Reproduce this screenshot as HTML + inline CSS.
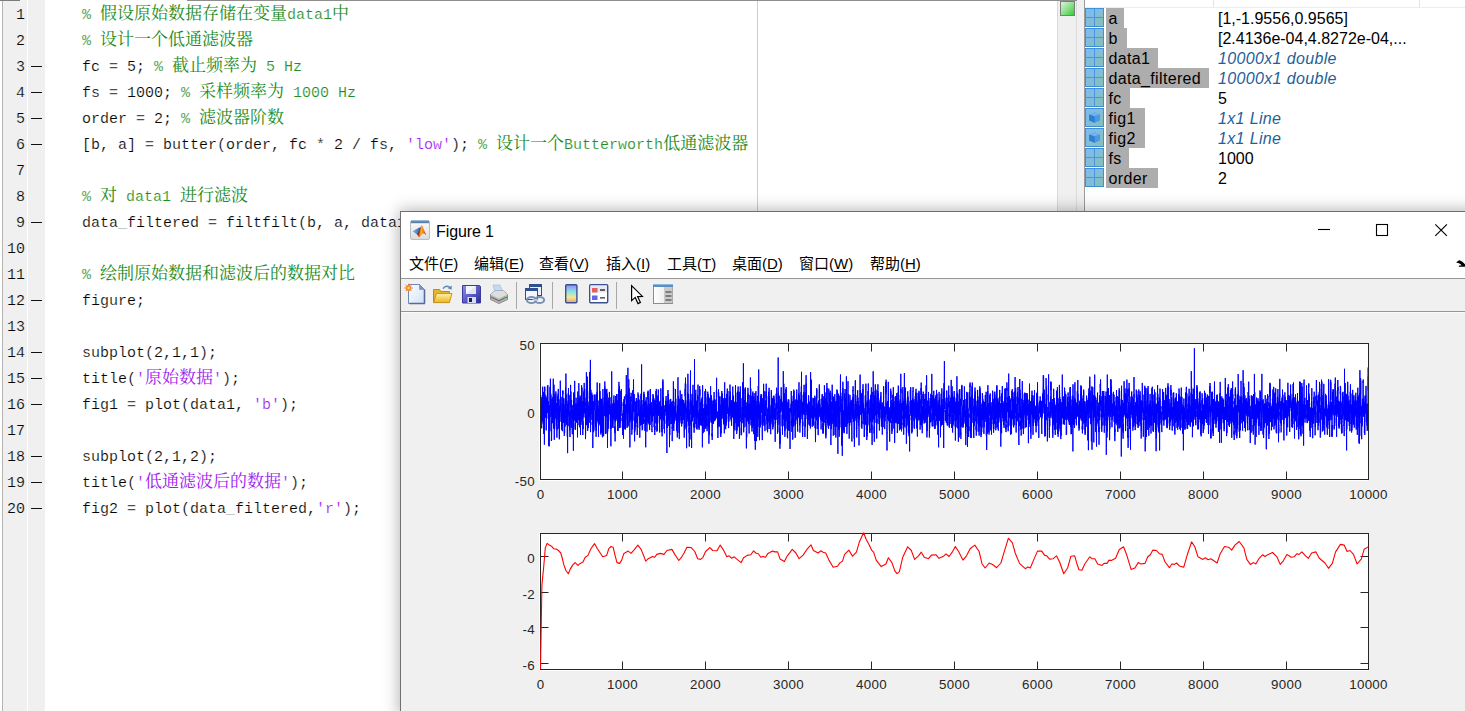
<!DOCTYPE html>
<html lang="zh-CN"><head><meta charset="utf-8"><title>MATLAB</title>
<style>
*{box-sizing:border-box;margin:0;padding:0}
html,body{width:1465px;height:711px;overflow:hidden;background:#fff}
body{position:relative;font-family:"Liberation Sans","Noto Sans CJK SC",sans-serif;color:#000}
/* editor */
#ed{position:absolute;left:0;top:0;width:1085px;height:711px;background:#fff}
#ed .edge{position:absolute;left:2px;top:0;width:1px;height:711px;background:#b4b4b4}
#ed .g1{position:absolute;left:3px;top:0;width:24px;height:711px;background:#f0f0f0}
#ed .g2{position:absolute;left:28px;top:0;width:17px;height:711px;background:#f0f0f0}
#ed .topl{position:absolute;left:187px;top:0;width:890px;height:1px;background:#8e8e8e}
#ed .tab{position:absolute;left:0;top:0;width:20px;height:1px;background:#7c7c7c}
#ed .margin{position:absolute;left:757px;top:1px;width:1px;height:711px;background:#cfcfcf}
#ed .sb{position:absolute;left:1057px;top:1px;width:20px;height:711px;background:#f0f0f0;border-left:1px solid #dadada;border-right:1px solid #dcdcdc}
#ed .sp{position:absolute;left:1077px;top:0;width:8px;height:711px;background:#f0f0f0;border-right:1px solid #9c9c9c}
#ed .ok{position:absolute;left:1060px;top:1px;width:15px;height:15px;border:1px solid #7d7d7d;background:linear-gradient(135deg,#d9f5d9 0%,#8fe08f 50%,#2fcf2f 100%)}
.ln{position:absolute;left:0;height:26px;width:1057px;line-height:26px;white-space:pre;font-family:"Liberation Mono","Noto Serif CJK SC",monospace;font-size:15px;color:#000}
.ln .no{position:absolute;left:0;width:25px;text-align:right;top:0;-webkit-text-stroke:.2px #f0f0f0}
.ln .dash{position:absolute;left:31px;top:11px;width:11px;height:1px;background:#111}
.ln .code{position:absolute;left:82px;top:0;-webkit-text-stroke:.2px #fff}
.ln .z{-webkit-text-stroke:0;font-size:17px;font-family:"Noto Serif CJK SC",serif;line-height:0;position:relative;top:0}
.c{color:#228b22}.s{color:#a020f0}
/* workspace */
#ws{position:absolute;left:1085px;top:0;width:380px;height:711px;background:#fff}
#ws .hl{position:absolute;left:0;top:7px;width:380px;height:1px;background:#ececec}
#ws .hv{position:absolute;left:128px;top:0;width:1px;height:7px;background:#e4e4e4}
#ws .hv2{position:absolute;left:334px;top:0;width:1px;height:7px;background:#e4e4e4}
.wr{position:absolute;left:0;width:380px;height:20px;font-size:16px;line-height:21px;white-space:nowrap}
.wr .ic{position:absolute;left:0;top:0;width:19px;height:18.5px;display:block}
.ic.g{border:1px solid #3f8fd8;background:
 linear-gradient(#4796dc,#4796dc) 8px 0/1.4px 100% no-repeat,
 linear-gradient(#4796dc,#4796dc) 0 7.6px/100% 1.4px no-repeat,
 linear-gradient(135deg,#7bbcf2 0%,#82bddc 45%,#86bfb0 100%)}
.ic.o{border:1px solid #3f8fd8;background:linear-gradient(135deg,#7bbcf2 0%,#82bddc 45%,#86bfb0 100%)}
.ic.o svg{position:absolute;left:-1px;top:-1px}
.wr .nm{position:absolute;left:21px;top:0;height:20px;background:#adadad;display:block}
.wr .nm b{font-weight:normal;position:absolute;left:2.5px;top:0;letter-spacing:.35px}
.wr .vl{position:absolute;left:133px;top:0}
.wr .it{font-style:italic;color:#1f5f9a;letter-spacing:.35px}
/* figure */
#fig{position:absolute;left:400px;top:211px;width:1120px;height:505px;background:#f0f0f0;border:1px solid #6f6f6f;box-shadow:0 0 15px 1px rgba(0,0,0,.30)}
#fig .tb{position:absolute;left:0;top:0;width:100%;height:66px;background:#fff}
#fig .ttl{position:absolute;left:35px;top:9.5px;font-size:16px;letter-spacing:-.1px;line-height:20px;white-space:nowrap}
#fig .mi{position:absolute;top:41.5px;font-size:15px;line-height:20px;white-space:nowrap;font-family:"Liberation Sans","Noto Sans CJK SC",sans-serif}
#fig .mi u{text-decoration:underline;text-underline-offset:2px}
#fig .l1{position:absolute;left:0;top:66px;width:100%;height:1px;background:#969696}
#fig .tool{position:absolute;left:0;top:67px;width:100%;height:32px;background:#f0f0f0}
#fig .l2{position:absolute;left:0;top:99px;width:100%;height:1px;background:#969696}
#fig .l3{position:absolute;left:0;top:100px;width:100%;height:1px;background:#fbfbfb}
#fig .sep{position:absolute;top:3px;width:1px;height:27px;background:#a8a8a8}
#fig svg.ti{position:absolute}
#plots{position:absolute;left:-1px;top:-1px;font-family:"Liberation Sans",sans-serif;font-size:13.33px;fill:#262626;letter-spacing:.3px}
#chrome{position:absolute;left:-1px;top:-1px}
</style></head>
<body>
<div id="ed">
<div class="g1"></div><div class="g2"></div><div class="edge"></div>
<div class="margin"></div><div class="sb"></div><div class="sp"></div><div class="topl"></div><div class="tab"></div><div class="ok"></div>
<div class="ln" style="top:3px"><span class="no">1</span><span class="code"><span class="c">% <span class="z">假设原始数据存储在变量</span>data1<span class="z">中</span></span></span></div>
<div class="ln" style="top:29px"><span class="no">2</span><span class="code"><span class="c">% <span class="z">设计一个低通滤波器</span></span></span></div>
<div class="ln" style="top:55px"><span class="no">3</span><i class="dash"></i><span class="code">fc = 5; <span class="c">% <span class="z">截止频率为</span> 5 Hz</span></span></div>
<div class="ln" style="top:81px"><span class="no">4</span><i class="dash"></i><span class="code">fs = 1000; <span class="c">% <span class="z">采样频率为</span> 1000 Hz</span></span></div>
<div class="ln" style="top:107px"><span class="no">5</span><i class="dash"></i><span class="code">order = 2; <span class="c">% <span class="z">滤波器阶数</span></span></span></div>
<div class="ln" style="top:133px"><span class="no">6</span><i class="dash"></i><span class="code">[b, a] = butter(order, fc * 2 / fs, <span class="s">'low'</span>); <span class="c">% <span class="z">设计一个</span>Butterworth<span class="z">低通滤波器</span></span></span></div>
<div class="ln" style="top:159px"><span class="no">7</span><span class="code"></span></div>
<div class="ln" style="top:185px"><span class="no">8</span><span class="code"><span class="c">% <span class="z">对</span> data1 <span class="z">进行滤波</span></span></span></div>
<div class="ln" style="top:211px"><span class="no">9</span><i class="dash"></i><span class="code">data_filtered = filtfilt(b, a, data1);</span></div>
<div class="ln" style="top:237px"><span class="no">10</span><span class="code"></span></div>
<div class="ln" style="top:263px"><span class="no">11</span><span class="code"><span class="c">% <span class="z">绘制原始数据和滤波后的数据对比</span></span></span></div>
<div class="ln" style="top:289px"><span class="no">12</span><i class="dash"></i><span class="code">figure;</span></div>
<div class="ln" style="top:315px"><span class="no">13</span><span class="code"></span></div>
<div class="ln" style="top:341px"><span class="no">14</span><i class="dash"></i><span class="code">subplot(2,1,1);</span></div>
<div class="ln" style="top:367px"><span class="no">15</span><i class="dash"></i><span class="code">title(<span class="s">'<span class="z">原始数据</span>'</span>);</span></div>
<div class="ln" style="top:393px"><span class="no">16</span><i class="dash"></i><span class="code">fig1 = plot(data1, <span class="s">'b'</span>);</span></div>
<div class="ln" style="top:419px"><span class="no">17</span><span class="code"></span></div>
<div class="ln" style="top:445px"><span class="no">18</span><i class="dash"></i><span class="code">subplot(2,1,2);</span></div>
<div class="ln" style="top:471px"><span class="no">19</span><i class="dash"></i><span class="code">title(<span class="s">'<span class="z">低通滤波后的数据</span>'</span>);</span></div>
<div class="ln" style="top:497px"><span class="no">20</span><i class="dash"></i><span class="code">fig2 = plot(data_filtered,<span class="s">'r'</span>);</span></div>

</div>
<div id="ws"><div class="hl"></div><div class="hv"></div><div class="hv2"></div>
<div class="wr" style="top:8px"><i class="ic g"></i><span class="nm" style="width:18px"><b>a</b></span><span class="vl">[1,-1.9556,0.9565]</span></div>
<div class="wr" style="top:28px"><i class="ic g"></i><span class="nm" style="width:21px"><b>b</b></span><span class="vl">[2.4136e-04,4.8272e-04,...</span></div>
<div class="wr" style="top:48px"><i class="ic g"></i><span class="nm" style="width:52px"><b>data1</b></span><span class="vl it">10000x1 double</span></div>
<div class="wr" style="top:68px"><i class="ic g"></i><span class="nm" style="width:103px"><b>data_filtered</b></span><span class="vl it">10000x1 double</span></div>
<div class="wr" style="top:88px"><i class="ic g"></i><span class="nm" style="width:24px"><b>fc</b></span><span class="vl">5</span></div>
<div class="wr" style="top:108px"><i class="ic o"><svg width="19" height="19" viewBox="0 0 19 19"><path d="M4.2 6.6 L9.8 4.6 L15 6.4 L15 12.2 L9.6 14.8 L4.2 12.4Z" fill="#3f8fe0"/><path d="M4.2 6.6 L9.6 8.6 L15 6.4 L9.8 4.6Z" fill="#6db3f2"/><path d="M9.6 8.6 L15 6.4 L15 12.2 L9.6 14.8Z" fill="#4a9ae8"/><path d="M4.2 6.6 L9.6 8.6 L9.6 14.8 L4.2 12.4Z" fill="#2f7fd0"/></svg></i><span class="nm" style="width:39px"><b>fig1</b></span><span class="vl it">1x1 Line</span></div>
<div class="wr" style="top:128px"><i class="ic o"><svg width="19" height="19" viewBox="0 0 19 19"><path d="M4.2 6.6 L9.8 4.6 L15 6.4 L15 12.2 L9.6 14.8 L4.2 12.4Z" fill="#3f8fe0"/><path d="M4.2 6.6 L9.6 8.6 L15 6.4 L9.8 4.6Z" fill="#6db3f2"/><path d="M9.6 8.6 L15 6.4 L15 12.2 L9.6 14.8Z" fill="#4a9ae8"/><path d="M4.2 6.6 L9.6 8.6 L9.6 14.8 L4.2 12.4Z" fill="#2f7fd0"/></svg></i><span class="nm" style="width:39px"><b>fig2</b></span><span class="vl it">1x1 Line</span></div>
<div class="wr" style="top:148px"><i class="ic g"></i><span class="nm" style="width:23px"><b>fs</b></span><span class="vl">1000</span></div>
<div class="wr" style="top:168px"><i class="ic g"></i><span class="nm" style="width:52px"><b>order</b></span><span class="vl">2</span></div>

</div>
<div id="fig">
<svg id="plots" width="1065" height="500" viewBox="400 211 1065 500"><rect x="539.0" y="343.5" width="829.5" height="137.5" fill="#fff"/><rect x="539.0" y="533.5" width="829.5" height="137.5" fill="#fff"/><path d="M622.5 479.5v-8M622.5 343.5v8M705.5 479.5v-8M705.5 343.5v8M788.5 479.5v-8M788.5 343.5v8M871.5 479.5v-8M871.5 343.5v8M954.5 479.5v-8M954.5 343.5v8M1037.5 479.5v-8M1037.5 343.5v8M1120.5 479.5v-8M1120.5 343.5v8M1203.5 479.5v-8M1203.5 343.5v8M1286.5 479.5v-8M1286.5 343.5v8M540.5 411.5h8M1368.5 411.5h-8" stroke="#262626" stroke-width="1" fill="none"/><path d="M622.5 669.5v-8M622.5 533.5v8M705.5 669.5v-8M705.5 533.5v8M788.5 669.5v-8M788.5 533.5v8M871.5 669.5v-8M871.5 533.5v8M954.5 669.5v-8M954.5 533.5v8M1037.5 669.5v-8M1037.5 533.5v8M1120.5 669.5v-8M1120.5 533.5v8M1203.5 669.5v-8M1203.5 533.5v8M1286.5 669.5v-8M1286.5 533.5v8M540.5 556.5h8M1368.5 556.5h-8M540.5 592.5h8M1368.5 592.5h-8M540.5 627.5h8M1368.5 627.5h-8M540.5 663.5h8M1368.5 663.5h-8" stroke="#262626" stroke-width="1" fill="none"/><rect x="540.5" y="343.5" width="828.0" height="136.0" fill="none" stroke="#262626" stroke-width="1"/><rect x="540.5" y="533.5" width="828.0" height="136.0" fill="none" stroke="#262626" stroke-width="1"/><clipPath id="c1"><rect x="541.0" y="343.5" width="827.0" height="136.0"/></clipPath><polyline clip-path="url(#c1)" points="540.5,410.5 540.6,398.6 540.7,395.1 540.7,409.9 540.8,418.7 540.9,409.7 541.0,406.9 541.1,401.6 541.2,421.4 541.2,422.1 541.3,405.0 541.4,411.1 541.5,406.1 541.6,414.9 541.7,428.3 541.7,425.7 541.8,397.2 541.9,417.6 542.0,417.7 542.1,420.8 542.2,410.2 542.2,409.8 542.3,411.0 542.4,405.6 542.5,399.7 542.6,393.1 542.7,386.7 542.7,397.3 542.8,417.4 542.9,399.0 543.0,420.2 543.1,412.5 543.1,423.6 543.2,413.3 543.3,422.2 543.4,416.0 543.5,391.9 543.6,422.8 543.6,417.5 543.7,433.8 543.8,422.6 543.9,412.2 544.0,416.4 544.1,410.1 544.1,410.1 544.2,419.6 544.3,406.2 544.4,444.6 544.5,386.9 544.6,403.3 544.6,389.0 544.7,390.9 544.8,386.7 544.9,404.1 545.0,394.4 545.1,408.0 545.1,400.2 545.2,405.7 545.3,409.8 545.4,417.7 545.5,404.4 545.6,407.0 545.6,396.9 545.7,414.2 545.8,406.2 545.9,406.6 546.0,412.1 546.0,416.3 546.1,420.0 546.2,430.3 546.3,430.3 546.4,421.5 546.5,409.5 546.5,398.1 546.6,402.6 546.7,402.0 546.8,404.3 546.9,405.0 547.0,409.4 547.0,404.4 547.1,395.8 547.2,411.2 547.3,411.8 547.4,386.4 547.5,398.5 547.5,389.7 547.6,393.2 547.7,413.0 547.8,385.0 547.9,393.2 548.0,409.5 548.0,404.6 548.1,409.9 548.2,418.6 548.3,412.0 548.4,407.8 548.4,401.4 548.5,404.9 548.6,413.4 548.7,405.1 548.8,445.6 548.9,415.7 548.9,415.8 549.0,430.7 549.1,446.4 549.2,435.9 549.3,423.3 549.4,417.9 549.4,406.3 549.5,425.3 549.6,413.8 549.7,405.4 549.8,412.4 549.9,431.3 549.9,401.9 550.0,386.8 550.1,395.8 550.2,410.1 550.3,403.6 550.4,395.9 550.4,378.7 550.5,396.9 550.6,403.4 550.7,393.3 550.8,409.5 550.9,395.1 550.9,416.9 551.0,415.1 551.1,404.8 551.2,398.8 551.3,410.2 551.3,418.0 551.4,441.0 551.5,436.3 551.6,440.2 551.7,434.7 551.8,420.3 551.8,423.5 551.9,409.0 552.0,410.3 552.1,413.9 552.2,410.0 552.3,407.3 552.3,403.6 552.4,415.1 552.5,413.0 552.6,422.7 552.7,397.3 552.8,398.6 552.8,409.1 552.9,408.3 553.0,411.4 553.1,395.9 553.2,392.2 553.3,378.7 553.3,398.7 553.4,410.9 553.5,428.5 553.6,398.9 553.7,409.4 553.7,424.8 553.8,409.5 553.9,424.8 554.0,384.7 554.1,408.4 554.2,416.6 554.2,426.4 554.3,439.8 554.4,419.1 554.5,427.8 554.6,405.9 554.7,429.3 554.7,418.8 554.8,400.6 554.9,394.9 555.0,417.1 555.1,418.1 555.2,395.4 555.2,393.7 555.3,407.4 555.4,402.9 555.5,404.9 555.6,411.2 555.7,408.8 555.7,394.3 555.8,401.1 555.9,391.4 556.0,411.7 556.1,412.2 556.2,419.4 556.2,412.1 556.3,422.3 556.4,426.2 556.5,405.0 556.6,402.8 556.6,412.0 556.7,411.9 556.8,425.2 556.9,437.6 557.0,426.6 557.1,426.5 557.1,428.7 557.2,429.6 557.3,423.7 557.4,411.0 557.5,409.7 557.6,415.1 557.6,398.8 557.7,409.5 557.8,403.8 557.9,396.2 558.0,411.5 558.1,419.2 558.1,393.7 558.2,403.9 558.3,388.9 558.4,399.4 558.5,395.9 558.6,400.1 558.6,426.7 558.7,408.4 558.8,423.8 558.9,428.0 559.0,428.8 559.0,422.0 559.1,424.5 559.2,419.9 559.3,439.3 559.4,426.6 559.5,438.4 559.5,415.4 559.6,405.9 559.7,417.5 559.8,408.9 559.9,409.0 560.0,399.3 560.0,411.9 560.1,408.9 560.2,405.3 560.3,380.7 560.4,389.4 560.5,402.9 560.5,402.9 560.6,407.0 560.7,409.3 560.8,412.8 560.9,413.9 561.0,421.8 561.0,416.5 561.1,396.9 561.2,406.4 561.3,410.4 561.4,412.8 561.5,414.8 561.5,416.7 561.6,429.6 561.7,426.8 561.8,422.0 561.9,426.1 561.9,422.1 562.0,419.6 562.1,420.1 562.2,403.4 562.3,431.2 562.4,413.3 562.4,416.2 562.5,416.3 562.6,404.8 562.7,390.6 562.8,394.2 562.9,390.7 562.9,400.1 563.0,401.4 563.1,397.8 563.2,414.4 563.3,420.8 563.4,421.8 563.4,420.5 563.5,422.9 563.6,401.6 563.7,408.0 563.8,413.0 563.9,398.5 563.9,416.6 564.0,404.5 564.1,408.0 564.2,431.9 564.3,435.8 564.3,434.2 564.4,422.3 564.5,415.2 564.6,433.0 564.7,409.7 564.8,418.1 564.8,414.4 564.9,415.7 565.0,413.8 565.1,426.6 565.2,419.6 565.3,421.6 565.3,406.8 565.4,393.1 565.5,387.6 565.6,409.8 565.7,417.6 565.8,402.2 565.8,402.7 565.9,373.6 566.0,389.8 566.1,405.0 566.2,394.8 566.3,402.3 566.3,424.9 566.4,415.6 566.5,413.1 566.6,410.8 566.7,409.9 566.8,413.9 566.8,409.4 566.9,418.0 567.0,422.7 567.1,404.0 567.2,415.9 567.2,417.2 567.3,436.6 567.4,422.4 567.5,411.9 567.6,453.1 567.7,405.6 567.7,416.3 567.8,407.5 567.9,412.1 568.0,409.1 568.1,400.7 568.2,414.5 568.2,393.4 568.3,409.2 568.4,406.3 568.5,388.0 568.6,407.4 568.7,405.7 568.7,399.0 568.8,400.6 568.9,426.2 569.0,406.7 569.1,394.9 569.2,400.8 569.2,413.1 569.3,416.1 569.4,413.5 569.5,425.4 569.6,422.3 569.6,426.1 569.7,430.3 569.8,423.4 569.9,431.0 570.0,437.0 570.1,411.0 570.1,424.7 570.2,414.8 570.3,412.1 570.4,413.9 570.5,417.1 570.6,408.2 570.6,384.9 570.7,406.4 570.8,399.9 570.9,391.6 571.0,397.3 571.1,399.6 571.1,401.2 571.2,427.9 571.3,418.4 571.4,409.9 571.5,406.7 571.6,399.9 571.6,407.0 571.7,413.0 571.8,410.7 571.9,412.8 572.0,412.1 572.0,411.6 572.1,423.5 572.2,430.7 572.3,434.2 572.4,420.7 572.5,415.9 572.5,415.2 572.6,413.2 572.7,410.2 572.8,414.2 572.9,405.3 573.0,420.0 573.0,412.7 573.1,417.3 573.2,404.8 573.3,416.0 573.4,450.7 573.5,403.7 573.5,393.6 573.6,410.0 573.7,409.4 573.8,392.4 573.9,406.9 574.0,395.5 574.0,406.2 574.1,404.2 574.2,420.8 574.3,401.0 574.4,413.3 574.5,418.7 574.5,393.2 574.6,404.9 574.7,380.9 574.8,407.5 574.9,414.0 574.9,415.6 575.0,408.3 575.1,427.8 575.2,429.3 575.3,423.2 575.4,429.9 575.4,415.4 575.5,415.3 575.6,421.7 575.7,403.5 575.8,405.3 575.9,408.1 575.9,414.2 576.0,421.3 576.1,397.7 576.2,400.4 576.3,416.3 576.4,404.7 576.4,419.5 576.5,408.9 576.6,409.8 576.7,408.0 576.8,409.1 576.9,409.5 576.9,423.0 577.0,418.7 577.1,422.0 577.2,421.8 577.3,419.7 577.3,414.5 577.4,403.6 577.5,437.4 577.6,409.8 577.7,412.7 577.8,391.5 577.8,403.0 577.9,425.2 578.0,407.6 578.1,415.5 578.2,402.5 578.3,420.0 578.3,409.1 578.4,406.6 578.5,403.6 578.6,405.0 578.7,413.0 578.8,390.6 578.8,383.2 578.9,395.1 579.0,406.0 579.1,398.3 579.2,397.9 579.3,407.0 579.3,408.4 579.4,398.9 579.5,420.6 579.6,415.8 579.7,427.3 579.8,417.0 579.8,417.3 579.9,419.2 580.0,416.9 580.1,395.6 580.2,415.7 580.2,418.0 580.3,401.3 580.4,423.6 580.5,435.0 580.6,413.6 580.7,422.1 580.7,397.0 580.8,421.7 580.9,416.0 581.0,424.8 581.1,410.2 581.2,416.7 581.2,405.6 581.3,405.3 581.4,404.4 581.5,388.1 581.6,385.2 581.7,395.7 581.7,406.9 581.8,411.3 581.9,402.8 582.0,387.6 582.1,414.9 582.2,417.7 582.2,417.0 582.3,420.4 582.4,419.3 582.5,412.8 582.6,401.3 582.6,416.1 582.7,423.0 582.8,435.0 582.9,421.9 583.0,421.4 583.1,429.1 583.1,425.4 583.2,413.9 583.3,402.3 583.4,405.6 583.5,409.2 583.6,413.8 583.6,408.3 583.7,411.1 583.8,392.4 583.9,417.5 584.0,407.8 584.1,390.6 584.1,400.5 584.2,382.9 584.3,392.3 584.4,393.8 584.5,401.4 584.6,413.3 584.6,412.9 584.7,388.8 584.8,405.5 584.9,405.8 585.0,402.8 585.1,406.1 585.1,402.2 585.2,413.3 585.3,412.9 585.4,408.1 585.5,425.2 585.5,439.1 585.6,435.2 585.7,432.4 585.8,416.9 585.9,422.7 586.0,420.1 586.0,413.8 586.1,397.7 586.2,411.4 586.3,409.6 586.4,372.2 586.5,408.5 586.5,403.0 586.6,399.0 586.7,425.1 586.8,399.3 586.9,407.5 587.0,406.6 587.0,379.8 587.1,398.2 587.2,376.6 587.3,388.5 587.4,409.2 587.5,399.7 587.5,401.1 587.6,412.1 587.7,430.9 587.8,413.9 587.9,414.7 587.9,424.6 588.0,401.5 588.1,421.2 588.2,424.6 588.3,425.8 588.4,427.9 588.4,425.8 588.5,416.3 588.6,412.4 588.7,417.4 588.8,411.8 588.9,422.9 588.9,406.5 589.0,417.4 589.1,404.7 589.2,409.8 589.3,402.0 589.4,391.3 589.4,399.0 589.5,371.9 589.6,397.9 589.7,402.7 589.8,412.8 589.9,397.3 589.9,399.1 590.0,408.4 590.1,422.7 590.2,415.3 590.3,408.5 590.4,420.9 590.4,359.9 590.5,432.1 590.6,431.3 590.7,421.8 590.8,424.8 590.8,416.3 590.9,389.8 591.0,395.8 591.1,419.9 591.2,408.1 591.3,410.3 591.3,412.2 591.4,402.1 591.5,413.8 591.6,412.0 591.7,410.6 591.8,406.4 591.8,392.7 591.9,395.2 592.0,411.6 592.1,402.0 592.2,406.9 592.3,394.9 592.3,401.8 592.4,397.9 592.5,407.9 592.6,425.5 592.7,407.1 592.8,409.1 592.8,448.0 592.9,422.2 593.0,414.5 593.1,425.2 593.2,429.4 593.2,424.7 593.3,420.5 593.4,427.0 593.5,429.8 593.6,432.2 593.7,415.9 593.7,401.4 593.8,411.5 593.9,430.3 594.0,418.4 594.1,407.4 594.2,394.6 594.2,396.9 594.3,401.7 594.4,401.0 594.5,409.7 594.6,402.5 594.7,399.4 594.7,405.2 594.8,400.1 594.9,406.1 595.0,401.9 595.1,394.6 595.2,402.6 595.2,407.4 595.3,413.1 595.4,424.0 595.5,414.5 595.6,411.4 595.7,427.2 595.7,410.3 595.8,426.5 595.9,422.9 596.0,431.5 596.1,436.9 596.1,405.9 596.2,431.0 596.3,410.7 596.4,420.8 596.5,411.1 596.6,417.9 596.6,414.6 596.7,403.1 596.8,394.3 596.9,418.3 597.0,405.3 597.1,391.7 597.1,399.6 597.2,382.5 597.3,400.9 597.4,394.6 597.5,401.7 597.6,400.6 597.6,407.9 597.7,421.2 597.8,405.3 597.9,420.4 598.0,404.6 598.1,400.6 598.1,411.0 598.2,423.3 598.3,410.9 598.4,422.2 598.5,436.9 598.5,426.7 598.6,409.0 598.7,421.2 598.8,415.0 598.9,416.5 599.0,425.4 599.0,415.4 599.1,407.9 599.2,409.2 599.3,409.7 599.4,423.7 599.5,392.2 599.5,393.7 599.6,388.4 599.7,383.2 599.8,400.9 599.9,405.1 600.0,400.0 600.0,391.1 600.1,422.7 600.2,413.0 600.3,417.1 600.4,406.2 600.5,398.5 600.5,413.5 600.6,421.6 600.7,414.0 600.8,420.3 600.9,434.6 601.0,417.2 601.0,432.7 601.1,419.0 601.2,432.6 601.3,408.5 601.4,426.8 601.4,402.0 601.5,426.5 601.6,399.2 601.7,414.2 601.8,421.2 601.9,406.8 601.9,398.8 602.0,407.1 602.1,406.0 602.2,402.5 602.3,409.4 602.4,437.3 602.4,414.7 602.5,407.3 602.6,408.5 602.7,402.4 602.8,416.9 602.9,389.1 602.9,407.1 603.0,414.3 603.1,410.7 603.2,414.8 603.3,425.1 603.4,434.3 603.4,417.2 603.5,419.4 603.6,436.2 603.7,426.5 603.8,410.0 603.8,410.1 603.9,408.6 604.0,405.5 604.1,409.8 604.2,397.4 604.3,416.1 604.3,414.4 604.4,408.2 604.5,400.7 604.6,396.5 604.7,386.6 604.8,399.5 604.8,381.5 604.9,391.4 605.0,408.3 605.1,404.4 605.2,389.2 605.3,404.3 605.3,415.0 605.4,434.0 605.5,422.2 605.6,424.3 605.7,420.1 605.8,403.4 605.8,419.2 605.9,425.3 606.0,433.6 606.1,433.3 606.2,422.5 606.2,422.3 606.3,390.1 606.4,416.9 606.5,416.3 606.6,401.3 606.7,406.7 606.7,414.2 606.8,388.9 606.9,398.9 607.0,404.0 607.1,393.5 607.2,395.8 607.2,406.5 607.3,401.3 607.4,404.0 607.5,448.0 607.6,428.6 607.7,431.5 607.7,412.1 607.8,405.0 607.9,411.5 608.0,412.8 608.1,413.3 608.2,424.6 608.2,411.1 608.3,428.7 608.4,405.1 608.5,407.6 608.6,411.8 608.7,414.8 608.7,420.6 608.8,409.8 608.9,397.8 609.0,409.6 609.1,399.7 609.1,407.6 609.2,397.5 609.3,406.0 609.4,391.9 609.5,399.3 609.6,397.0 609.6,407.1 609.7,414.3 609.8,409.3 609.9,399.9 610.0,397.5 610.1,413.8 610.1,404.2 610.2,404.5 610.3,409.9 610.4,428.8 610.5,415.0 610.6,428.4 610.6,412.2 610.7,417.8 610.8,421.6 610.9,446.3 611.0,417.0 611.1,414.1 611.1,428.7 611.2,407.2 611.3,412.6 611.4,412.6 611.5,413.8 611.5,413.1 611.6,404.9 611.7,371.4 611.8,399.4 611.9,402.6 612.0,413.3 612.0,416.3 612.1,415.7 612.2,418.6 612.3,403.5 612.4,413.3 612.5,406.7 612.5,427.1 612.6,412.4 612.7,423.7 612.8,420.9 612.9,424.4 613.0,428.0 613.0,406.9 613.1,417.8 613.2,412.3 613.3,418.6 613.4,409.2 613.5,414.3 613.5,404.7 613.6,400.3 613.7,405.3 613.8,407.6 613.9,395.7 614.0,395.4 614.0,401.2 614.1,420.8 614.2,405.8 614.3,407.7 614.4,408.6 614.4,407.3 614.5,413.8 614.6,409.2 614.7,403.1 614.8,420.2 614.9,433.1 614.9,426.5 615.0,428.8 615.1,441.4 615.2,426.5 615.3,410.8 615.4,412.3 615.4,410.2 615.5,421.8 615.6,403.2 615.7,396.0 615.8,412.7 615.9,417.3 615.9,420.9 616.0,403.4 616.1,410.1 616.2,417.8 616.3,400.6 616.4,402.1 616.4,401.2 616.5,419.2 616.6,402.7 616.7,394.1 616.8,412.3 616.8,396.1 616.9,394.1 617.0,399.8 617.1,417.2 617.2,417.1 617.3,402.9 617.3,402.5 617.4,400.5 617.5,400.7 617.6,411.9 617.7,414.5 617.8,430.9 617.8,412.2 617.9,403.4 618.0,430.9 618.1,427.0 618.2,413.4 618.3,411.8 618.3,422.7 618.4,417.1 618.5,418.3 618.6,389.4 618.7,410.7 618.8,395.1 618.8,383.8 618.9,381.9 619.0,383.7 619.1,384.1 619.2,410.8 619.3,405.4 619.3,410.8 619.4,409.2 619.5,386.4 619.6,427.4 619.7,410.3 619.7,427.8 619.8,407.8 619.9,410.2 620.0,427.8 620.1,407.7 620.2,422.7 620.2,410.1 620.3,416.6 620.4,422.0 620.5,418.4 620.6,414.1 620.7,405.7 620.7,409.9 620.8,390.8 620.9,412.7 621.0,411.5 621.1,410.1 621.2,407.0 621.2,409.2 621.3,401.7 621.4,389.1 621.5,399.9 621.6,405.4 621.7,404.5 621.7,401.9 621.8,405.7 621.9,404.4 622.0,415.8 622.1,413.2 622.1,420.8 622.2,418.0 622.3,427.3 622.4,426.6 622.5,428.0 622.6,431.5 622.6,435.0 622.7,433.8 622.8,415.3 622.9,426.3 623.0,429.0 623.1,415.5 623.1,423.4 623.2,420.2 623.3,410.3 623.4,425.3 623.5,438.6 623.6,408.5 623.6,402.1 623.7,423.0 623.8,414.1 623.9,399.1 624.0,418.8 624.1,407.0 624.1,407.5 624.2,401.2 624.3,418.7 624.4,396.4 624.5,407.6 624.6,406.1 624.6,413.8 624.7,429.2 624.8,414.3 624.9,426.4 625.0,416.9 625.0,426.2 625.1,423.6 625.2,424.7 625.3,418.2 625.4,416.3 625.5,429.5 625.5,419.1 625.6,404.4 625.7,410.7 625.8,419.2 625.9,409.2 626.0,408.3 626.0,394.5 626.1,399.4 626.2,393.7 626.3,375.1 626.4,403.0 626.5,402.7 626.5,411.7 626.6,413.3 626.7,395.2 626.8,402.8 626.9,394.2 627.0,427.9 627.0,418.5 627.1,398.6 627.2,402.2 627.3,406.2 627.4,409.2 627.4,419.2 627.5,422.4 627.6,424.8 627.7,420.7 627.8,426.5 627.9,419.5 627.9,367.8 628.0,426.3 628.1,420.2 628.2,406.2 628.3,413.3 628.4,412.3 628.4,391.0 628.5,403.4 628.6,408.5 628.7,393.6 628.8,379.4 628.9,408.4 628.9,406.7 629.0,402.0 629.1,410.4 629.2,388.4 629.3,404.5 629.4,414.4 629.4,406.8 629.5,421.2 629.6,423.0 629.7,420.4 629.8,404.3 629.9,447.4 629.9,428.0 630.0,416.6 630.1,418.4 630.2,404.8 630.3,414.0 630.3,413.2 630.4,412.1 630.5,418.3 630.6,397.0 630.7,421.1 630.8,404.9 630.8,401.2 630.9,396.3 631.0,401.4 631.1,392.8 631.2,395.5 631.3,402.6 631.3,403.8 631.4,412.4 631.5,418.6 631.6,412.6 631.7,411.7 631.8,427.3 631.8,434.7 631.9,432.6 632.0,416.9 632.1,415.2 632.2,429.3 632.3,418.6 632.3,410.2 632.4,403.9 632.5,418.8 632.6,413.1 632.7,398.9 632.7,390.3 632.8,397.9 632.9,420.8 633.0,407.2 633.1,410.9 633.2,406.1 633.2,408.6 633.3,404.3 633.4,397.6 633.5,379.4 633.6,391.5 633.7,396.6 633.7,402.7 633.8,412.0 633.9,410.3 634.0,400.4 634.1,403.9 634.2,394.2 634.2,408.8 634.3,415.1 634.4,432.7 634.5,419.3 634.6,441.3 634.7,417.4 634.7,432.0 634.8,422.7 634.9,430.4 635.0,419.1 635.1,419.0 635.1,401.3 635.2,408.9 635.3,421.1 635.4,427.5 635.5,411.6 635.6,415.2 635.6,420.5 635.7,405.9 635.8,410.1 635.9,405.0 636.0,408.5 636.1,405.8 636.1,402.4 636.2,414.7 636.3,398.1 636.4,402.5 636.5,423.2 636.6,410.1 636.6,401.1 636.7,409.0 636.8,399.9 636.9,413.3 637.0,413.1 637.1,426.3 637.1,425.0 637.2,435.0 637.3,429.1 637.4,421.4 637.5,421.2 637.6,413.5 637.6,420.3 637.7,427.8 637.8,413.6 637.9,416.4 638.0,397.8 638.0,392.5 638.1,399.4 638.2,415.7 638.3,408.8 638.4,401.0 638.5,407.1 638.5,394.8 638.6,395.1 638.7,395.5 638.8,402.4 638.9,413.6 639.0,414.9 639.0,410.4 639.1,399.6 639.2,399.8 639.3,407.1 639.4,414.7 639.5,414.2 639.5,415.2 639.6,413.5 639.7,419.5 639.8,437.7 639.9,414.1 640.0,416.7 640.0,421.7 640.1,411.0 640.2,410.8 640.3,411.5 640.4,425.5 640.4,410.0 640.5,406.2 640.6,411.4 640.7,421.9 640.8,401.6 640.9,396.6 640.9,398.4 641.0,393.6 641.1,403.0 641.2,408.4 641.3,401.0 641.4,411.3 641.4,409.4 641.5,383.1 641.6,364.4 641.7,409.8 641.8,424.9 641.9,410.2 641.9,404.5 642.0,417.0 642.1,413.0 642.2,430.3 642.3,409.7 642.4,422.9 642.4,415.4 642.5,413.0 642.6,429.4 642.7,416.2 642.8,419.1 642.9,419.6 642.9,416.8 643.0,418.3 643.1,400.0 643.2,403.5 643.3,419.6 643.3,403.8 643.4,417.3 643.5,423.9 643.6,398.4 643.7,417.4 643.8,394.0 643.8,400.1 643.9,391.8 644.0,397.5 644.1,394.2 644.2,403.4 644.3,403.8 644.3,408.9 644.4,401.6 644.5,416.9 644.6,407.4 644.7,405.8 644.8,421.8 644.8,420.1 644.9,430.8 645.0,426.3 645.1,419.1 645.2,421.6 645.3,423.7 645.3,413.8 645.4,409.4 645.5,406.1 645.6,400.7 645.7,419.8 645.7,447.3 645.8,401.8 645.9,404.9 646.0,403.5 646.1,398.7 646.2,397.2 646.2,409.9 646.3,407.5 646.4,424.7 646.5,409.5 646.6,412.0 646.7,417.5 646.7,409.0 646.8,404.0 646.9,413.3 647.0,431.6 647.1,409.0 647.2,422.2 647.2,416.9 647.3,418.8 647.4,407.1 647.5,406.3 647.6,409.8 647.7,412.8 647.7,412.2 647.8,409.0 647.9,391.9 648.0,399.3 648.1,390.7 648.2,396.6 648.2,406.6 648.3,407.6 648.4,423.5 648.5,407.5 648.6,406.4 648.6,413.6 648.7,397.7 648.8,418.0 648.9,408.7 649.0,411.8 649.1,422.9 649.1,422.8 649.2,415.6 649.3,425.1 649.4,420.8 649.5,408.8 649.6,416.5 649.6,430.1 649.7,419.7 649.8,403.9 649.9,412.1 650.0,420.2 650.1,424.9 650.1,402.4 650.2,389.4 650.3,409.9 650.4,414.8 650.5,389.1 650.6,400.9 650.6,401.8 650.7,404.9 650.8,412.8 650.9,404.3 651.0,403.2 651.0,407.9 651.1,415.7 651.2,402.1 651.3,411.9 651.4,406.1 651.5,422.2 651.5,411.9 651.6,414.4 651.7,413.0 651.8,426.9 651.9,426.6 652.0,432.1 652.0,416.4 652.1,414.1 652.2,408.3 652.3,417.5 652.4,421.4 652.5,411.6 652.5,412.8 652.6,417.3 652.7,404.0 652.8,399.2 652.9,402.0 653.0,394.0 653.0,398.2 653.1,408.0 653.2,402.8 653.3,402.7 653.4,395.7 653.5,395.6 653.5,404.2 653.6,398.6 653.7,416.1 653.8,412.0 653.9,398.3 653.9,407.2 654.0,402.1 654.1,427.0 654.2,425.1 654.3,418.3 654.4,402.5 654.4,400.5 654.5,422.8 654.6,429.2 654.7,432.7 654.8,435.0 654.9,426.0 654.9,430.1 655.0,408.2 655.1,414.7 655.2,423.3 655.3,412.3 655.4,412.3 655.4,404.3 655.5,403.3 655.6,413.9 655.7,400.6 655.8,400.5 655.9,403.2 655.9,397.5 656.0,391.1 656.1,396.7 656.2,402.5 656.3,388.9 656.3,402.4 656.4,410.3 656.5,404.3 656.6,423.4 656.7,410.5 656.8,424.4 656.8,418.4 656.9,431.7 657.0,424.7 657.1,413.0 657.2,424.0 657.3,430.8 657.3,404.0 657.4,422.0 657.5,402.3 657.6,417.3 657.7,423.3 657.8,395.4 657.8,414.6 657.9,404.6 658.0,397.7 658.1,415.5 658.2,400.6 658.3,402.7 658.3,389.5 658.4,398.0 658.5,411.8 658.6,403.9 658.7,401.3 658.8,413.4 658.8,406.2 658.9,415.4 659.0,411.4 659.1,411.0 659.2,415.6 659.2,409.1 659.3,414.8 659.4,418.6 659.5,422.6 659.6,424.4 659.7,432.5 659.7,410.9 659.8,402.2 659.9,412.0 660.0,413.1 660.1,411.2 660.2,400.8 660.2,408.5 660.3,419.2 660.4,412.4 660.5,415.4 660.6,408.6 660.7,412.4 660.7,410.2 660.8,388.4 660.9,390.0 661.0,414.3 661.1,411.1 661.2,408.6 661.2,410.2 661.3,420.5 661.4,406.1 661.5,429.6 661.6,412.9 661.6,415.4 661.7,426.9 661.8,431.9 661.9,423.3 662.0,420.0 662.1,436.3 662.1,426.6 662.2,409.1 662.3,411.8 662.4,414.4 662.5,419.3 662.6,416.8 662.6,417.3 662.7,381.3 662.8,409.0 662.9,379.4 663.0,382.0 663.1,390.5 663.1,396.8 663.2,407.9 663.3,397.5 663.4,406.7 663.5,411.2 663.6,412.0 663.6,409.3 663.7,420.5 663.8,413.6 663.9,416.2 664.0,405.7 664.0,405.9 664.1,429.0 664.2,417.8 664.3,410.1 664.4,431.7 664.5,433.3 664.5,412.5 664.6,419.5 664.7,419.7 664.8,423.6 664.9,409.5 665.0,415.6 665.0,409.2 665.1,407.4 665.2,405.0 665.3,411.9 665.4,411.9 665.5,405.5 665.5,404.9 665.6,400.9 665.7,405.1 665.8,400.9 665.9,405.6 666.0,407.3 666.0,402.8 666.1,396.1 666.2,412.0 666.3,404.3 666.4,408.0 666.5,414.1 666.5,413.5 666.6,427.9 666.7,422.7 666.8,429.0 666.9,453.0 666.9,428.5 667.0,422.4 667.1,406.9 667.2,428.0 667.3,414.2 667.4,408.0 667.4,419.1 667.5,400.9 667.6,407.2 667.7,417.6 667.8,421.0 667.9,414.4 667.9,391.0 668.0,390.0 668.1,426.0 668.2,417.6 668.3,393.9 668.4,403.3 668.4,410.6 668.5,403.0 668.6,410.1 668.7,408.5 668.8,408.7 668.9,420.1 668.9,399.9 669.0,414.8 669.1,404.9 669.2,412.1 669.3,421.0 669.3,423.6 669.4,428.6 669.5,447.2 669.6,431.0 669.7,421.2 669.8,434.9 669.8,430.4 669.9,405.3 670.0,404.1 670.1,423.9 670.2,407.1 670.3,411.3 670.3,399.2 670.4,406.6 670.5,402.2 670.6,403.2 670.7,398.9 670.8,405.0 670.8,412.9 670.9,413.9 671.0,417.3 671.1,405.7 671.2,419.6 671.3,424.0 671.3,419.1 671.4,401.8 671.5,415.2 671.6,405.5 671.7,404.8 671.8,415.2 671.8,404.6 671.9,410.5 672.0,419.0 672.1,428.5 672.2,426.9 672.2,441.1 672.3,428.7 672.4,427.4 672.5,415.0 672.6,411.9 672.7,416.4 672.7,403.7 672.8,400.9 672.9,410.4 673.0,417.2 673.1,406.7 673.2,428.4 673.2,409.5 673.3,396.5 673.4,381.3 673.5,407.6 673.6,391.7 673.7,388.1 673.7,395.0 673.8,430.9 673.9,401.7 674.0,411.2 674.1,406.0 674.2,417.9 674.2,423.4 674.3,422.0 674.4,409.2 674.5,413.0 674.6,420.7 674.6,413.2 674.7,407.3 674.8,408.0 674.9,411.3 675.0,416.5 675.1,417.3 675.1,409.8 675.2,406.0 675.3,409.9 675.4,403.7 675.5,389.1 675.6,410.8 675.6,417.3 675.7,411.3 675.8,398.7 675.9,400.3 676.0,414.5 676.1,419.8 676.1,415.5 676.2,421.0 676.3,420.2 676.4,413.7 676.5,429.1 676.6,429.0 676.6,426.9 676.7,427.2 676.8,431.2 676.9,429.1 677.0,429.7 677.1,424.2 677.1,411.1 677.2,415.3 677.3,437.4 677.4,405.7 677.5,411.6 677.5,418.4 677.6,408.0 677.7,426.4 677.8,409.5 677.9,380.3 678.0,377.3 678.0,382.0 678.1,412.1 678.2,410.6 678.3,404.3 678.4,421.5 678.5,396.1 678.5,417.1 678.6,408.0 678.7,420.8 678.8,407.9 678.9,411.1 679.0,407.7 679.0,432.8 679.1,429.0 679.2,419.4 679.3,439.1 679.4,419.9 679.5,413.2 679.5,415.2 679.6,413.3 679.7,398.9 679.8,401.2 679.9,406.1 679.9,408.7 680.0,420.7 680.1,407.6 680.2,390.5 680.3,394.3 680.4,412.4 680.4,415.9 680.5,406.4 680.6,401.9 680.7,410.6 680.8,411.1 680.9,408.1 680.9,403.3 681.0,409.2 681.1,400.3 681.2,423.2 681.3,407.0 681.4,407.4 681.4,423.7 681.5,400.3 681.6,424.7 681.7,426.4 681.8,394.0 681.9,408.8 681.9,419.6 682.0,408.3 682.1,407.1 682.2,423.6 682.3,406.8 682.4,399.0 682.4,412.4 682.5,410.4 682.6,415.0 682.7,401.8 682.8,409.9 682.8,407.2 682.9,409.8 683.0,410.1 683.1,403.2 683.2,404.0 683.3,414.3 683.3,420.0 683.4,408.1 683.5,407.9 683.6,400.0 683.7,415.3 683.8,414.5 683.8,406.6 683.9,402.5 684.0,420.7 684.1,425.6 684.2,437.6 684.3,437.5 684.3,421.4 684.4,417.6 684.5,410.7 684.6,429.8 684.7,403.8 684.8,419.0 684.8,405.9 684.9,428.7 685.0,406.4 685.1,410.4 685.2,389.1 685.2,396.3 685.3,383.4 685.4,395.7 685.5,377.7 685.6,401.2 685.7,383.7 685.7,407.0 685.8,414.0 685.9,400.5 686.0,414.4 686.1,414.0 686.2,427.6 686.2,421.4 686.3,419.9 686.4,429.5 686.5,422.5 686.6,448.2 686.7,418.2 686.7,426.9 686.8,408.2 686.9,421.5 687.0,421.6 687.1,417.4 687.2,408.6 687.2,405.8 687.3,415.0 687.4,417.9 687.5,401.7 687.6,392.7 687.7,409.3 687.7,397.7 687.8,388.9 687.9,373.8 688.0,383.6 688.1,392.9 688.1,401.1 688.2,420.7 688.3,401.3 688.4,414.8 688.5,417.9 688.6,394.2 688.6,423.5 688.7,399.0 688.8,412.9 688.9,426.2 689.0,420.3 689.1,432.8 689.1,427.4 689.2,438.3 689.3,446.6 689.4,409.6 689.5,433.4 689.6,416.9 689.6,422.3 689.7,412.3 689.8,425.5 689.9,420.0 690.0,439.4 690.1,402.3 690.1,401.4 690.2,409.7 690.3,386.5 690.4,382.9 690.5,370.5 690.5,397.4 690.6,397.3 690.7,405.7 690.8,404.3 690.9,411.2 691.0,414.6 691.0,404.8 691.1,400.3 691.2,421.1 691.3,425.3 691.4,420.2 691.5,408.7 691.5,430.6 691.6,448.0 691.7,421.8 691.8,417.8 691.9,403.0 692.0,413.8 692.0,393.9 692.1,417.2 692.2,403.1 692.3,409.8 692.4,421.3 692.5,413.4 692.5,399.4 692.6,397.6 692.7,406.9 692.8,390.3 692.9,388.4 693.0,384.8 693.0,393.8 693.1,397.3 693.2,410.8 693.3,407.9 693.4,409.9 693.4,417.4 693.5,413.5 693.6,409.5 693.7,409.1 693.8,405.5 693.9,427.3 693.9,425.5 694.0,423.4 694.1,432.7 694.2,422.9 694.3,426.1 694.4,408.1 694.4,416.6 694.5,359.2 694.6,404.5 694.7,396.5 694.8,427.7 694.9,412.1 694.9,410.3 695.0,399.8 695.1,393.6 695.2,405.8 695.3,415.7 695.4,394.2 695.4,393.5 695.5,400.4 695.6,405.9 695.7,415.8 695.8,389.8 695.8,421.3 695.9,424.0 696.0,402.5 696.1,408.5 696.2,405.1 696.3,411.0 696.3,402.6 696.4,407.9 696.5,428.2 696.6,411.6 696.7,427.4 696.8,428.8 696.8,400.5 696.9,414.7 697.0,429.5 697.1,411.1 697.2,416.7 697.3,406.6 697.3,411.4 697.4,417.6 697.5,413.5 697.6,397.0 697.7,408.1 697.8,395.3 697.8,401.3 697.9,392.5 698.0,384.6 698.1,398.7 698.2,397.6 698.2,407.0 698.3,419.3 698.4,415.4 698.5,413.9 698.6,412.6 698.7,423.4 698.7,414.7 698.8,428.0 698.9,423.0 699.0,421.9 699.1,429.9 699.2,409.5 699.2,415.9 699.3,413.6 699.4,413.0 699.5,425.1 699.6,415.0 699.7,406.5 699.7,386.1 699.8,395.7 699.9,389.5 700.0,407.7 700.1,410.1 700.2,410.9 700.2,401.8 700.3,425.3 700.4,412.5 700.5,407.4 700.6,409.8 700.7,411.1 700.7,404.2 700.8,408.4 700.9,421.2 701.0,408.6 701.1,422.5 701.1,420.2 701.2,406.3 701.3,399.3 701.4,409.5 701.5,416.8 701.6,425.6 701.6,423.9 701.7,401.3 701.8,411.2 701.9,424.5 702.0,397.4 702.1,405.9 702.1,399.5 702.2,407.4 702.3,427.0 702.4,447.3 702.5,404.5 702.6,402.2 702.6,385.2 702.7,406.6 702.8,404.2 702.9,406.3 703.0,409.2 703.1,419.9 703.1,421.5 703.2,433.2 703.3,408.1 703.4,412.7 703.5,409.2 703.5,420.1 703.6,410.9 703.7,419.3 703.8,419.7 703.9,411.5 704.0,412.4 704.0,416.4 704.1,425.3 704.2,431.8 704.3,412.9 704.4,410.7 704.5,423.4 704.5,423.8 704.6,407.7 704.7,408.2 704.8,418.8 704.9,391.2 705.0,429.0 705.0,418.2 705.1,408.9 705.2,402.4 705.3,427.0 705.4,414.7 705.5,393.6 705.5,388.9 705.6,398.2 705.7,390.8 705.8,403.7 705.9,397.6 706.0,415.0 706.0,428.5 706.1,424.1 706.2,410.5 706.3,422.3 706.4,404.3 706.4,405.6 706.5,411.0 706.6,416.8 706.7,415.6 706.8,426.0 706.9,423.6 706.9,424.2 707.0,418.6 707.1,431.2 707.2,425.3 707.3,425.3 707.4,406.7 707.4,406.6 707.5,414.8 707.6,413.6 707.7,407.2 707.8,391.7 707.9,397.3 707.9,401.3 708.0,408.1 708.1,406.1 708.2,394.2 708.3,416.9 708.4,414.0 708.4,396.3 708.5,404.7 708.6,420.8 708.7,404.3 708.8,427.3 708.8,414.3 708.9,443.7 709.0,433.2 709.1,419.4 709.2,435.2 709.3,433.6 709.3,424.1 709.4,421.9 709.5,423.2 709.6,422.2 709.7,398.2 709.8,398.1 709.8,408.1 709.9,420.9 710.0,415.5 710.1,413.4 710.2,406.7 710.3,397.1 710.3,409.6 710.4,397.9 710.5,397.1 710.6,386.3 710.7,399.3 710.8,395.9 710.8,395.1 710.9,414.4 711.0,413.8 711.1,409.9 711.2,422.3 711.3,395.3 711.3,422.5 711.4,414.0 711.5,418.6 711.6,398.0 711.7,418.9 711.7,422.8 711.8,405.9 711.9,427.0 712.0,436.4 712.1,433.5 712.2,435.5 712.2,439.9 712.3,431.3 712.4,427.8 712.5,416.0 712.6,411.8 712.7,407.5 712.7,412.0 712.8,404.1 712.9,412.8 713.0,400.9 713.1,407.4 713.2,414.6 713.2,400.3 713.3,424.0 713.4,416.5 713.5,412.3 713.6,403.8 713.7,410.5 713.7,413.1 713.8,421.7 713.9,407.2 714.0,417.6 714.1,392.0 714.1,404.3 714.2,420.8 714.3,399.5 714.4,410.0 714.5,401.6 714.6,420.5 714.6,400.9 714.7,401.5 714.8,414.5 714.9,420.6 715.0,418.9 715.1,415.8 715.1,399.6 715.2,407.2 715.3,407.5 715.4,419.9 715.5,418.5 715.6,410.1 715.6,413.3 715.7,415.0 715.8,412.7 715.9,403.6 716.0,411.5 716.1,408.9 716.1,413.2 716.2,412.6 716.3,408.7 716.4,389.9 716.5,393.8 716.6,377.8 716.6,397.2 716.7,391.7 716.8,417.8 716.9,414.4 717.0,411.5 717.0,416.4 717.1,411.9 717.2,418.9 717.3,412.3 717.4,416.7 717.5,413.6 717.5,418.9 717.6,427.6 717.7,425.2 717.8,424.1 717.9,438.0 718.0,428.9 718.0,416.3 718.1,426.3 718.2,416.9 718.3,413.6 718.4,423.2 718.5,402.2 718.5,389.3 718.6,419.8 718.7,392.4 718.8,417.0 718.9,398.4 719.0,426.5 719.0,401.1 719.1,409.7 719.2,419.8 719.3,413.6 719.4,413.3 719.4,409.9 719.5,396.6 719.6,403.7 719.7,425.9 719.8,409.2 719.9,404.7 719.9,410.2 720.0,396.4 720.1,426.8 720.2,408.8 720.3,414.1 720.4,411.6 720.4,432.8 720.5,436.0 720.6,429.7 720.7,424.1 720.8,436.9 720.9,414.7 720.9,414.4 721.0,404.6 721.1,433.4 721.2,406.6 721.3,418.6 721.4,415.0 721.4,404.2 721.5,396.4 721.6,409.6 721.7,407.5 721.8,391.0 721.9,405.7 721.9,394.9 722.0,402.3 722.1,410.7 722.2,404.9 722.3,393.4 722.3,408.8 722.4,406.6 722.5,411.2 722.6,401.2 722.7,409.4 722.8,418.5 722.8,410.1 722.9,398.5 723.0,411.7 723.1,400.6 723.2,415.2 723.3,400.7 723.3,419.4 723.4,419.8 723.5,424.3 723.6,411.0 723.7,416.5 723.8,423.7 723.8,408.3 723.9,421.3 724.0,398.2 724.1,404.1 724.2,410.8 724.3,405.0 724.3,433.3 724.4,397.7 724.5,414.3 724.6,400.8 724.7,382.3 724.7,416.1 724.8,403.6 724.9,399.3 725.0,400.8 725.1,421.1 725.2,416.8 725.2,398.1 725.3,416.1 725.4,406.2 725.5,422.7 725.6,418.8 725.7,429.2 725.7,413.6 725.8,408.5 725.9,420.2 726.0,425.8 726.1,423.9 726.2,419.4 726.2,423.5 726.3,413.7 726.4,399.1 726.5,394.3 726.6,415.9 726.7,421.8 726.7,394.4 726.8,402.5 726.9,398.4 727.0,401.7 727.1,406.8 727.1,394.4 727.2,391.2 727.3,388.6 727.4,410.2 727.5,394.0 727.6,407.9 727.6,410.0 727.7,405.9 727.8,413.9 727.9,391.0 728.0,406.1 728.1,408.6 728.1,412.6 728.2,412.0 728.3,419.3 728.4,415.4 728.5,416.2 728.6,413.2 728.6,428.1 728.7,417.0 728.8,410.2 728.9,421.4 729.0,407.7 729.1,412.2 729.1,410.4 729.2,407.6 729.3,416.3 729.4,397.5 729.5,402.0 729.6,415.7 729.6,402.8 729.7,396.4 729.8,405.3 729.9,397.7 730.0,384.6 730.0,408.8 730.1,402.0 730.2,391.8 730.3,393.4 730.4,410.8 730.5,399.5 730.5,391.8 730.6,409.1 730.7,411.3 730.8,410.3 730.9,419.6 731.0,408.4 731.0,413.8 731.1,411.1 731.2,407.5 731.3,421.7 731.4,418.2 731.5,414.7 731.5,400.4 731.6,425.7 731.7,410.9 731.8,416.3 731.9,409.8 732.0,403.7 732.0,410.3 732.1,404.6 732.2,409.3 732.3,417.0 732.4,413.9 732.4,417.5 732.5,401.0 732.6,403.6 732.7,390.3 732.8,386.6 732.9,405.2 732.9,409.6 733.0,397.7 733.1,413.1 733.2,406.4 733.3,405.6 733.4,414.2 733.4,395.6 733.5,417.6 733.6,407.2 733.7,416.0 733.8,438.9 733.9,417.1 733.9,418.6 734.0,413.8 734.1,421.5 734.2,428.3 734.3,424.8 734.4,421.4 734.4,410.7 734.5,418.0 734.6,403.5 734.7,405.1 734.8,417.3 734.9,402.0 734.9,430.4 735.0,410.7 735.1,419.3 735.2,411.7 735.3,401.0 735.3,406.0 735.4,402.5 735.5,385.1 735.6,397.7 735.7,403.2 735.8,392.6 735.8,400.7 735.9,423.2 736.0,409.6 736.1,404.2 736.2,412.3 736.3,414.4 736.3,409.7 736.4,409.1 736.5,420.1 736.6,410.0 736.7,433.9 736.8,424.1 736.8,402.0 736.9,426.3 737.0,414.4 737.1,430.5 737.2,418.0 737.3,420.8 737.3,410.4 737.4,415.1 737.5,392.3 737.6,413.3 737.7,402.8 737.7,397.9 737.8,391.4 737.9,392.1 738.0,416.0 738.1,386.5 738.2,410.8 738.2,417.1 738.3,425.1 738.4,414.7 738.5,426.2 738.6,409.3 738.7,416.1 738.7,408.1 738.8,417.7 738.9,410.3 739.0,391.8 739.1,403.5 739.2,414.8 739.2,427.3 739.3,408.9 739.4,438.7 739.5,433.6 739.6,407.7 739.7,421.3 739.7,402.0 739.8,406.0 739.9,392.2 740.0,395.6 740.1,402.8 740.2,410.1 740.2,396.5 740.3,386.4 740.4,394.2 740.5,417.1 740.6,398.6 740.6,401.6 740.7,402.1 740.8,407.7 740.9,398.0 741.0,421.8 741.1,407.2 741.1,430.8 741.2,435.3 741.3,428.1 741.4,428.7 741.5,432.8 741.6,433.9 741.6,419.8 741.7,417.3 741.8,418.7 741.9,414.9 742.0,419.7 742.1,419.4 742.1,423.2 742.2,414.5 742.3,417.2 742.4,406.8 742.5,394.4 742.6,392.4 742.6,382.3 742.7,405.1 742.8,419.5 742.9,413.6 743.0,390.4 743.0,405.0 743.1,414.7 743.2,399.6 743.3,414.5 743.4,363.3 743.5,419.0 743.5,421.4 743.6,414.2 743.7,432.3 743.8,426.2 743.9,405.8 744.0,416.4 744.0,427.4 744.1,417.7 744.2,413.5 744.3,417.5 744.4,407.5 744.5,400.3 744.5,410.6 744.6,403.4 744.7,408.5 744.8,407.1 744.9,412.0 745.0,394.6 745.0,388.6 745.1,401.3 745.2,402.3 745.3,387.6 745.4,393.9 745.5,387.8 745.5,396.0 745.6,404.0 745.7,417.5 745.8,403.0 745.9,410.1 745.9,421.9 746.0,423.8 746.1,426.7 746.2,405.7 746.3,419.2 746.4,448.4 746.4,431.9 746.5,434.2 746.6,434.1 746.7,437.3 746.8,436.1 746.9,422.4 746.9,415.5 747.0,421.8 747.1,401.9 747.2,412.1 747.3,418.4 747.4,409.7 747.4,420.5 747.5,407.9 747.6,411.6 747.7,403.4 747.8,395.1 747.9,415.0 747.9,387.8 748.0,391.7 748.1,398.7 748.2,393.5 748.3,399.6 748.3,408.5 748.4,416.8 748.5,404.7 748.6,404.5 748.7,423.7 748.8,417.3 748.8,424.1 748.9,409.8 749.0,424.8 749.1,433.5 749.2,412.7 749.3,418.8 749.3,417.8 749.4,414.8 749.5,415.5 749.6,410.7 749.7,403.3 749.8,407.2 749.8,415.0 749.9,410.2 750.0,395.0 750.1,415.8 750.2,419.6 750.3,404.6 750.3,412.6 750.4,377.5 750.5,392.0 750.6,395.1 750.7,399.7 750.8,388.6 750.8,417.1 750.9,411.5 751.0,425.4 751.1,400.4 751.2,411.7 751.2,395.8 751.3,413.4 751.4,420.0 751.5,417.1 751.6,404.1 751.7,418.1 751.7,412.7 751.8,425.1 751.9,428.9 752.0,431.5 752.1,408.8 752.2,428.1 752.2,412.2 752.3,404.1 752.4,417.5 752.5,424.0 752.6,398.1 752.7,393.1 752.7,407.2 752.8,412.3 752.9,391.5 753.0,396.3 753.1,406.1 753.2,405.3 753.2,425.6 753.3,415.1 753.4,421.6 753.5,422.5 753.6,406.1 753.6,408.8 753.7,396.5 753.8,434.2 753.9,416.8 754.0,421.0 754.1,404.9 754.1,410.1 754.2,420.6 754.3,423.5 754.4,433.4 754.5,428.7 754.6,425.5 754.6,440.8 754.7,400.0 754.8,407.4 754.9,393.1 755.0,400.5 755.1,406.8 755.1,402.3 755.2,422.5 755.3,449.7 755.4,397.4 755.5,406.5 755.6,415.5 755.6,400.1 755.7,412.7 755.8,403.2 755.9,391.2 756.0,416.2 756.0,411.9 756.1,404.8 756.2,411.4 756.3,409.5 756.4,421.6 756.5,420.3 756.5,441.1 756.6,425.1 756.7,415.6 756.8,433.3 756.9,422.1 757.0,411.2 757.0,403.7 757.1,401.1 757.2,418.8 757.3,414.8 757.4,395.9 757.5,415.2 757.5,408.7 757.6,418.5 757.7,416.9 757.8,436.9 757.9,415.9 758.0,426.9 758.0,413.3 758.1,409.7 758.2,386.1 758.3,387.8 758.4,394.3 758.5,405.6 758.5,416.6 758.6,403.7 758.7,369.5 758.8,412.2 758.9,403.0 758.9,412.8 759.0,411.4 759.1,419.8 759.2,405.1 759.3,412.5 759.4,414.0 759.4,409.0 759.5,440.2 759.6,428.8 759.7,420.5 759.8,420.2 759.9,417.5 759.9,413.1 760.0,427.5 760.1,411.9 760.2,401.1 760.3,411.7 760.4,412.9 760.4,403.9 760.5,426.4 760.6,407.8 760.7,395.8 760.8,409.0 760.9,411.7 760.9,397.7 761.0,404.0 761.1,404.9 761.2,394.2 761.3,412.3 761.3,394.2 761.4,412.7 761.5,409.3 761.6,400.5 761.7,409.3 761.8,409.0 761.8,399.3 761.9,400.9 762.0,398.9 762.1,424.7 762.2,414.9 762.3,440.1 762.3,415.9 762.4,408.6 762.5,423.3 762.6,410.1 762.7,403.9 762.8,412.6 762.8,416.8 762.9,398.1 763.0,422.7 763.1,409.8 763.2,402.9 763.3,409.2 763.3,397.5 763.4,394.3 763.5,399.1 763.6,383.8 763.7,388.7 763.8,409.9 763.8,406.0 763.9,404.9 764.0,409.5 764.1,425.9 764.2,391.2 764.2,424.8 764.3,423.9 764.4,413.1 764.5,418.1 764.6,409.4 764.7,423.7 764.7,425.2 764.8,419.3 764.9,429.1 765.0,431.1 765.1,421.0 765.2,405.2 765.2,413.7 765.3,400.3 765.4,416.0 765.5,404.6 765.6,410.9 765.7,403.9 765.7,411.1 765.8,409.5 765.9,410.9 766.0,391.6 766.1,398.4 766.2,389.4 766.2,383.7 766.3,401.5 766.4,405.3 766.5,402.8 766.6,395.7 766.6,420.3 766.7,420.0 766.8,419.8 766.9,416.5 767.0,424.2 767.1,423.9 767.1,414.1 767.2,430.0 767.3,422.5 767.4,430.8 767.5,420.4 767.6,412.3 767.6,432.3 767.7,412.6 767.8,409.2 767.9,411.7 768.0,408.9 768.1,407.6 768.1,422.4 768.2,412.2 768.3,405.6 768.4,396.0 768.5,415.1 768.6,404.6 768.6,407.4 768.7,391.8 768.8,404.8 768.9,407.9 769.0,396.6 769.1,387.8 769.1,429.0 769.2,396.9 769.3,419.1 769.4,405.2 769.5,408.1 769.5,400.4 769.6,412.9 769.7,418.3 769.8,413.9 769.9,408.8 770.0,425.6 770.0,416.6 770.1,422.4 770.2,423.0 770.3,426.7 770.4,419.4 770.5,415.4 770.5,422.6 770.6,420.9 770.7,434.2 770.8,421.0 770.9,424.3 771.0,405.3 771.0,417.4 771.1,411.0 771.2,397.3 771.3,390.1 771.4,391.3 771.5,412.3 771.5,406.0 771.6,401.9 771.7,418.5 771.8,413.1 771.9,421.7 771.9,416.7 772.0,405.0 772.1,410.3 772.2,414.3 772.3,416.0 772.4,398.0 772.4,408.0 772.5,428.6 772.6,402.5 772.7,428.2 772.8,429.3 772.9,428.9 772.9,426.2 773.0,412.4 773.1,427.0 773.2,410.8 773.3,413.9 773.4,396.0 773.4,407.7 773.5,404.4 773.6,400.6 773.7,397.1 773.8,398.2 773.9,417.5 773.9,395.6 774.0,405.0 774.1,399.1 774.2,405.5 774.3,415.8 774.4,418.8 774.4,419.9 774.5,408.6 774.6,412.0 774.7,418.8 774.8,414.3 774.8,408.1 774.9,416.8 775.0,415.0 775.1,421.9 775.2,441.8 775.3,421.4 775.3,424.4 775.4,415.1 775.5,408.1 775.6,422.9 775.7,408.7 775.8,408.8 775.8,410.4 775.9,403.9 776.0,403.5 776.1,419.7 776.2,393.7 776.3,405.6 776.3,407.5 776.4,405.4 776.5,399.1 776.6,404.5 776.7,387.7 776.8,395.8 776.8,409.6 776.9,397.0 777.0,404.4 777.1,408.1 777.2,402.8 777.2,411.9 777.3,415.6 777.4,411.2 777.5,433.6 777.6,430.4 777.7,417.9 777.7,410.8 777.8,432.3 777.9,415.4 778.0,419.0 778.1,413.5 778.2,357.5 778.2,398.2 778.3,392.8 778.4,396.7 778.5,396.3 778.6,397.5 778.7,411.7 778.7,395.3 778.8,412.1 778.9,414.5 779.0,407.0 779.1,424.7 779.2,395.8 779.2,405.9 779.3,407.9 779.4,406.9 779.5,412.9 779.6,418.4 779.7,416.8 779.7,432.6 779.8,428.4 779.9,448.7 780.0,431.9 780.1,444.1 780.1,428.6 780.2,427.9 780.3,417.4 780.4,414.3 780.5,413.4 780.6,407.1 780.6,407.3 780.7,399.3 780.8,406.0 780.9,401.6 781.0,411.7 781.1,403.0 781.1,392.2 781.2,387.3 781.3,402.3 781.4,396.7 781.5,401.1 781.6,400.8 781.6,407.8 781.7,409.8 781.8,409.1 781.9,410.0 782.0,402.3 782.1,421.8 782.1,426.2 782.2,414.5 782.3,420.4 782.4,429.7 782.5,434.6 782.5,412.2 782.6,427.1 782.7,404.7 782.8,408.9 782.9,412.3 783.0,412.5 783.0,401.8 783.1,406.5 783.2,419.3 783.3,371.2 783.4,418.3 783.5,394.1 783.5,387.4 783.6,388.7 783.7,411.4 783.8,383.8 783.9,388.7 784.0,407.5 784.0,425.9 784.1,418.6 784.2,402.1 784.3,393.3 784.4,415.7 784.5,426.9 784.5,419.4 784.6,394.6 784.7,413.7 784.8,428.3 784.9,436.8 785.0,415.9 785.0,417.0 785.1,430.6 785.2,425.6 785.3,420.7 785.4,421.7 785.4,420.9 785.5,418.6 785.6,416.2 785.7,400.5 785.8,407.6 785.9,399.1 785.9,389.0 786.0,421.2 786.1,399.0 786.2,387.1 786.3,400.3 786.4,406.7 786.4,401.4 786.5,412.5 786.6,418.3 786.7,413.7 786.8,410.6 786.9,414.4 786.9,410.2 787.0,421.1 787.1,428.8 787.2,402.0 787.3,433.5 787.4,437.3 787.4,432.8 787.5,434.1 787.6,438.3 787.7,419.6 787.8,405.4 787.8,430.1 787.9,417.6 788.0,405.1 788.1,412.2 788.2,399.4 788.3,402.0 788.3,408.7 788.4,403.4 788.5,408.4 788.6,401.7 788.7,430.5 788.8,407.5 788.8,399.6 788.9,409.8 789.0,409.0 789.1,415.7 789.2,408.2 789.3,412.4 789.3,422.1 789.4,421.3 789.5,431.0 789.6,414.0 789.7,422.8 789.8,421.5 789.8,435.3 789.9,438.1 790.0,449.0 790.1,446.9 790.2,429.2 790.2,420.5 790.3,408.0 790.4,412.2 790.5,412.5 790.6,410.7 790.7,408.9 790.7,409.4 790.8,408.4 790.9,411.3 791.0,403.7 791.1,411.4 791.2,404.3 791.2,393.0 791.3,391.0 791.4,405.3 791.5,415.0 791.6,398.8 791.7,418.3 791.7,425.9 791.8,419.4 791.9,421.3 792.0,431.9 792.1,414.4 792.2,401.2 792.2,426.6 792.3,431.8 792.4,419.5 792.5,433.1 792.6,439.3 792.7,422.2 792.7,439.5 792.8,425.3 792.9,415.9 793.0,413.9 793.1,421.2 793.1,419.1 793.2,395.8 793.3,411.9 793.4,413.4 793.5,401.8 793.6,426.5 793.6,411.6 793.7,421.4 793.8,389.6 793.9,405.3 794.0,391.1 794.1,404.7 794.1,400.5 794.2,403.6 794.3,411.0 794.4,413.8 794.5,408.9 794.6,413.1 794.6,415.4 794.7,405.7 794.8,403.8 794.9,422.7 795.0,423.4 795.1,425.1 795.1,419.6 795.2,437.8 795.3,416.1 795.4,425.4 795.5,420.7 795.5,410.9 795.6,421.1 795.7,407.9 795.8,407.6 795.9,400.0 796.0,420.1 796.0,399.2 796.1,405.9 796.2,408.9 796.3,401.9 796.4,410.7 796.5,407.8 796.5,396.6 796.6,404.3 796.7,389.6 796.8,389.5 796.9,401.8 797.0,404.6 797.0,414.1 797.1,418.9 797.2,400.8 797.3,424.0 797.4,416.5 797.5,416.8 797.5,429.1 797.6,429.3 797.7,431.6 797.8,405.3 797.9,418.2 798.0,407.4 798.0,399.8 798.1,406.5 798.2,401.8 798.3,414.8 798.4,416.9 798.4,398.6 798.5,396.0 798.6,414.7 798.7,393.7 798.8,398.5 798.9,391.7 798.9,387.8 799.0,382.3 799.1,406.4 799.2,403.5 799.3,395.2 799.4,410.7 799.4,406.3 799.5,411.6 799.6,425.5 799.7,415.6 799.8,406.2 799.9,421.3 799.9,432.6 800.0,426.6 800.1,424.3 800.2,418.2 800.3,416.6 800.4,412.1 800.4,422.8 800.5,416.0 800.6,417.4 800.7,414.6 800.8,407.1 800.8,399.5 800.9,412.9 801.0,397.2 801.1,392.1 801.2,406.8 801.3,399.4 801.3,386.5 801.4,395.0 801.5,371.8 801.6,408.4 801.7,407.5 801.8,394.9 801.8,412.6 801.9,404.7 802.0,419.2 802.1,401.8 802.2,415.8 802.3,404.6 802.3,402.2 802.4,427.4 802.5,425.9 802.6,437.0 802.7,435.2 802.8,421.6 802.8,426.0 802.9,414.8 803.0,406.1 803.1,405.7 803.2,404.6 803.3,414.5 803.3,414.1 803.4,408.0 803.5,403.3 803.6,401.5 803.7,408.2 803.7,413.3 803.8,409.2 803.9,392.1 804.0,401.7 804.1,384.8 804.2,405.8 804.2,394.4 804.3,402.2 804.4,399.8 804.5,414.9 804.6,407.8 804.7,411.3 804.7,417.8 804.8,430.4 804.9,437.0 805.0,432.4 805.1,429.6 805.2,427.3 805.2,422.8 805.3,417.4 805.4,427.0 805.5,401.6 805.6,407.6 805.7,412.1 805.7,407.8 805.8,392.2 805.9,396.5 806.0,409.8 806.1,375.2 806.1,408.3 806.2,383.5 806.3,393.4 806.4,411.7 806.5,395.0 806.6,397.4 806.6,401.8 806.7,405.1 806.8,407.9 806.9,408.8 807.0,415.2 807.1,408.3 807.1,403.5 807.2,419.1 807.3,405.2 807.4,439.0 807.5,421.7 807.6,430.9 807.6,429.4 807.7,408.5 807.8,413.4 807.9,415.4 808.0,419.7 808.1,412.7 808.1,424.5 808.2,412.3 808.3,412.8 808.4,416.6 808.5,400.1 808.6,417.2 808.6,395.3 808.7,399.0 808.8,399.1 808.9,404.8 809.0,401.5 809.0,412.9 809.1,419.9 809.2,407.4 809.3,417.4 809.4,413.7 809.5,409.6 809.5,418.6 809.6,402.3 809.7,425.8 809.8,404.3 809.9,417.1 810.0,404.4 810.0,411.4 810.1,417.2 810.2,418.4 810.3,417.8 810.4,428.5 810.5,419.5 810.5,420.7 810.6,372.2 810.7,411.7 810.8,417.4 810.9,406.4 811.0,406.8 811.0,405.5 811.1,395.2 811.2,391.5 811.3,410.0 811.4,404.2 811.4,379.7 811.5,407.5 811.6,406.7 811.7,418.2 811.8,402.3 811.9,397.5 811.9,405.7 812.0,411.8 812.1,410.4 812.2,426.8 812.3,405.6 812.4,415.9 812.4,412.5 812.5,415.3 812.6,419.3 812.7,405.8 812.8,413.3 812.9,424.1 812.9,410.7 813.0,407.9 813.1,410.3 813.2,398.6 813.3,413.8 813.4,425.6 813.4,419.7 813.5,407.4 813.6,419.1 813.7,409.3 813.8,418.8 813.9,398.0 813.9,398.8 814.0,399.6 814.1,401.3 814.2,403.6 814.3,398.2 814.3,408.6 814.4,412.4 814.5,409.3 814.6,403.1 814.7,406.7 814.8,395.7 814.8,416.8 814.9,407.6 815.0,417.6 815.1,428.0 815.2,421.5 815.3,423.5 815.3,426.2 815.4,434.5 815.5,442.1 815.6,429.1 815.7,423.3 815.8,408.4 815.8,417.6 815.9,413.3 816.0,397.4 816.1,410.1 816.2,414.5 816.3,408.2 816.3,404.1 816.4,409.3 816.5,420.3 816.6,404.8 816.7,388.2 816.7,398.4 816.8,389.4 816.9,399.9 817.0,412.8 817.1,403.9 817.2,428.9 817.2,428.5 817.3,423.8 817.4,406.1 817.5,413.0 817.6,407.5 817.7,415.7 817.7,416.1 817.8,423.9 817.9,425.0 818.0,415.4 818.1,419.4 818.2,435.1 818.2,416.7 818.3,402.2 818.4,410.8 818.5,423.0 818.6,406.5 818.7,408.8 818.7,413.4 818.8,402.4 818.9,400.2 819.0,415.1 819.1,406.4 819.1,407.6 819.2,401.0 819.3,384.4 819.4,398.4 819.5,386.7 819.6,392.5 819.6,397.2 819.7,410.6 819.8,399.0 819.9,416.8 820.0,404.5 820.1,411.4 820.1,409.5 820.2,414.5 820.3,417.9 820.4,419.3 820.5,410.6 820.6,411.3 820.6,408.2 820.7,413.1 820.8,408.3 820.9,417.8 821.0,422.1 821.1,429.4 821.1,423.3 821.2,413.5 821.3,420.8 821.4,420.8 821.5,407.4 821.6,407.1 821.6,410.4 821.7,408.6 821.8,418.6 821.9,412.7 822.0,401.4 822.0,398.6 822.1,405.7 822.2,394.4 822.3,417.5 822.4,394.0 822.5,416.4 822.5,415.4 822.6,419.5 822.7,422.0 822.8,416.8 822.9,433.6 823.0,423.9 823.0,423.1 823.1,430.5 823.2,424.7 823.3,433.3 823.4,433.2 823.5,425.3 823.5,401.7 823.6,408.0 823.7,425.8 823.8,396.3 823.9,405.4 824.0,401.5 824.0,402.2 824.1,399.7 824.2,422.7 824.3,405.5 824.4,410.4 824.4,385.3 824.5,393.6 824.6,397.2 824.7,397.0 824.8,414.9 824.9,398.5 824.9,408.7 825.0,392.4 825.1,399.9 825.2,409.1 825.3,414.0 825.4,401.4 825.4,415.2 825.5,408.5 825.6,423.0 825.7,434.2 825.8,435.7 825.9,417.1 825.9,438.3 826.0,411.4 826.1,404.5 826.2,412.9 826.3,398.3 826.4,405.0 826.4,406.1 826.5,419.2 826.6,403.4 826.7,416.8 826.8,399.2 826.9,383.0 826.9,406.3 827.0,388.0 827.1,412.7 827.2,405.3 827.3,402.2 827.3,422.9 827.4,407.9 827.5,417.2 827.6,415.9 827.7,403.6 827.8,415.8 827.8,416.2 827.9,423.8 828.0,425.2 828.1,419.7 828.2,427.4 828.3,426.4 828.3,419.3 828.4,409.1 828.5,406.8 828.6,428.8 828.7,411.3 828.8,407.0 828.8,388.6 828.9,415.7 829.0,413.0 829.1,420.5 829.2,411.3 829.3,425.6 829.3,414.3 829.4,404.4 829.5,412.9 829.6,398.9 829.7,405.9 829.7,393.0 829.8,393.7 829.9,392.8 830.0,409.5 830.1,405.0 830.2,390.7 830.2,416.2 830.3,396.3 830.4,418.4 830.5,401.8 830.6,423.9 830.7,418.5 830.7,421.3 830.8,426.2 830.9,445.0 831.0,423.0 831.1,422.1 831.2,402.6 831.2,405.8 831.3,429.1 831.4,409.6 831.5,401.7 831.6,411.5 831.7,416.7 831.7,422.3 831.8,413.8 831.9,414.9 832.0,405.5 832.1,402.1 832.2,384.7 832.2,400.1 832.3,392.7 832.4,408.7 832.5,400.8 832.6,398.2 832.6,415.6 832.7,420.8 832.8,413.1 832.9,415.9 833.0,424.1 833.1,417.8 833.1,423.4 833.2,421.0 833.3,435.7 833.4,415.0 833.5,408.0 833.6,423.0 833.6,396.6 833.7,408.8 833.8,421.8 833.9,419.8 834.0,417.1 834.1,416.2 834.1,412.8 834.2,408.2 834.3,412.5 834.4,408.9 834.5,409.9 834.6,414.6 834.6,398.7 834.7,407.6 834.8,394.2 834.9,426.8 835.0,401.0 835.0,435.0 835.1,412.4 835.2,410.6 835.3,420.2 835.4,419.0 835.5,403.3 835.5,423.1 835.6,417.9 835.7,420.0 835.8,418.0 835.9,437.5 836.0,412.4 836.0,421.7 836.1,408.5 836.2,426.0 836.3,401.5 836.4,411.5 836.5,404.1 836.5,416.2 836.6,403.4 836.7,410.5 836.8,426.9 836.9,389.5 837.0,416.4 837.0,404.7 837.1,408.3 837.2,408.5 837.3,405.7 837.4,392.7 837.5,390.5 837.5,392.6 837.6,416.5 837.7,397.7 837.8,419.5 837.9,453.8 837.9,407.5 838.0,401.1 838.1,410.8 838.2,409.6 838.3,416.8 838.4,393.7 838.4,413.6 838.5,403.9 838.6,422.6 838.7,419.4 838.8,423.9 838.9,423.9 838.9,429.8 839.0,422.5 839.1,419.8 839.2,436.7 839.3,424.3 839.4,429.3 839.4,406.5 839.5,423.9 839.6,406.7 839.7,409.5 839.8,411.2 839.9,427.4 839.9,396.2 840.0,412.0 840.1,401.7 840.2,395.2 840.3,409.5 840.3,406.1 840.4,379.7 840.5,374.5 840.6,401.4 840.7,398.4 840.8,392.8 840.8,405.5 840.9,396.2 841.0,405.6 841.1,411.4 841.2,405.0 841.3,414.8 841.3,403.9 841.4,424.4 841.5,411.5 841.6,405.3 841.7,445.7 841.8,412.2 841.8,435.4 841.9,419.3 842.0,399.0 842.1,401.4 842.2,405.0 842.3,407.5 842.3,455.8 842.4,406.8 842.5,412.4 842.6,410.6 842.7,416.2 842.8,388.2 842.8,400.7 842.9,381.7 843.0,394.2 843.1,399.2 843.2,415.0 843.2,410.4 843.3,410.3 843.4,411.7 843.5,413.3 843.6,430.3 843.7,414.2 843.7,412.9 843.8,414.8 843.9,418.0 844.0,433.2 844.1,431.7 844.2,416.3 844.2,432.5 844.3,424.3 844.4,422.4 844.5,412.1 844.6,415.2 844.7,393.5 844.7,419.6 844.8,399.1 844.9,414.7 845.0,406.9 845.1,389.0 845.2,408.0 845.2,405.2 845.3,426.9 845.4,402.4 845.5,398.6 845.6,398.4 845.6,400.3 845.7,414.5 845.8,415.9 845.9,404.1 846.0,413.0 846.1,410.4 846.1,405.0 846.2,409.8 846.3,409.4 846.4,376.3 846.5,410.6 846.6,425.2 846.6,400.2 846.7,426.8 846.8,410.5 846.9,433.9 847.0,426.0 847.1,408.9 847.1,413.6 847.2,409.1 847.3,413.0 847.4,412.8 847.5,417.0 847.6,417.2 847.6,423.8 847.7,407.6 847.8,410.8 847.9,389.9 848.0,381.5 848.0,381.2 848.1,410.0 848.2,405.0 848.3,405.2 848.4,419.4 848.5,395.0 848.5,404.5 848.6,408.1 848.7,394.0 848.8,406.4 848.9,413.2 849.0,412.4 849.0,423.0 849.1,419.1 849.2,438.7 849.3,418.8 849.4,421.5 849.5,418.4 849.5,413.8 849.6,411.6 849.7,425.5 849.8,405.4 849.9,412.2 850.0,395.1 850.0,410.7 850.1,402.4 850.2,408.6 850.3,407.3 850.4,414.4 850.5,405.7 850.5,404.5 850.6,422.5 850.7,406.5 850.8,412.3 850.9,405.7 850.9,401.7 851.0,413.1 851.1,400.3 851.2,399.9 851.3,404.0 851.4,415.0 851.4,412.9 851.5,401.3 851.6,403.8 851.7,408.9 851.8,435.2 851.9,441.5 851.9,405.0 852.0,412.5 852.1,405.5 852.2,410.4 852.3,416.4 852.4,408.2 852.4,410.9 852.5,397.6 852.6,403.3 852.7,418.7 852.8,412.8 852.9,393.2 852.9,390.1 853.0,390.9 853.1,386.2 853.2,404.1 853.3,405.0 853.3,397.4 853.4,422.0 853.5,406.3 853.6,405.5 853.7,404.8 853.8,403.2 853.8,394.0 853.9,407.9 854.0,417.5 854.1,429.6 854.2,438.7 854.3,422.9 854.3,420.5 854.4,446.9 854.5,426.6 854.6,429.9 854.7,421.5 854.8,413.0 854.8,410.1 854.9,420.7 855.0,403.9 855.1,407.5 855.2,418.5 855.3,391.6 855.3,380.6 855.4,393.5 855.5,380.4 855.6,411.9 855.7,404.5 855.8,395.2 855.8,399.1 855.9,406.0 856.0,401.3 856.1,414.0 856.2,404.2 856.2,406.7 856.3,411.3 856.4,420.7 856.5,421.3 856.6,429.3 856.7,423.3 856.7,437.4 856.8,414.3 856.9,423.1 857.0,413.7 857.1,410.0 857.2,405.7 857.2,416.6 857.3,407.2 857.4,397.9 857.5,401.0 857.6,394.6 857.7,390.2 857.7,393.0 857.8,402.1 857.9,398.5 858.0,397.7 858.1,416.2 858.2,401.1 858.2,419.1 858.3,407.3 858.4,405.2 858.5,404.9 858.6,420.6 858.6,418.4 858.7,425.5 858.8,415.2 858.9,423.8 859.0,445.4 859.1,418.7 859.1,410.0 859.2,419.8 859.3,411.2 859.4,408.4 859.5,419.2 859.6,414.2 859.6,405.7 859.7,413.5 859.8,410.6 859.9,409.5 860.0,393.7 860.1,374.6 860.1,401.7 860.2,406.8 860.3,390.1 860.4,398.2 860.5,401.0 860.6,391.4 860.6,393.1 860.7,414.6 860.8,411.2 860.9,399.5 861.0,414.6 861.1,397.0 861.1,411.9 861.2,393.7 861.3,418.9 861.4,427.3 861.5,423.0 861.5,393.5 861.6,416.7 861.7,418.2 861.8,423.3 861.9,428.7 862.0,424.9 862.0,421.2 862.1,423.8 862.2,419.0 862.3,399.0 862.4,402.3 862.5,402.0 862.5,399.8 862.6,412.2 862.7,399.3 862.8,389.0 862.9,406.6 863.0,384.2 863.0,413.4 863.1,412.3 863.2,412.2 863.3,411.8 863.4,415.2 863.5,414.7 863.5,403.5 863.6,416.8 863.7,413.7 863.8,421.7 863.9,424.3 863.9,412.1 864.0,419.7 864.1,408.3 864.2,417.6 864.3,436.9 864.4,417.8 864.4,437.0 864.5,427.5 864.6,430.3 864.7,425.8 864.8,421.2 864.9,423.5 864.9,416.9 865.0,413.0 865.1,404.4 865.2,404.5 865.3,395.3 865.4,424.6 865.4,414.0 865.5,397.5 865.6,414.9 865.7,403.9 865.8,393.4 865.9,383.7 865.9,394.7 866.0,399.6 866.1,406.5 866.2,402.6 866.3,409.8 866.4,410.9 866.4,422.5 866.5,421.2 866.6,430.9 866.7,435.8 866.8,436.9 866.8,440.0 866.9,435.4 867.0,431.4 867.1,436.4 867.2,417.5 867.3,414.3 867.3,400.6 867.4,431.0 867.5,422.9 867.6,419.1 867.7,415.6 867.8,404.9 867.8,410.1 867.9,406.7 868.0,391.2 868.1,396.4 868.2,411.3 868.3,392.0 868.3,383.5 868.4,395.7 868.5,409.5 868.6,399.1 868.7,411.3 868.8,413.7 868.8,408.6 868.9,399.6 869.0,409.8 869.1,413.3 869.2,424.5 869.2,413.0 869.3,425.8 869.4,419.3 869.5,432.3 869.6,429.8 869.7,432.6 869.7,428.0 869.8,430.2 869.9,407.9 870.0,409.9 870.1,417.5 870.2,421.6 870.2,401.4 870.3,412.8 870.4,403.5 870.5,397.5 870.6,407.3 870.7,397.7 870.7,395.3 870.8,400.5 870.9,400.6 871.0,406.8 871.1,432.9 871.2,409.5 871.2,394.3 871.3,402.0 871.4,387.4 871.5,410.1 871.6,403.2 871.7,416.1 871.7,423.1 871.8,430.1 871.9,424.6 872.0,427.8 872.1,444.9 872.1,416.6 872.2,408.9 872.3,404.0 872.4,421.7 872.5,409.1 872.6,408.0 872.6,422.2 872.7,420.5 872.8,391.9 872.9,416.5 873.0,408.0 873.1,413.5 873.1,395.2 873.2,371.3 873.3,386.5 873.4,404.1 873.5,403.5 873.6,407.6 873.6,405.8 873.7,419.3 873.8,407.6 873.9,420.5 874.0,423.0 874.1,430.0 874.1,433.6 874.2,426.5 874.3,441.8 874.4,421.1 874.5,395.5 874.5,422.4 874.6,413.2 874.7,411.4 874.8,397.5 874.9,423.0 875.0,406.0 875.0,411.6 875.1,390.9 875.2,406.3 875.3,384.4 875.4,406.5 875.5,392.1 875.5,407.7 875.6,406.5 875.7,415.2 875.8,411.1 875.9,397.6 876.0,415.4 876.0,389.7 876.1,397.0 876.2,408.2 876.3,410.7 876.4,410.3 876.5,421.6 876.5,412.4 876.6,418.8 876.7,438.5 876.8,423.7 876.9,421.3 877.0,423.5 877.0,419.2 877.1,419.6 877.2,421.6 877.3,406.3 877.4,401.1 877.4,413.4 877.5,400.9 877.6,413.9 877.7,391.0 877.8,405.6 877.9,395.1 877.9,384.3 878.0,399.8 878.1,398.2 878.2,393.0 878.3,409.4 878.4,404.9 878.4,401.5 878.5,408.7 878.6,417.4 878.7,414.2 878.8,413.0 878.9,410.7 878.9,405.5 879.0,424.1 879.1,411.4 879.2,411.6 879.3,402.9 879.4,430.5 879.4,428.0 879.5,415.4 879.6,420.9 879.7,408.8 879.8,416.0 879.8,418.8 879.9,411.3 880.0,400.4 880.1,404.7 880.2,409.2 880.3,407.9 880.3,398.3 880.4,400.4 880.5,401.8 880.6,396.0 880.7,399.6 880.8,408.1 880.8,392.8 880.9,392.0 881.0,392.1 881.1,406.2 881.2,417.5 881.3,405.7 881.3,415.8 881.4,426.6 881.5,409.6 881.6,417.3 881.7,410.2 881.8,414.9 881.8,403.9 881.9,406.0 882.0,411.2 882.1,407.9 882.2,424.6 882.2,402.5 882.3,434.6 882.4,411.5 882.5,406.8 882.6,416.5 882.7,409.8 882.7,420.9 882.8,414.6 882.9,408.4 883.0,421.5 883.1,427.2 883.2,411.3 883.2,412.7 883.3,411.2 883.4,401.9 883.5,409.5 883.6,386.2 883.7,388.3 883.7,400.2 883.8,408.1 883.9,406.2 884.0,409.1 884.1,417.5 884.2,416.3 884.2,407.3 884.3,418.4 884.4,416.2 884.5,414.6 884.6,421.8 884.7,413.8 884.7,429.1 884.8,413.2 884.9,417.5 885.0,421.2 885.1,411.3 885.1,406.7 885.2,416.7 885.3,411.3 885.4,416.0 885.5,414.0 885.6,414.1 885.6,406.7 885.7,399.7 885.8,382.1 885.9,394.2 886.0,385.6 886.1,392.0 886.1,379.7 886.2,396.0 886.3,401.9 886.4,406.3 886.5,407.2 886.6,414.2 886.6,409.4 886.7,403.1 886.8,424.2 886.9,438.0 887.0,450.5 887.1,432.6 887.1,433.2 887.2,424.3 887.3,409.7 887.4,408.0 887.5,407.0 887.5,401.3 887.6,418.8 887.7,416.4 887.8,418.2 887.9,419.3 888.0,416.4 888.0,418.0 888.1,401.6 888.2,412.6 888.3,381.9 888.4,413.7 888.5,393.3 888.5,416.8 888.6,411.4 888.7,421.1 888.8,410.9 888.9,407.0 889.0,414.4 889.0,416.5 889.1,422.7 889.2,424.9 889.3,428.4 889.4,430.4 889.5,427.7 889.5,424.4 889.6,434.0 889.7,441.6 889.8,424.4 889.9,411.1 890.0,423.0 890.0,408.1 890.1,420.7 890.2,421.6 890.3,409.3 890.4,422.6 890.4,406.8 890.5,422.0 890.6,404.4 890.7,388.7 890.8,392.2 890.9,397.8 890.9,391.3 891.0,407.2 891.1,413.0 891.2,410.8 891.3,411.8 891.4,410.1 891.4,412.7 891.5,403.4 891.6,410.4 891.7,418.2 891.8,399.9 891.9,433.9 891.9,420.9 892.0,431.3 892.1,405.1 892.2,418.6 892.3,412.2 892.4,413.8 892.4,403.0 892.5,417.7 892.6,403.7 892.7,423.2 892.8,402.0 892.8,395.0 892.9,394.9 893.0,394.9 893.1,413.0 893.2,394.5 893.3,400.3 893.3,387.2 893.4,397.7 893.5,399.0 893.6,395.9 893.7,404.6 893.8,422.6 893.8,418.0 893.9,428.6 894.0,401.3 894.1,412.9 894.2,421.9 894.3,407.2 894.3,418.5 894.4,421.1 894.5,411.4 894.6,442.9 894.7,441.6 894.8,426.7 894.8,424.3 894.9,409.2 895.0,417.9 895.1,407.0 895.2,397.0 895.3,422.7 895.3,423.1 895.4,417.2 895.5,413.1 895.6,420.4 895.7,407.3 895.7,413.9 895.8,396.2 895.9,399.4 896.0,396.1 896.1,397.9 896.2,400.0 896.2,417.1 896.3,407.4 896.4,422.3 896.5,398.5 896.6,420.8 896.7,418.9 896.7,415.1 896.8,393.1 896.9,423.4 897.0,403.1 897.1,418.7 897.2,401.2 897.2,427.3 897.3,432.8 897.4,431.3 897.5,432.9 897.6,431.4 897.7,416.8 897.7,423.6 897.8,409.6 897.9,409.2 898.0,400.7 898.1,392.4 898.1,393.7 898.2,407.5 898.3,385.6 898.4,414.3 898.5,386.2 898.6,389.5 898.6,411.4 898.7,394.9 898.8,424.0 898.9,403.0 899.0,414.7 899.1,413.7 899.1,416.5 899.2,423.4 899.3,416.4 899.4,426.6 899.5,430.3 899.6,425.7 899.6,425.5 899.7,427.1 899.8,410.1 899.9,404.4 900.0,421.2 900.1,403.4 900.1,400.8 900.2,409.9 900.3,399.2 900.4,429.3 900.5,399.9 900.6,413.2 900.6,400.3 900.7,406.0 900.8,373.8 900.9,393.2 901.0,388.6 901.0,410.5 901.1,405.2 901.2,403.4 901.3,412.3 901.4,420.0 901.5,403.7 901.5,431.3 901.6,420.2 901.7,424.7 901.8,428.8 901.9,422.7 902.0,423.7 902.0,424.8 902.1,415.5 902.2,419.2 902.3,411.7 902.4,403.1 902.5,409.3 902.5,410.8 902.6,411.1 902.7,389.6 902.8,388.4 902.9,387.1 903.0,393.9 903.0,408.3 903.1,405.6 903.2,408.8 903.3,420.9 903.4,419.2 903.4,415.1 903.5,401.1 903.6,416.8 903.7,434.7 903.8,415.0 903.9,420.9 903.9,419.6 904.0,427.2 904.1,420.8 904.2,398.8 904.3,404.8 904.4,373.1 904.4,426.4 904.5,424.4 904.6,414.8 904.7,418.8 904.8,416.8 904.9,403.4 904.9,396.6 905.0,417.8 905.1,399.4 905.2,395.2 905.3,398.5 905.4,387.6 905.4,390.9 905.5,409.1 905.6,403.0 905.7,403.6 905.8,417.6 905.9,415.6 905.9,411.2 906.0,420.6 906.1,427.8 906.2,410.8 906.3,431.3 906.3,432.8 906.4,443.7 906.5,422.1 906.6,431.7 906.7,425.3 906.8,423.1 906.8,426.1 906.9,406.4 907.0,421.5 907.1,404.3 907.2,417.9 907.3,400.6 907.3,408.4 907.4,398.0 907.5,413.6 907.6,396.2 907.7,391.4 907.8,391.8 907.8,391.7 907.9,399.0 908.0,424.7 908.1,396.7 908.2,415.0 908.3,416.5 908.3,408.1 908.4,433.3 908.5,417.5 908.6,405.4 908.7,410.9 908.7,412.9 908.8,421.7 908.9,417.8 909.0,436.2 909.1,432.0 909.2,416.6 909.2,426.9 909.3,416.3 909.4,414.2 909.5,421.6 909.6,451.4 909.7,418.4 909.7,417.6 909.8,419.8 909.9,410.0 910.0,405.4 910.1,401.1 910.2,401.8 910.2,413.0 910.3,390.0 910.4,397.1 910.5,395.4 910.6,413.9 910.7,395.7 910.7,387.1 910.8,403.6 910.9,400.1 911.0,416.0 911.1,409.7 911.1,411.6 911.2,405.5 911.3,409.8 911.4,408.8 911.5,418.7 911.6,424.6 911.6,418.2 911.7,400.5 911.8,433.4 911.9,424.2 912.0,413.9 912.1,427.0 912.1,431.9 912.2,411.5 912.3,411.4 912.4,418.3 912.5,398.4 912.6,403.0 912.6,407.0 912.7,416.4 912.8,392.3 912.9,391.2 913.0,391.7 913.1,387.1 913.1,411.6 913.2,413.3 913.3,399.6 913.4,405.2 913.5,411.4 913.6,415.1 913.6,402.4 913.7,408.9 913.8,403.7 913.9,420.7 914.0,410.6 914.0,407.5 914.1,402.4 914.2,428.4 914.3,419.3 914.4,426.4 914.5,424.1 914.5,428.6 914.6,420.6 914.7,414.2 914.8,415.3 914.9,414.9 915.0,403.6 915.0,399.2 915.1,410.5 915.2,417.7 915.3,396.1 915.4,403.3 915.5,392.6 915.5,414.5 915.6,411.3 915.7,406.4 915.8,402.7 915.9,411.3 916.0,388.8 916.0,405.5 916.1,419.4 916.2,399.3 916.3,411.0 916.4,402.8 916.4,417.8 916.5,422.5 916.6,428.4 916.7,421.7 916.8,413.5 916.9,392.9 916.9,405.3 917.0,416.5 917.1,402.1 917.2,414.0 917.3,434.4 917.4,436.0 917.4,436.5 917.5,426.0 917.6,418.3 917.7,421.3 917.8,418.1 917.9,419.0 917.9,409.6 918.0,404.3 918.1,420.1 918.2,400.4 918.3,418.1 918.4,413.4 918.4,396.8 918.5,405.9 918.6,405.2 918.7,416.5 918.8,394.1 918.9,392.4 918.9,396.6 919.0,390.8 919.1,410.2 919.2,395.7 919.3,410.6 919.3,409.6 919.4,413.6 919.5,410.2 919.6,399.5 919.7,408.9 919.8,419.5 919.8,420.4 919.9,406.8 920.0,414.9 920.1,429.7 920.2,426.4 920.3,421.7 920.3,414.7 920.4,424.9 920.5,413.0 920.6,422.0 920.7,417.6 920.8,412.9 920.8,399.4 920.9,407.4 921.0,388.2 921.1,394.7 921.2,382.6 921.3,399.3 921.3,417.6 921.4,425.2 921.5,414.6 921.6,395.9 921.7,412.3 921.7,415.3 921.8,410.1 921.9,422.8 922.0,427.2 922.1,426.6 922.2,429.2 922.2,433.2 922.3,430.8 922.4,406.0 922.5,422.7 922.6,418.7 922.7,412.5 922.7,412.2 922.8,406.6 922.9,394.0 923.0,394.3 923.1,404.0 923.2,400.7 923.2,391.6 923.3,399.2 923.4,398.5 923.5,411.1 923.6,400.2 923.7,406.2 923.7,419.5 923.8,407.1 923.9,394.0 924.0,411.9 924.1,423.5 924.2,407.6 924.2,417.4 924.3,420.7 924.4,407.6 924.5,410.8 924.6,398.9 924.6,421.6 924.7,416.6 924.8,411.7 924.9,409.3 925.0,421.0 925.1,408.5 925.1,422.9 925.2,415.8 925.3,413.1 925.4,408.8 925.5,408.2 925.6,414.0 925.6,401.2 925.7,398.2 925.8,398.1 925.9,393.7 926.0,401.7 926.1,385.3 926.1,392.5 926.2,405.4 926.3,399.7 926.4,418.4 926.5,415.4 926.6,416.5 926.6,375.3 926.7,421.9 926.8,429.7 926.9,437.4 927.0,436.7 927.0,416.6 927.1,417.8 927.2,431.1 927.3,400.6 927.4,417.8 927.5,414.9 927.5,412.4 927.6,410.6 927.7,414.2 927.8,411.3 927.9,404.4 928.0,403.2 928.0,416.8 928.1,408.9 928.2,410.5 928.3,404.3 928.4,398.0 928.5,396.4 928.5,392.1 928.6,408.5 928.7,400.8 928.8,401.3 928.9,413.7 929.0,413.8 929.0,405.8 929.1,414.2 929.2,413.8 929.3,412.0 929.4,437.5 929.5,413.3 929.5,419.9 929.6,414.3 929.7,428.2 929.8,417.3 929.9,407.2 929.9,406.3 930.0,416.0 930.1,414.9 930.2,398.0 930.3,408.7 930.4,400.5 930.4,422.4 930.5,407.4 930.6,415.7 930.7,412.1 930.8,393.8 930.9,410.4 930.9,406.2 931.0,407.3 931.1,406.7 931.2,407.6 931.3,407.4 931.4,400.4 931.4,407.0 931.5,396.0 931.6,402.0 931.7,406.3 931.8,373.9 931.9,404.6 931.9,421.5 932.0,413.2 932.1,424.0 932.2,426.4 932.3,413.3 932.3,410.5 932.4,411.0 932.5,401.7 932.6,410.0 932.7,417.2 932.8,410.3 932.8,395.1 932.9,419.2 933.0,426.4 933.1,411.0 933.2,419.7 933.3,397.1 933.3,404.7 933.4,411.5 933.5,401.6 933.6,406.6 933.7,392.1 933.8,390.8 933.8,390.8 933.9,394.7 934.0,406.2 934.1,398.5 934.2,406.8 934.3,421.8 934.3,399.4 934.4,418.5 934.5,416.0 934.6,424.2 934.7,418.0 934.8,428.9 934.8,421.4 934.9,422.0 935.0,428.9 935.1,426.0 935.2,419.9 935.2,425.3 935.3,415.1 935.4,405.5 935.5,416.1 935.6,398.4 935.7,411.4 935.7,411.4 935.8,408.0 935.9,396.7 936.0,415.7 936.1,394.8 936.2,403.9 936.2,396.2 936.3,402.8 936.4,418.5 936.5,389.9 936.6,396.1 936.7,414.3 936.7,415.9 936.8,421.2 936.9,411.3 937.0,393.7 937.1,412.2 937.2,425.4 937.2,404.7 937.3,418.7 937.4,424.5 937.5,410.7 937.6,417.1 937.6,418.7 937.7,417.1 937.8,412.0 937.9,434.8 938.0,412.6 938.1,401.2 938.1,400.5 938.2,419.8 938.3,426.5 938.4,420.4 938.5,407.7 938.6,447.3 938.6,404.1 938.7,409.2 938.8,415.2 938.9,410.6 939.0,399.9 939.1,394.1 939.1,391.9 939.2,416.2 939.3,407.2 939.4,411.6 939.5,420.9 939.6,421.0 939.6,397.7 939.7,414.7 939.8,411.7 939.9,407.1 940.0,407.9 940.0,405.1 940.1,417.8 940.2,416.6 940.3,413.6 940.4,415.2 940.5,426.7 940.5,437.3 940.6,413.1 940.7,410.9 940.8,407.7 940.9,414.4 941.0,426.3 941.0,414.4 941.1,393.8 941.2,408.4 941.3,408.9 941.4,424.8 941.5,416.5 941.5,399.7 941.6,402.2 941.7,403.1 941.8,388.4 941.9,390.0 942.0,394.4 942.0,403.4 942.1,401.4 942.2,399.2 942.3,408.3 942.4,421.7 942.5,412.5 942.5,413.4 942.6,407.4 942.7,403.6 942.8,418.5 942.9,425.0 942.9,418.5 943.0,417.3 943.1,424.5 943.2,410.5 943.3,409.4 943.4,408.1 943.4,424.0 943.5,425.6 943.6,419.4 943.7,448.0 943.8,394.0 943.9,391.6 943.9,408.8 944.0,383.2 944.1,407.5 944.2,406.9 944.3,383.9 944.4,361.0 944.4,400.6 944.5,401.8 944.6,401.6 944.7,405.4 944.8,408.9 944.9,397.9 944.9,411.7 945.0,410.2 945.1,410.4 945.2,419.4 945.3,420.5 945.3,411.7 945.4,411.0 945.5,416.9 945.6,420.2 945.7,420.7 945.8,417.0 945.8,414.1 945.9,414.7 946.0,411.7 946.1,412.9 946.2,401.8 946.3,423.0 946.3,414.4 946.4,400.1 946.5,406.5 946.6,402.6 946.7,390.5 946.8,391.9 946.8,403.4 946.9,397.8 947.0,397.7 947.1,421.4 947.2,403.2 947.3,425.5 947.3,405.0 947.4,424.8 947.5,414.4 947.6,419.4 947.7,413.0 947.8,425.0 947.8,425.3 947.9,425.3 948.0,414.5 948.1,415.7 948.2,403.5 948.2,407.4 948.3,397.3 948.4,398.7 948.5,400.1 948.6,399.0 948.7,390.1 948.7,385.7 948.8,406.7 948.9,395.1 949.0,404.6 949.1,401.9 949.2,401.0 949.2,427.2 949.3,411.9 949.4,402.4 949.5,427.5 949.6,412.8 949.7,416.5 949.7,423.3 949.8,412.7 949.9,414.4 950.0,423.9 950.1,410.3 950.2,407.9 950.2,416.7 950.3,409.4 950.4,407.2 950.5,398.1 950.6,404.0 950.6,405.0 950.7,409.8 950.8,404.7 950.9,397.4 951.0,409.2 951.1,407.1 951.1,412.2 951.2,379.9 951.3,402.7 951.4,405.9 951.5,408.8 951.6,396.2 951.6,405.5 951.7,428.0 951.8,409.5 951.9,395.2 952.0,411.2 952.1,409.8 952.1,386.3 952.2,412.8 952.3,412.6 952.4,405.3 952.5,392.8 952.6,412.3 952.6,432.5 952.7,422.6 952.8,425.9 952.9,415.0 953.0,421.8 953.1,414.9 953.1,424.2 953.2,421.4 953.3,410.2 953.4,396.8 953.5,419.0 953.5,424.2 953.6,398.4 953.7,402.9 953.8,397.2 953.9,403.2 954.0,397.5 954.0,402.5 954.1,404.0 954.2,391.0 954.3,411.9 954.4,414.0 954.5,410.6 954.5,412.2 954.6,396.3 954.7,412.0 954.8,407.3 954.9,421.1 955.0,406.0 955.0,405.2 955.1,405.1 955.2,426.8 955.3,420.9 955.4,440.5 955.5,406.4 955.5,423.9 955.6,406.7 955.7,401.7 955.8,406.9 955.9,418.6 955.9,412.5 956.0,404.0 956.1,427.3 956.2,398.9 956.3,398.1 956.4,403.2 956.4,413.1 956.5,407.6 956.6,420.2 956.7,410.7 956.8,402.4 956.9,400.9 956.9,376.3 957.0,390.7 957.1,419.1 957.2,392.8 957.3,402.3 957.4,412.7 957.4,416.8 957.5,393.0 957.6,408.6 957.7,410.4 957.8,428.4 957.9,421.7 957.9,411.2 958.0,419.8 958.1,426.8 958.2,427.6 958.3,436.5 958.4,441.8 958.4,414.3 958.5,429.2 958.6,428.2 958.7,410.0 958.8,402.8 958.8,413.6 958.9,401.3 959.0,410.3 959.1,437.4 959.2,394.4 959.3,415.0 959.3,389.9 959.4,403.3 959.5,399.0 959.6,400.0 959.7,407.0 959.8,395.7 959.8,389.1 959.9,394.8 960.0,413.0 960.1,406.4 960.2,401.7 960.3,405.8 960.3,421.8 960.4,398.9 960.5,428.5 960.6,434.9 960.7,432.4 960.8,437.3 960.8,438.3 960.9,439.0 961.0,432.6 961.1,416.4 961.2,426.8 961.2,398.6 961.3,400.3 961.4,401.6 961.5,399.2 961.6,406.0 961.7,400.9 961.7,386.0 961.8,400.5 961.9,384.9 962.0,392.3 962.1,397.5 962.2,407.9 962.2,416.2 962.3,412.0 962.4,419.0 962.5,413.9 962.6,413.8 962.7,418.2 962.7,406.3 962.8,426.2 962.9,427.7 963.0,413.8 963.1,424.4 963.2,419.7 963.2,426.7 963.3,415.8 963.4,404.8 963.5,413.2 963.6,407.0 963.7,400.3 963.7,405.6 963.8,400.1 963.9,420.9 964.0,423.5 964.1,415.9 964.1,400.4 964.2,407.6 964.3,416.8 964.4,386.4 964.5,392.8 964.6,410.9 964.6,414.1 964.7,416.7 964.8,404.6 964.9,406.9 965.0,409.5 965.1,399.0 965.1,417.8 965.2,421.0 965.3,410.7 965.4,411.2 965.5,409.9 965.6,412.0 965.6,433.5 965.7,411.5 965.8,445.1 965.9,431.7 966.0,426.8 966.1,418.0 966.1,418.4 966.2,422.6 966.3,412.4 966.4,422.5 966.5,412.2 966.5,412.7 966.6,426.8 966.7,391.9 966.8,415.9 966.9,406.1 967.0,399.6 967.0,411.0 967.1,411.6 967.2,414.9 967.3,409.0 967.4,406.2 967.5,398.6 967.5,447.0 967.6,401.0 967.7,392.5 967.8,404.7 967.9,408.8 968.0,436.9 968.0,412.1 968.1,408.5 968.2,427.2 968.3,418.6 968.4,427.8 968.5,427.3 968.5,429.4 968.6,435.1 968.7,436.9 968.8,429.7 968.9,426.4 969.0,431.1 969.0,414.0 969.1,417.6 969.2,411.3 969.3,395.9 969.4,396.5 969.4,392.1 969.5,408.1 969.6,397.8 969.7,392.5 969.8,391.0 969.9,388.4 969.9,384.7 970.0,386.8 970.1,382.5 970.2,410.6 970.3,406.8 970.4,417.2 970.4,413.1 970.5,433.4 970.6,397.3 970.7,431.4 970.8,419.2 970.9,437.7 970.9,427.7 971.0,431.3 971.1,438.1 971.2,426.8 971.3,417.4 971.4,414.2 971.4,427.4 971.5,405.4 971.6,413.5 971.7,420.5 971.8,395.0 971.8,411.1 971.9,400.3 972.0,386.4 972.1,396.0 972.2,394.6 972.3,382.6 972.3,397.4 972.4,395.9 972.5,400.7 972.6,405.5 972.7,398.7 972.8,405.6 972.8,398.7 972.9,407.5 973.0,422.9 973.1,407.4 973.2,413.3 973.3,413.0 973.3,405.8 973.4,413.9 973.5,434.4 973.6,406.8 973.7,428.5 973.8,438.0 973.8,423.5 973.9,413.3 974.0,423.7 974.1,418.2 974.2,426.2 974.2,408.5 974.3,415.4 974.4,397.8 974.5,408.5 974.6,408.8 974.7,412.2 974.7,394.8 974.8,411.1 974.9,393.1 975.0,387.5 975.1,402.2 975.2,409.5 975.2,393.3 975.3,391.4 975.4,407.5 975.5,395.2 975.6,406.9 975.7,412.5 975.7,414.3 975.8,421.3 975.9,407.6 976.0,424.9 976.1,430.1 976.2,426.1 976.2,429.7 976.3,435.6 976.4,422.9 976.5,421.4 976.6,414.3 976.7,412.1 976.7,414.5 976.8,431.7 976.9,416.0 977.0,400.7 977.1,413.7 977.1,409.4 977.2,405.7 977.3,416.3 977.4,403.9 977.5,403.7 977.6,395.1 977.6,389.9 977.7,397.6 977.8,403.2 977.9,396.4 978.0,406.7 978.1,423.6 978.1,400.2 978.2,407.0 978.3,415.9 978.4,411.4 978.5,419.0 978.6,409.7 978.6,426.6 978.7,408.4 978.8,416.1 978.9,431.7 979.0,422.0 979.1,435.6 979.1,424.7 979.2,425.6 979.3,408.1 979.4,405.0 979.5,422.4 979.5,409.4 979.6,406.6 979.7,411.9 979.8,386.3 979.9,418.6 980.0,391.8 980.0,388.4 980.1,402.4 980.2,411.0 980.3,392.9 980.4,426.4 980.5,407.4 980.5,421.3 980.6,411.1 980.7,415.8 980.8,425.7 980.9,413.4 981.0,411.8 981.0,437.1 981.1,423.4 981.2,431.8 981.3,434.8 981.4,430.0 981.5,417.0 981.5,408.6 981.6,417.0 981.7,432.1 981.8,404.1 981.9,407.6 982.0,427.6 982.0,415.5 982.1,411.1 982.2,410.4 982.3,402.2 982.4,409.3 982.4,393.1 982.5,419.0 982.6,395.6 982.7,406.8 982.8,405.9 982.9,402.3 982.9,399.3 983.0,419.8 983.1,411.9 983.2,419.8 983.3,410.6 983.4,416.0 983.4,421.3 983.5,401.4 983.6,408.0 983.7,413.9 983.8,405.5 983.9,433.9 983.9,419.3 984.0,411.8 984.1,425.8 984.2,427.3 984.3,423.7 984.4,403.4 984.4,401.9 984.5,408.3 984.6,403.1 984.7,416.8 984.8,414.4 984.8,404.0 984.9,419.2 985.0,409.2 985.1,406.5 985.2,408.9 985.3,395.0 985.3,403.0 985.4,402.3 985.5,418.6 985.6,417.2 985.7,418.7 985.8,408.0 985.8,411.0 985.9,421.9 986.0,413.3 986.1,391.8 986.2,410.5 986.3,407.7 986.3,435.5 986.4,427.9 986.5,420.0 986.6,448.3 986.7,449.9 986.8,442.4 986.8,430.9 986.9,418.4 987.0,432.4 987.1,405.3 987.2,433.8 987.3,419.1 987.3,407.7 987.4,421.2 987.5,418.5 987.6,412.8 987.7,391.4 987.7,410.8 987.8,390.8 987.9,385.2 988.0,408.5 988.1,415.2 988.2,411.3 988.2,420.0 988.3,414.5 988.4,420.5 988.5,424.1 988.6,425.1 988.7,403.4 988.7,422.6 988.8,432.1 988.9,418.3 989.0,434.5 989.1,430.5 989.2,428.7 989.2,416.8 989.3,414.1 989.4,415.2 989.5,412.9 989.6,404.8 989.7,413.1 989.7,396.2 989.8,395.1 989.9,408.4 990.0,403.9 990.1,402.7 990.1,402.2 990.2,393.4 990.3,406.5 990.4,411.8 990.5,410.6 990.6,430.3 990.6,408.7 990.7,413.1 990.8,405.7 990.9,414.1 991.0,402.9 991.1,402.3 991.1,414.1 991.2,410.0 991.3,426.1 991.4,427.9 991.5,434.6 991.6,423.6 991.6,428.9 991.7,424.3 991.8,413.4 991.9,424.2 992.0,406.5 992.1,419.5 992.1,413.7 992.2,414.2 992.3,402.8 992.4,406.4 992.5,409.1 992.6,407.7 992.6,390.7 992.7,394.8 992.8,407.1 992.9,401.5 993.0,401.6 993.0,411.9 993.1,411.1 993.2,398.9 993.3,416.1 993.4,405.0 993.5,401.8 993.5,404.4 993.6,432.7 993.7,421.9 993.8,429.0 993.9,405.8 994.0,411.7 994.0,410.3 994.1,405.1 994.2,406.8 994.3,420.6 994.4,392.3 994.5,423.9 994.5,400.4 994.6,398.1 994.7,400.9 994.8,391.6 994.9,402.7 995.0,397.8 995.0,404.9 995.1,415.6 995.2,403.0 995.3,416.4 995.4,406.1 995.4,422.4 995.5,413.2 995.6,412.4 995.7,409.1 995.8,430.3 995.9,427.5 995.9,421.0 996.0,427.9 996.1,411.9 996.2,394.8 996.3,407.5 996.4,406.1 996.4,418.7 996.5,406.6 996.6,403.0 996.7,386.7 996.8,402.8 996.9,385.2 996.9,402.8 997.0,406.1 997.1,411.3 997.2,409.1 997.3,424.4 997.4,414.6 997.4,398.6 997.5,427.1 997.6,403.8 997.7,404.8 997.8,415.2 997.9,422.9 997.9,411.0 998.0,428.6 998.1,427.7 998.2,427.5 998.3,430.6 998.3,407.2 998.4,405.8 998.5,419.5 998.6,401.9 998.7,422.2 998.8,422.5 998.8,404.0 998.9,415.2 999.0,411.4 999.1,397.7 999.2,417.7 999.3,400.1 999.3,405.9 999.4,398.6 999.5,398.3 999.6,400.2 999.7,389.9 999.8,401.4 999.8,396.2 999.9,407.7 1000.0,404.8 1000.1,404.3 1000.2,420.5 1000.3,412.0 1000.3,405.4 1000.4,410.4 1000.5,403.4 1000.6,422.9 1000.7,412.1 1000.7,417.3 1000.8,446.6 1000.9,425.8 1001.0,421.0 1001.1,432.0 1001.2,428.2 1001.2,426.8 1001.3,424.2 1001.4,429.0 1001.5,423.0 1001.6,433.3 1001.7,393.4 1001.7,411.6 1001.8,409.5 1001.9,403.3 1002.0,401.6 1002.1,404.0 1002.2,414.2 1002.2,408.2 1002.3,386.1 1002.4,399.7 1002.5,400.3 1002.6,417.8 1002.7,415.6 1002.7,409.1 1002.8,418.1 1002.9,401.1 1003.0,418.0 1003.1,415.2 1003.1,421.4 1003.2,408.4 1003.3,402.9 1003.4,414.9 1003.5,419.5 1003.6,425.2 1003.6,417.9 1003.7,422.1 1003.8,404.3 1003.9,419.1 1004.0,417.4 1004.1,416.0 1004.1,427.9 1004.2,407.0 1004.3,405.3 1004.4,417.7 1004.5,411.5 1004.6,408.1 1004.6,399.1 1004.7,402.7 1004.8,389.8 1004.9,388.6 1005.0,407.0 1005.1,403.7 1005.1,415.6 1005.2,397.6 1005.3,420.8 1005.4,418.3 1005.5,411.4 1005.6,418.4 1005.6,388.4 1005.7,416.2 1005.8,419.7 1005.9,429.2 1006.0,424.5 1006.0,432.1 1006.1,427.4 1006.2,412.1 1006.3,422.7 1006.4,410.9 1006.5,416.9 1006.5,402.8 1006.6,418.0 1006.7,413.7 1006.8,401.3 1006.9,382.4 1007.0,390.5 1007.0,388.4 1007.1,388.3 1007.2,399.2 1007.3,397.0 1007.4,411.2 1007.5,408.7 1007.5,403.8 1007.6,407.2 1007.7,398.5 1007.8,412.2 1007.9,402.3 1008.0,410.6 1008.0,427.2 1008.1,421.5 1008.2,431.2 1008.3,423.2 1008.4,418.9 1008.4,421.5 1008.5,408.8 1008.6,412.2 1008.7,373.6 1008.8,404.8 1008.9,413.5 1008.9,417.2 1009.0,412.3 1009.1,409.9 1009.2,406.7 1009.3,396.4 1009.4,404.3 1009.4,399.1 1009.5,396.0 1009.6,409.0 1009.7,417.3 1009.8,415.7 1009.9,404.1 1009.9,418.0 1010.0,398.2 1010.1,425.7 1010.2,418.3 1010.3,406.2 1010.4,399.9 1010.4,417.1 1010.5,433.3 1010.6,425.5 1010.7,434.7 1010.8,428.9 1010.9,422.4 1010.9,420.5 1011.0,411.8 1011.1,410.2 1011.2,413.9 1011.3,426.7 1011.3,413.0 1011.4,433.8 1011.5,410.9 1011.6,415.1 1011.7,419.4 1011.8,390.8 1011.8,391.7 1011.9,391.7 1012.0,398.5 1012.1,401.7 1012.2,396.4 1012.3,389.2 1012.3,406.6 1012.4,410.0 1012.5,416.4 1012.6,412.0 1012.7,404.3 1012.8,419.2 1012.8,402.4 1012.9,410.3 1013.0,392.4 1013.1,409.8 1013.2,403.4 1013.3,425.4 1013.3,399.1 1013.4,421.7 1013.5,425.9 1013.6,409.6 1013.7,418.3 1013.7,427.4 1013.8,409.0 1013.9,406.7 1014.0,411.5 1014.1,415.4 1014.2,425.2 1014.2,397.1 1014.3,415.1 1014.4,408.3 1014.5,415.7 1014.6,417.4 1014.7,405.0 1014.7,410.9 1014.8,391.3 1014.9,409.0 1015.0,386.1 1015.1,377.1 1015.2,395.0 1015.2,393.4 1015.3,392.2 1015.4,407.0 1015.5,409.3 1015.6,413.0 1015.7,388.1 1015.7,418.3 1015.8,415.9 1015.9,421.4 1016.0,425.4 1016.1,431.7 1016.2,432.5 1016.2,422.5 1016.3,410.8 1016.4,403.7 1016.5,425.4 1016.6,419.6 1016.6,411.6 1016.7,419.7 1016.8,415.4 1016.9,408.1 1017.0,408.4 1017.1,408.3 1017.1,396.7 1017.2,402.6 1017.3,395.7 1017.4,393.2 1017.5,392.4 1017.6,399.3 1017.6,394.4 1017.7,404.9 1017.8,421.3 1017.9,398.8 1018.0,387.0 1018.1,404.4 1018.1,397.7 1018.2,401.9 1018.3,418.7 1018.4,413.2 1018.5,428.0 1018.6,430.6 1018.6,424.5 1018.7,432.2 1018.8,442.1 1018.9,445.0 1019.0,422.5 1019.0,425.7 1019.1,420.9 1019.2,426.0 1019.3,418.1 1019.4,404.8 1019.5,416.8 1019.5,387.2 1019.6,393.9 1019.7,381.4 1019.8,379.0 1019.9,395.5 1020.0,389.7 1020.0,407.0 1020.1,408.7 1020.2,393.0 1020.3,412.4 1020.4,417.9 1020.5,407.2 1020.5,413.0 1020.6,406.8 1020.7,427.8 1020.8,421.0 1020.9,429.9 1021.0,422.4 1021.0,426.9 1021.1,430.7 1021.2,435.6 1021.3,430.4 1021.4,409.0 1021.5,418.2 1021.5,422.4 1021.6,409.8 1021.7,420.8 1021.8,400.9 1021.9,398.7 1021.9,403.2 1022.0,405.9 1022.1,414.0 1022.2,391.8 1022.3,381.2 1022.4,399.3 1022.4,408.1 1022.5,399.3 1022.6,412.0 1022.7,421.6 1022.8,412.2 1022.9,406.2 1022.9,428.6 1023.0,406.0 1023.1,402.8 1023.2,418.6 1023.3,424.3 1023.4,434.1 1023.4,419.2 1023.5,424.4 1023.6,409.8 1023.7,405.1 1023.8,406.0 1023.9,413.3 1023.9,428.5 1024.0,400.0 1024.1,415.3 1024.2,411.1 1024.3,393.6 1024.3,394.4 1024.4,403.1 1024.5,392.8 1024.6,396.6 1024.7,399.7 1024.8,412.7 1024.8,394.3 1024.9,412.3 1025.0,405.6 1025.1,402.2 1025.2,392.8 1025.3,405.1 1025.3,417.4 1025.4,414.9 1025.5,403.8 1025.6,399.1 1025.7,427.6 1025.8,400.9 1025.8,424.0 1025.9,422.8 1026.0,426.8 1026.1,420.1 1026.2,424.8 1026.3,421.5 1026.3,427.0 1026.4,404.8 1026.5,412.1 1026.6,413.5 1026.7,393.1 1026.8,403.9 1026.8,396.1 1026.9,408.4 1027.0,403.2 1027.1,404.0 1027.2,393.6 1027.2,396.8 1027.3,415.4 1027.4,397.8 1027.5,406.2 1027.6,403.9 1027.7,399.6 1027.7,411.8 1027.8,405.7 1027.9,411.0 1028.0,411.9 1028.1,415.5 1028.2,415.2 1028.2,420.0 1028.3,413.8 1028.4,443.2 1028.5,415.7 1028.6,418.1 1028.7,423.2 1028.7,404.5 1028.8,411.4 1028.9,406.4 1029.0,399.7 1029.1,409.3 1029.2,422.8 1029.2,421.0 1029.3,406.0 1029.4,413.9 1029.5,383.6 1029.6,400.8 1029.6,413.4 1029.7,418.4 1029.8,406.5 1029.9,424.2 1030.0,401.4 1030.1,427.0 1030.1,401.8 1030.2,415.3 1030.3,401.6 1030.4,421.1 1030.5,415.0 1030.6,405.6 1030.6,432.5 1030.7,417.0 1030.8,414.2 1030.9,438.8 1031.0,427.8 1031.1,408.5 1031.1,406.2 1031.2,401.1 1031.3,412.0 1031.4,414.2 1031.5,412.5 1031.6,414.3 1031.6,401.4 1031.7,398.4 1031.8,398.5 1031.9,405.9 1032.0,390.7 1032.0,395.9 1032.1,400.9 1032.2,395.1 1032.3,411.5 1032.4,410.0 1032.5,401.7 1032.5,417.4 1032.6,403.5 1032.7,409.5 1032.8,407.8 1032.9,414.2 1033.0,434.8 1033.0,409.9 1033.1,424.4 1033.2,425.9 1033.3,413.4 1033.4,414.0 1033.5,418.6 1033.5,402.7 1033.6,406.7 1033.7,405.8 1033.8,422.7 1033.9,395.5 1034.0,407.0 1034.0,401.1 1034.1,408.0 1034.2,407.8 1034.3,401.5 1034.4,403.6 1034.5,390.2 1034.5,403.3 1034.6,419.2 1034.7,408.0 1034.8,408.1 1034.9,407.5 1034.9,410.1 1035.0,407.3 1035.1,407.2 1035.2,412.4 1035.3,406.3 1035.4,406.2 1035.4,417.5 1035.5,425.9 1035.6,409.1 1035.7,406.7 1035.8,407.3 1035.9,412.4 1035.9,424.9 1036.0,423.0 1036.1,432.3 1036.2,425.9 1036.3,405.0 1036.4,421.1 1036.4,411.1 1036.5,419.8 1036.6,421.2 1036.7,392.8 1036.8,425.9 1036.9,395.8 1036.9,414.8 1037.0,415.2 1037.1,420.8 1037.2,402.8 1037.3,397.3 1037.3,395.5 1037.4,406.1 1037.5,382.3 1037.6,396.6 1037.7,396.0 1037.8,397.5 1037.8,399.8 1037.9,409.5 1038.0,405.8 1038.1,417.0 1038.2,408.7 1038.3,419.1 1038.3,423.0 1038.4,415.9 1038.5,412.2 1038.6,423.6 1038.7,427.1 1038.8,436.1 1038.8,437.9 1038.9,416.7 1039.0,419.6 1039.1,410.6 1039.2,402.5 1039.3,403.6 1039.3,407.3 1039.4,403.8 1039.5,401.8 1039.6,412.2 1039.7,413.2 1039.8,408.9 1039.8,407.2 1039.9,400.7 1040.0,406.3 1040.1,404.0 1040.2,396.5 1040.2,396.4 1040.3,403.5 1040.4,417.2 1040.5,408.8 1040.6,401.7 1040.7,412.8 1040.7,400.4 1040.8,415.1 1040.9,412.9 1041.0,404.1 1041.1,401.1 1041.2,413.4 1041.2,401.1 1041.3,414.4 1041.4,415.3 1041.5,406.1 1041.6,416.8 1041.7,428.2 1041.7,429.5 1041.8,434.0 1041.9,414.4 1042.0,418.2 1042.1,402.9 1042.2,405.7 1042.2,413.3 1042.3,415.9 1042.4,413.5 1042.5,400.3 1042.6,411.9 1042.6,401.2 1042.7,400.5 1042.8,394.3 1042.9,400.8 1043.0,392.9 1043.1,405.6 1043.1,388.0 1043.2,386.7 1043.3,375.2 1043.4,401.7 1043.5,393.5 1043.6,375.6 1043.6,397.5 1043.7,406.8 1043.8,406.0 1043.9,411.9 1044.0,413.6 1044.1,405.8 1044.1,408.5 1044.2,401.2 1044.3,389.7 1044.4,404.7 1044.5,407.8 1044.6,398.4 1044.6,427.8 1044.7,406.5 1044.8,436.6 1044.9,436.4 1045.0,426.6 1045.1,432.8 1045.1,421.5 1045.2,409.4 1045.3,407.3 1045.4,422.5 1045.5,435.9 1045.5,405.2 1045.6,424.7 1045.7,407.9 1045.8,406.8 1045.9,404.1 1046.0,413.3 1046.0,411.4 1046.1,378.1 1046.2,402.6 1046.3,408.1 1046.4,408.3 1046.5,401.7 1046.5,387.4 1046.6,398.2 1046.7,413.8 1046.8,420.2 1046.9,416.0 1047.0,413.9 1047.0,414.2 1047.1,415.5 1047.2,413.2 1047.3,436.7 1047.4,441.4 1047.5,432.1 1047.5,423.4 1047.6,430.1 1047.7,420.2 1047.8,420.3 1047.9,406.9 1047.9,415.5 1048.0,414.7 1048.1,406.5 1048.2,394.5 1048.3,400.4 1048.4,387.8 1048.4,385.1 1048.5,396.4 1048.6,374.4 1048.7,407.9 1048.8,413.6 1048.9,413.7 1048.9,417.8 1049.0,411.9 1049.1,415.4 1049.2,415.1 1049.3,426.8 1049.4,437.7 1049.4,430.7 1049.5,427.3 1049.6,418.9 1049.7,426.5 1049.8,424.3 1049.9,424.6 1049.9,402.0 1050.0,415.8 1050.1,415.2 1050.2,411.2 1050.3,412.8 1050.4,410.3 1050.4,407.3 1050.5,396.5 1050.6,406.6 1050.7,407.3 1050.8,417.9 1050.8,381.5 1050.9,390.4 1051.0,382.0 1051.1,386.8 1051.2,390.1 1051.3,398.0 1051.3,401.6 1051.4,408.9 1051.5,404.2 1051.6,401.8 1051.7,411.2 1051.8,413.3 1051.8,403.7 1051.9,412.6 1052.0,406.2 1052.1,416.3 1052.2,399.0 1052.3,418.8 1052.3,414.3 1052.4,408.8 1052.5,423.9 1052.6,433.7 1052.7,421.0 1052.8,410.3 1052.8,437.7 1052.9,418.2 1053.0,412.0 1053.1,403.5 1053.2,423.5 1053.2,404.0 1053.3,410.2 1053.4,406.0 1053.5,419.4 1053.6,400.0 1053.7,388.8 1053.7,407.4 1053.8,401.1 1053.9,412.6 1054.0,425.4 1054.1,399.8 1054.2,403.3 1054.2,398.1 1054.3,405.6 1054.4,419.7 1054.5,429.7 1054.6,401.5 1054.7,402.6 1054.7,412.0 1054.8,412.9 1054.9,404.9 1055.0,415.3 1055.1,425.8 1055.2,408.5 1055.2,434.9 1055.3,430.7 1055.4,420.4 1055.5,423.3 1055.6,413.9 1055.7,406.4 1055.7,413.2 1055.8,423.3 1055.9,425.4 1056.0,429.5 1056.1,404.5 1056.1,422.9 1056.2,411.9 1056.3,410.0 1056.4,407.9 1056.5,411.0 1056.6,396.2 1056.6,400.5 1056.7,390.6 1056.8,396.7 1056.9,392.1 1057.0,394.6 1057.1,395.6 1057.1,396.7 1057.2,411.2 1057.3,405.5 1057.4,387.2 1057.5,433.7 1057.6,405.4 1057.6,415.1 1057.7,419.3 1057.8,425.7 1057.9,434.0 1058.0,425.1 1058.1,436.8 1058.1,413.7 1058.2,421.3 1058.3,405.7 1058.4,416.4 1058.5,426.3 1058.5,407.1 1058.6,409.0 1058.7,403.5 1058.8,431.3 1058.9,410.2 1059.0,398.3 1059.0,410.1 1059.1,424.8 1059.2,400.2 1059.3,396.1 1059.4,384.9 1059.5,388.4 1059.5,405.3 1059.6,390.2 1059.7,397.8 1059.8,397.0 1059.9,412.3 1060.0,401.9 1060.0,428.7 1060.1,422.3 1060.2,405.6 1060.3,398.9 1060.4,409.6 1060.5,414.9 1060.5,419.6 1060.6,423.7 1060.7,412.4 1060.8,439.1 1060.9,419.6 1061.0,407.1 1061.0,432.4 1061.1,435.6 1061.2,422.9 1061.3,412.6 1061.4,406.1 1061.4,415.7 1061.5,404.0 1061.6,415.2 1061.7,424.6 1061.8,402.0 1061.9,410.8 1061.9,411.6 1062.0,415.2 1062.1,418.0 1062.2,400.5 1062.3,374.6 1062.4,408.9 1062.4,417.5 1062.5,417.5 1062.6,405.7 1062.7,405.7 1062.8,400.2 1062.9,418.3 1062.9,397.8 1063.0,397.1 1063.1,407.0 1063.2,401.8 1063.3,396.4 1063.4,410.5 1063.4,424.2 1063.5,415.2 1063.6,419.6 1063.7,419.8 1063.8,400.1 1063.8,419.4 1063.9,418.8 1064.0,403.1 1064.1,410.4 1064.2,421.4 1064.3,407.9 1064.3,402.1 1064.4,424.7 1064.5,392.8 1064.6,387.6 1064.7,410.6 1064.8,395.5 1064.8,391.1 1064.9,392.8 1065.0,398.5 1065.1,398.1 1065.2,414.1 1065.3,412.8 1065.3,411.5 1065.4,406.9 1065.5,393.9 1065.6,403.1 1065.7,419.7 1065.8,407.5 1065.8,394.3 1065.9,395.4 1066.0,400.9 1066.1,417.0 1066.2,413.9 1066.2,421.2 1066.3,434.9 1066.4,427.1 1066.5,428.6 1066.6,433.8 1066.7,421.6 1066.7,421.3 1066.8,417.7 1066.9,406.8 1067.0,419.9 1067.1,410.0 1067.2,407.5 1067.2,408.2 1067.3,408.3 1067.4,406.5 1067.5,417.5 1067.6,418.4 1067.7,402.1 1067.7,397.1 1067.8,405.1 1067.9,407.2 1068.0,407.4 1068.1,392.5 1068.2,411.6 1068.2,403.7 1068.3,404.9 1068.4,409.2 1068.5,402.3 1068.6,415.6 1068.7,412.3 1068.7,420.9 1068.8,411.8 1068.9,403.0 1069.0,421.7 1069.1,418.1 1069.1,422.9 1069.2,424.5 1069.3,424.2 1069.4,414.9 1069.5,424.8 1069.6,409.6 1069.6,396.3 1069.7,420.2 1069.8,401.8 1069.9,413.0 1070.0,409.9 1070.1,387.5 1070.1,395.4 1070.2,393.9 1070.3,387.0 1070.4,397.5 1070.5,405.9 1070.6,426.8 1070.6,402.7 1070.7,396.0 1070.8,414.5 1070.9,421.2 1071.0,425.5 1071.1,405.6 1071.1,434.2 1071.2,413.1 1071.3,412.2 1071.4,426.0 1071.5,433.9 1071.5,430.1 1071.6,411.4 1071.7,432.1 1071.8,426.1 1071.9,411.9 1072.0,419.0 1072.0,399.5 1072.1,417.1 1072.2,421.3 1072.3,423.7 1072.4,412.7 1072.5,401.2 1072.5,407.4 1072.6,409.4 1072.7,414.3 1072.8,395.7 1072.9,451.4 1073.0,384.3 1073.0,417.8 1073.1,422.5 1073.2,421.9 1073.3,409.2 1073.4,405.8 1073.5,408.9 1073.5,400.6 1073.6,404.8 1073.7,415.9 1073.8,399.9 1073.9,424.9 1074.0,420.0 1074.0,425.1 1074.1,411.9 1074.2,418.5 1074.3,411.6 1074.4,427.8 1074.4,411.5 1074.5,409.6 1074.6,397.7 1074.7,423.6 1074.8,417.0 1074.9,397.2 1074.9,382.3 1075.0,399.0 1075.1,416.5 1075.2,415.7 1075.3,405.6 1075.4,412.2 1075.4,402.4 1075.5,399.6 1075.6,404.0 1075.7,419.0 1075.8,416.9 1075.9,412.5 1075.9,407.2 1076.0,408.3 1076.1,419.0 1076.2,409.0 1076.3,414.2 1076.4,425.3 1076.4,418.6 1076.5,404.2 1076.6,410.0 1076.7,415.8 1076.8,413.7 1076.8,402.5 1076.9,407.5 1077.0,409.6 1077.1,417.1 1077.2,413.0 1077.3,407.2 1077.3,391.2 1077.4,415.4 1077.5,401.0 1077.6,407.9 1077.7,409.6 1077.8,380.0 1077.8,413.0 1077.9,393.7 1078.0,397.5 1078.1,404.5 1078.2,410.3 1078.3,411.2 1078.3,406.5 1078.4,407.4 1078.5,405.9 1078.6,405.2 1078.7,424.9 1078.8,421.8 1078.8,411.1 1078.9,415.2 1079.0,430.6 1079.1,414.8 1079.2,422.8 1079.3,428.5 1079.3,418.0 1079.4,417.6 1079.5,419.9 1079.6,420.0 1079.7,400.8 1079.7,415.0 1079.8,417.2 1079.9,418.9 1080.0,404.8 1080.1,408.5 1080.2,412.2 1080.2,402.6 1080.3,418.0 1080.4,401.4 1080.5,410.8 1080.6,405.4 1080.7,403.6 1080.7,397.7 1080.8,385.4 1080.9,404.8 1081.0,393.0 1081.1,393.4 1081.2,407.7 1081.2,414.1 1081.3,420.6 1081.4,411.4 1081.5,386.0 1081.6,412.4 1081.7,409.7 1081.7,418.9 1081.8,407.0 1081.9,408.5 1082.0,405.1 1082.1,398.4 1082.1,410.6 1082.2,429.4 1082.3,426.2 1082.4,433.4 1082.5,423.0 1082.6,428.7 1082.6,403.9 1082.7,429.6 1082.8,405.6 1082.9,409.6 1083.0,424.1 1083.1,404.0 1083.1,399.6 1083.2,395.4 1083.3,413.0 1083.4,402.0 1083.5,404.5 1083.6,391.4 1083.6,401.6 1083.7,389.6 1083.8,410.3 1083.9,409.6 1084.0,415.6 1084.1,410.0 1084.1,421.7 1084.2,409.5 1084.3,415.8 1084.4,422.9 1084.5,408.8 1084.6,401.0 1084.6,406.4 1084.7,407.8 1084.8,414.8 1084.9,416.2 1085.0,430.4 1085.0,401.5 1085.1,434.9 1085.2,430.1 1085.3,433.3 1085.4,431.7 1085.5,419.1 1085.5,424.9 1085.6,421.4 1085.7,411.6 1085.8,423.2 1085.9,420.5 1086.0,406.9 1086.0,415.1 1086.1,426.8 1086.2,403.5 1086.3,419.1 1086.4,404.6 1086.5,402.2 1086.5,397.7 1086.6,395.6 1086.7,399.4 1086.8,398.3 1086.9,414.5 1087.0,400.0 1087.0,420.8 1087.1,400.3 1087.2,415.1 1087.3,403.4 1087.4,411.4 1087.4,406.5 1087.5,414.9 1087.6,413.1 1087.7,406.7 1087.8,405.3 1087.9,414.3 1087.9,440.1 1088.0,420.8 1088.1,421.5 1088.2,422.2 1088.3,441.0 1088.4,424.0 1088.4,450.2 1088.5,425.6 1088.6,422.0 1088.7,393.0 1088.8,413.1 1088.9,388.5 1088.9,410.6 1089.0,414.7 1089.1,416.0 1089.2,418.2 1089.3,409.8 1089.4,404.7 1089.4,409.7 1089.5,380.8 1089.6,382.0 1089.7,388.9 1089.8,376.7 1089.9,387.7 1089.9,395.5 1090.0,403.5 1090.1,406.8 1090.2,390.6 1090.3,396.3 1090.3,412.0 1090.4,413.7 1090.5,401.0 1090.6,418.3 1090.7,404.5 1090.8,424.2 1090.8,407.4 1090.9,404.5 1091.0,406.2 1091.1,402.3 1091.2,408.1 1091.3,424.8 1091.3,435.5 1091.4,441.4 1091.5,427.8 1091.6,417.3 1091.7,418.4 1091.8,386.4 1091.8,407.0 1091.9,407.1 1092.0,449.7 1092.1,412.6 1092.2,407.6 1092.3,401.0 1092.3,410.3 1092.4,399.3 1092.5,391.8 1092.6,399.1 1092.7,391.5 1092.7,391.3 1092.8,387.2 1092.9,393.2 1093.0,402.2 1093.1,397.0 1093.2,400.2 1093.2,408.7 1093.3,421.3 1093.4,395.3 1093.5,412.8 1093.6,412.9 1093.7,421.9 1093.7,430.5 1093.8,442.4 1093.9,427.7 1094.0,425.3 1094.1,414.6 1094.2,417.4 1094.2,411.0 1094.3,404.0 1094.4,410.6 1094.5,415.8 1094.6,401.9 1094.7,374.6 1094.7,406.0 1094.8,401.8 1094.9,395.6 1095.0,397.7 1095.1,416.7 1095.1,414.2 1095.2,411.4 1095.3,414.2 1095.4,412.2 1095.5,405.7 1095.6,420.1 1095.6,397.3 1095.7,407.5 1095.8,431.8 1095.9,411.2 1096.0,419.4 1096.1,406.2 1096.1,400.0 1096.2,432.1 1096.3,423.5 1096.4,438.5 1096.5,446.6 1096.6,423.4 1096.6,417.1 1096.7,425.8 1096.8,418.8 1096.9,421.5 1097.0,416.6 1097.1,412.9 1097.1,409.1 1097.2,398.2 1097.3,399.5 1097.4,398.5 1097.5,394.0 1097.6,392.6 1097.6,396.3 1097.7,416.4 1097.8,409.3 1097.9,407.2 1098.0,417.6 1098.0,423.6 1098.1,419.5 1098.2,421.5 1098.3,412.7 1098.4,412.2 1098.5,406.1 1098.5,431.4 1098.6,414.3 1098.7,414.9 1098.8,402.6 1098.9,432.1 1099.0,426.7 1099.0,444.7 1099.1,416.3 1099.2,407.6 1099.3,415.9 1099.4,419.9 1099.5,397.6 1099.5,419.2 1099.6,395.2 1099.7,420.2 1099.8,406.6 1099.9,408.1 1100.0,409.2 1100.0,411.0 1100.1,409.9 1100.2,383.9 1100.3,387.1 1100.4,394.0 1100.4,392.7 1100.5,379.5 1100.6,379.3 1100.7,396.6 1100.8,404.8 1100.9,400.9 1100.9,406.5 1101.0,400.1 1101.1,412.1 1101.2,417.0 1101.3,414.3 1101.4,428.3 1101.4,428.9 1101.5,427.0 1101.6,426.5 1101.7,421.6 1101.8,431.8 1101.9,419.6 1101.9,396.3 1102.0,425.9 1102.1,414.0 1102.2,415.1 1102.3,405.4 1102.4,417.9 1102.4,391.0 1102.5,415.7 1102.6,408.6 1102.7,407.0 1102.8,393.7 1102.9,399.5 1102.9,412.8 1103.0,397.7 1103.1,406.1 1103.2,393.1 1103.3,401.1 1103.3,405.2 1103.4,411.6 1103.5,417.1 1103.6,401.6 1103.7,402.9 1103.8,391.0 1103.8,413.1 1103.9,403.5 1104.0,425.2 1104.1,413.5 1104.2,420.8 1104.3,432.7 1104.3,431.3 1104.4,422.4 1104.5,422.9 1104.6,420.9 1104.7,418.4 1104.8,413.4 1104.8,414.7 1104.9,425.7 1105.0,409.8 1105.1,395.8 1105.2,412.4 1105.3,409.6 1105.3,415.3 1105.4,412.3 1105.5,410.9 1105.6,411.4 1105.7,396.7 1105.7,407.8 1105.8,399.8 1105.9,404.4 1106.0,420.5 1106.1,391.6 1106.2,414.0 1106.2,409.7 1106.3,454.8 1106.4,421.0 1106.5,411.2 1106.6,406.3 1106.7,429.2 1106.7,410.6 1106.8,409.8 1106.9,399.7 1107.0,437.4 1107.1,431.1 1107.2,419.8 1107.2,431.3 1107.3,374.6 1107.4,424.2 1107.5,421.0 1107.6,404.4 1107.7,415.8 1107.7,420.4 1107.8,410.7 1107.9,400.7 1108.0,411.9 1108.1,388.6 1108.2,416.6 1108.2,388.3 1108.3,397.4 1108.4,389.6 1108.5,388.1 1108.6,399.7 1108.6,402.6 1108.7,414.4 1108.8,411.7 1108.9,414.4 1109.0,402.3 1109.1,414.9 1109.1,408.0 1109.2,414.0 1109.3,395.2 1109.4,424.9 1109.5,428.3 1109.6,417.0 1109.6,440.2 1109.7,422.2 1109.8,428.9 1109.9,425.3 1110.0,417.5 1110.1,395.4 1110.1,403.3 1110.2,403.8 1110.3,407.0 1110.4,406.6 1110.5,416.9 1110.6,403.4 1110.6,399.7 1110.7,387.2 1110.8,379.0 1110.9,390.5 1111.0,398.0 1111.0,380.1 1111.1,408.4 1111.2,394.4 1111.3,386.6 1111.4,401.8 1111.5,408.2 1111.5,412.1 1111.6,412.4 1111.7,409.0 1111.8,393.7 1111.9,415.0 1112.0,427.2 1112.0,408.7 1112.1,419.8 1112.2,405.5 1112.3,411.5 1112.4,409.1 1112.5,404.4 1112.5,412.2 1112.6,416.7 1112.7,411.6 1112.8,410.3 1112.9,414.2 1113.0,404.4 1113.0,405.4 1113.1,403.2 1113.2,406.1 1113.3,398.5 1113.4,391.8 1113.5,403.1 1113.5,405.2 1113.6,403.4 1113.7,406.3 1113.8,416.1 1113.9,403.7 1113.9,407.2 1114.0,394.7 1114.1,421.0 1114.2,422.0 1114.3,412.3 1114.4,401.8 1114.4,413.9 1114.5,425.6 1114.6,435.9 1114.7,430.5 1114.8,441.1 1114.9,440.2 1114.9,428.7 1115.0,431.7 1115.1,424.8 1115.2,424.7 1115.3,416.5 1115.4,406.8 1115.4,410.6 1115.5,408.8 1115.6,420.1 1115.7,423.5 1115.8,412.0 1115.9,411.2 1115.9,405.5 1116.0,419.9 1116.1,397.0 1116.2,402.8 1116.3,408.1 1116.3,400.7 1116.4,402.7 1116.5,390.1 1116.6,408.7 1116.7,405.2 1116.8,418.8 1116.8,422.9 1116.9,417.4 1117.0,425.2 1117.1,413.9 1117.2,413.1 1117.3,396.1 1117.3,418.5 1117.4,408.1 1117.5,415.3 1117.6,417.1 1117.7,425.6 1117.8,431.9 1117.8,423.2 1117.9,414.1 1118.0,427.9 1118.1,428.4 1118.2,419.5 1118.3,423.6 1118.3,415.0 1118.4,414.0 1118.5,417.7 1118.6,412.9 1118.7,400.8 1118.8,408.6 1118.8,397.5 1118.9,406.4 1119.0,402.1 1119.1,412.8 1119.2,388.3 1119.2,398.4 1119.3,390.4 1119.4,405.8 1119.5,412.4 1119.6,391.2 1119.7,420.7 1119.7,428.4 1119.8,404.4 1119.9,420.2 1120.0,421.3 1120.1,413.5 1120.2,427.3 1120.2,409.6 1120.3,411.5 1120.4,406.3 1120.5,425.1 1120.6,407.8 1120.7,416.7 1120.7,415.7 1120.8,413.2 1120.9,412.8 1121.0,408.2 1121.1,414.0 1121.2,399.2 1121.2,418.1 1121.3,456.5 1121.4,409.8 1121.5,386.6 1121.6,385.7 1121.6,387.8 1121.7,400.6 1121.8,409.6 1121.9,416.7 1122.0,414.5 1122.1,409.7 1122.1,417.6 1122.2,422.5 1122.3,400.0 1122.4,406.7 1122.5,410.8 1122.6,422.1 1122.6,416.3 1122.7,429.5 1122.8,425.9 1122.9,432.7 1123.0,436.6 1123.1,438.7 1123.1,423.6 1123.2,432.8 1123.3,408.4 1123.4,410.5 1123.5,416.8 1123.6,407.0 1123.6,403.7 1123.7,408.8 1123.8,416.8 1123.9,402.6 1124.0,406.1 1124.0,402.8 1124.1,381.2 1124.2,396.8 1124.3,411.3 1124.4,394.8 1124.5,394.0 1124.5,412.1 1124.6,407.4 1124.7,415.1 1124.8,408.6 1124.9,401.0 1125.0,388.3 1125.0,413.0 1125.1,409.6 1125.2,398.9 1125.3,413.0 1125.4,406.4 1125.5,423.0 1125.5,393.1 1125.6,431.1 1125.7,420.8 1125.8,416.2 1125.9,418.6 1126.0,410.1 1126.0,412.5 1126.1,417.1 1126.2,408.0 1126.3,403.3 1126.4,408.9 1126.5,403.2 1126.5,413.2 1126.6,418.0 1126.7,395.0 1126.8,401.8 1126.9,385.5 1126.9,379.6 1127.0,403.4 1127.1,389.1 1127.2,403.5 1127.3,407.3 1127.4,425.8 1127.4,414.6 1127.5,412.9 1127.6,416.0 1127.7,427.2 1127.8,437.8 1127.9,428.1 1127.9,432.1 1128.0,434.1 1128.1,447.8 1128.2,442.8 1128.3,405.4 1128.4,418.2 1128.4,411.7 1128.5,402.1 1128.6,417.4 1128.7,406.5 1128.8,394.8 1128.9,395.1 1128.9,388.5 1129.0,396.6 1129.1,382.9 1129.2,411.5 1129.3,421.1 1129.3,406.7 1129.4,406.8 1129.5,411.2 1129.6,428.9 1129.7,422.5 1129.8,414.0 1129.8,403.4 1129.9,400.8 1130.0,396.6 1130.1,425.3 1130.2,422.9 1130.3,437.2 1130.3,436.4 1130.4,440.4 1130.5,449.7 1130.6,429.5 1130.7,415.9 1130.8,402.6 1130.8,413.4 1130.9,414.7 1131.0,410.9 1131.1,410.1 1131.2,407.8 1131.3,409.1 1131.3,399.7 1131.4,402.9 1131.5,391.8 1131.6,396.7 1131.7,391.6 1131.8,398.5 1131.8,401.4 1131.9,409.2 1132.0,414.9 1132.1,406.0 1132.2,418.3 1132.2,407.5 1132.3,396.7 1132.4,416.9 1132.5,405.3 1132.6,405.6 1132.7,413.2 1132.7,406.3 1132.8,421.7 1132.9,430.6 1133.0,417.8 1133.1,420.5 1133.2,419.7 1133.2,412.3 1133.3,427.0 1133.4,422.7 1133.5,397.8 1133.6,413.4 1133.7,400.0 1133.7,403.3 1133.8,421.3 1133.9,407.6 1134.0,377.0 1134.1,397.2 1134.2,394.4 1134.2,413.9 1134.3,405.9 1134.4,416.3 1134.5,411.4 1134.6,409.8 1134.6,417.4 1134.7,422.8 1134.8,405.9 1134.9,405.9 1135.0,419.6 1135.1,425.9 1135.1,416.8 1135.2,430.1 1135.3,414.2 1135.4,414.1 1135.5,417.8 1135.6,402.2 1135.6,426.7 1135.7,419.0 1135.8,410.4 1135.9,403.0 1136.0,403.7 1136.1,406.3 1136.1,416.2 1136.2,407.9 1136.3,389.6 1136.4,397.9 1136.5,392.9 1136.6,399.3 1136.6,408.8 1136.7,403.5 1136.8,391.0 1136.9,410.5 1137.0,394.8 1137.1,403.1 1137.1,424.0 1137.2,410.3 1137.3,415.4 1137.4,412.6 1137.5,398.4 1137.5,422.9 1137.6,424.7 1137.7,413.8 1137.8,412.3 1137.9,413.4 1138.0,417.0 1138.0,428.0 1138.1,424.9 1138.2,407.3 1138.3,418.7 1138.4,413.4 1138.5,415.1 1138.5,413.8 1138.6,426.3 1138.7,406.7 1138.8,389.5 1138.9,426.1 1139.0,405.8 1139.0,421.9 1139.1,405.2 1139.2,408.1 1139.3,411.8 1139.4,421.4 1139.5,413.5 1139.5,395.1 1139.6,406.6 1139.7,402.3 1139.8,395.1 1139.9,406.9 1139.9,406.0 1140.0,419.3 1140.1,391.3 1140.2,408.6 1140.3,405.7 1140.4,415.9 1140.4,419.9 1140.5,404.6 1140.6,415.2 1140.7,410.5 1140.8,424.3 1140.9,400.8 1140.9,425.2 1141.0,426.1 1141.1,425.7 1141.2,438.5 1141.3,422.9 1141.4,431.0 1141.4,422.6 1141.5,403.7 1141.6,401.0 1141.7,407.1 1141.8,418.9 1141.9,411.8 1141.9,400.3 1142.0,406.0 1142.1,401.1 1142.2,392.4 1142.3,382.9 1142.4,399.5 1142.4,411.4 1142.5,407.2 1142.6,408.1 1142.7,412.8 1142.8,408.6 1142.8,401.5 1142.9,411.2 1143.0,407.6 1143.1,420.4 1143.2,419.7 1143.3,418.1 1143.3,436.7 1143.4,422.3 1143.5,433.9 1143.6,425.2 1143.7,414.2 1143.8,410.0 1143.8,410.3 1143.9,416.3 1144.0,394.7 1144.1,411.9 1144.2,410.7 1144.3,410.4 1144.3,409.9 1144.4,413.3 1144.5,415.9 1144.6,419.9 1144.7,417.0 1144.8,397.7 1144.8,385.8 1144.9,394.7 1145.0,391.3 1145.1,398.3 1145.2,451.4 1145.2,387.6 1145.3,405.7 1145.4,406.5 1145.5,402.2 1145.6,439.9 1145.7,414.3 1145.7,424.8 1145.8,428.0 1145.9,432.3 1146.0,432.1 1146.1,437.0 1146.2,423.8 1146.2,436.8 1146.3,425.2 1146.4,416.5 1146.5,424.7 1146.6,417.0 1146.7,405.8 1146.7,409.0 1146.8,411.7 1146.9,408.7 1147.0,388.2 1147.1,411.7 1147.2,414.0 1147.2,400.5 1147.3,414.4 1147.4,401.5 1147.5,415.4 1147.6,391.8 1147.7,398.4 1147.7,409.9 1147.8,429.9 1147.9,421.1 1148.0,419.9 1148.1,386.0 1148.1,423.8 1148.2,412.9 1148.3,407.6 1148.4,411.7 1148.5,421.7 1148.6,425.1 1148.6,413.7 1148.7,425.6 1148.8,435.8 1148.9,426.4 1149.0,423.6 1149.1,404.3 1149.1,416.3 1149.2,427.6 1149.3,414.2 1149.4,403.9 1149.5,419.1 1149.6,415.7 1149.6,421.9 1149.7,406.6 1149.8,405.7 1149.9,408.1 1150.0,399.8 1150.1,393.9 1150.1,406.6 1150.2,404.0 1150.3,400.6 1150.4,410.9 1150.5,424.9 1150.5,408.0 1150.6,415.2 1150.7,412.8 1150.8,416.4 1150.9,406.4 1151.0,433.5 1151.0,406.4 1151.1,417.3 1151.2,413.7 1151.3,425.7 1151.4,415.9 1151.5,415.6 1151.5,408.9 1151.6,425.2 1151.7,411.5 1151.8,425.5 1151.9,388.3 1152.0,409.9 1152.0,407.3 1152.1,404.0 1152.2,391.9 1152.3,386.7 1152.4,391.6 1152.5,414.3 1152.5,404.9 1152.6,402.1 1152.7,405.3 1152.8,401.9 1152.9,415.4 1153.0,413.8 1153.0,431.1 1153.1,417.5 1153.2,414.0 1153.3,420.6 1153.4,431.9 1153.4,427.8 1153.5,424.7 1153.6,430.0 1153.7,423.8 1153.8,415.1 1153.9,408.3 1153.9,394.6 1154.0,419.2 1154.1,413.8 1154.2,404.0 1154.3,415.2 1154.4,402.0 1154.4,422.6 1154.5,389.6 1154.6,393.8 1154.7,398.8 1154.8,408.6 1154.9,403.1 1154.9,408.7 1155.0,392.3 1155.1,410.8 1155.2,406.6 1155.3,406.1 1155.4,414.1 1155.4,416.6 1155.5,429.9 1155.6,407.3 1155.7,405.0 1155.8,419.5 1155.8,432.0 1155.9,423.5 1156.0,433.2 1156.1,451.2 1156.2,427.0 1156.3,438.2 1156.3,420.4 1156.4,424.4 1156.5,403.8 1156.6,424.4 1156.7,409.8 1156.8,412.3 1156.8,424.6 1156.9,407.9 1157.0,411.4 1157.1,411.5 1157.2,412.5 1157.3,397.4 1157.3,399.9 1157.4,393.2 1157.5,395.0 1157.6,385.1 1157.7,402.3 1157.8,402.5 1157.8,393.9 1157.9,412.5 1158.0,400.9 1158.1,407.1 1158.2,427.5 1158.2,401.8 1158.3,418.9 1158.4,430.8 1158.5,426.5 1158.6,426.0 1158.7,422.2 1158.7,403.0 1158.8,432.4 1158.9,411.6 1159.0,415.9 1159.1,415.0 1159.2,415.0 1159.2,417.7 1159.3,397.4 1159.4,407.0 1159.5,406.1 1159.6,450.4 1159.7,413.3 1159.7,398.8 1159.8,399.1 1159.9,405.7 1160.0,388.6 1160.1,401.3 1160.2,400.5 1160.2,413.4 1160.3,410.3 1160.4,411.4 1160.5,406.0 1160.6,410.1 1160.7,407.1 1160.7,419.5 1160.8,410.6 1160.9,413.1 1161.0,414.3 1161.1,422.9 1161.1,420.2 1161.2,424.7 1161.3,419.6 1161.4,420.5 1161.5,422.8 1161.6,421.1 1161.6,413.8 1161.7,422.3 1161.8,432.1 1161.9,412.0 1162.0,414.5 1162.1,409.3 1162.1,406.2 1162.2,408.3 1162.3,409.0 1162.4,401.2 1162.5,412.7 1162.6,389.2 1162.6,397.2 1162.7,400.7 1162.8,394.1 1162.9,408.0 1163.0,414.7 1163.1,413.5 1163.1,419.8 1163.2,404.6 1163.3,420.7 1163.4,412.1 1163.5,402.1 1163.5,408.9 1163.6,392.0 1163.7,402.7 1163.8,410.5 1163.9,425.6 1164.0,412.0 1164.0,408.9 1164.1,413.3 1164.2,418.4 1164.3,415.9 1164.4,420.3 1164.5,413.9 1164.5,412.0 1164.6,413.0 1164.7,400.3 1164.8,418.5 1164.9,400.6 1165.0,415.9 1165.0,419.9 1165.1,413.8 1165.2,418.3 1165.3,410.0 1165.4,399.3 1165.5,390.8 1165.5,391.3 1165.6,417.0 1165.7,387.9 1165.8,407.4 1165.9,401.2 1166.0,397.1 1166.0,402.1 1166.1,396.5 1166.2,410.7 1166.3,419.3 1166.4,419.0 1166.4,394.9 1166.5,416.3 1166.6,414.0 1166.7,421.9 1166.8,427.5 1166.9,409.3 1166.9,412.7 1167.0,424.8 1167.1,418.6 1167.2,428.2 1167.3,420.8 1167.4,422.2 1167.4,407.2 1167.5,402.8 1167.6,415.9 1167.7,423.2 1167.8,399.4 1167.9,386.4 1167.9,409.6 1168.0,383.3 1168.1,393.7 1168.2,391.5 1168.3,409.5 1168.4,400.4 1168.4,413.5 1168.5,398.3 1168.6,387.0 1168.7,406.8 1168.8,417.1 1168.8,416.4 1168.9,412.1 1169.0,409.9 1169.1,399.0 1169.2,410.3 1169.3,410.1 1169.3,423.2 1169.4,425.9 1169.5,419.6 1169.6,425.8 1169.7,429.8 1169.8,420.7 1169.8,408.0 1169.9,425.8 1170.0,408.9 1170.1,403.1 1170.2,415.5 1170.3,422.0 1170.3,421.6 1170.4,409.8 1170.5,410.2 1170.6,408.0 1170.7,405.4 1170.8,398.5 1170.8,392.0 1170.9,385.1 1171.0,395.4 1171.1,389.7 1171.2,402.7 1171.3,409.1 1171.3,403.4 1171.4,416.3 1171.5,399.9 1171.6,417.5 1171.7,397.0 1171.7,417.2 1171.8,416.5 1171.9,410.2 1172.0,420.1 1172.1,415.8 1172.2,430.6 1172.2,413.1 1172.3,418.7 1172.4,407.0 1172.5,422.6 1172.6,418.4 1172.7,413.6 1172.7,407.3 1172.8,420.0 1172.9,418.9 1173.0,426.3 1173.1,413.6 1173.2,392.9 1173.2,409.5 1173.3,418.4 1173.4,411.5 1173.5,407.0 1173.6,399.2 1173.7,395.4 1173.7,392.4 1173.8,406.4 1173.9,399.1 1174.0,407.3 1174.1,403.3 1174.1,402.3 1174.2,404.4 1174.3,425.2 1174.4,405.0 1174.5,414.1 1174.6,430.5 1174.6,407.5 1174.7,413.2 1174.8,425.3 1174.9,434.6 1175.0,417.7 1175.1,423.0 1175.1,416.4 1175.2,417.5 1175.3,397.9 1175.4,416.8 1175.5,410.5 1175.6,410.4 1175.6,397.6 1175.7,400.3 1175.8,415.9 1175.9,401.0 1176.0,416.7 1176.1,404.1 1176.1,421.3 1176.2,420.0 1176.3,393.3 1176.4,394.8 1176.5,404.9 1176.6,419.3 1176.6,412.7 1176.7,416.0 1176.8,404.9 1176.9,410.0 1177.0,427.9 1177.0,417.7 1177.1,420.8 1177.2,417.1 1177.3,421.6 1177.4,401.4 1177.5,404.1 1177.5,418.0 1177.6,425.4 1177.7,429.7 1177.8,424.5 1177.9,408.0 1178.0,421.2 1178.0,422.6 1178.1,414.1 1178.2,426.5 1178.3,423.3 1178.4,412.5 1178.5,421.7 1178.5,397.2 1178.6,410.6 1178.7,414.6 1178.8,394.2 1178.9,402.7 1179.0,400.9 1179.0,388.5 1179.1,389.9 1179.2,409.5 1179.3,395.5 1179.4,420.0 1179.4,397.1 1179.5,409.3 1179.6,410.7 1179.7,398.1 1179.8,407.4 1179.9,429.0 1179.9,413.9 1180.0,412.1 1180.1,413.9 1180.2,412.2 1180.3,425.8 1180.4,430.3 1180.4,430.2 1180.5,418.1 1180.6,416.2 1180.7,409.5 1180.8,396.8 1180.9,415.2 1180.9,419.7 1181.0,406.1 1181.1,402.4 1181.2,395.8 1181.3,387.6 1181.4,397.6 1181.4,401.5 1181.5,412.6 1181.6,405.6 1181.7,402.4 1181.8,414.0 1181.9,396.9 1181.9,410.9 1182.0,404.4 1182.1,428.0 1182.2,407.4 1182.3,420.9 1182.3,427.0 1182.4,424.1 1182.5,426.7 1182.6,431.9 1182.7,433.8 1182.8,416.4 1182.8,410.9 1182.9,412.3 1183.0,413.2 1183.1,412.9 1183.2,427.0 1183.3,410.3 1183.3,407.3 1183.4,450.4 1183.5,410.6 1183.6,407.4 1183.7,405.4 1183.8,422.0 1183.8,422.7 1183.9,398.5 1184.0,413.1 1184.1,415.4 1184.2,410.7 1184.3,420.0 1184.3,410.3 1184.4,415.2 1184.5,419.9 1184.6,410.7 1184.7,407.7 1184.7,415.9 1184.8,429.4 1184.9,420.0 1185.0,428.7 1185.1,429.5 1185.2,421.7 1185.2,417.0 1185.3,411.2 1185.4,419.1 1185.5,392.5 1185.6,402.9 1185.7,404.7 1185.7,396.1 1185.8,401.2 1185.9,397.6 1186.0,397.6 1186.1,407.9 1186.2,394.0 1186.2,388.4 1186.3,388.1 1186.4,386.8 1186.5,395.9 1186.6,411.4 1186.7,409.2 1186.7,418.9 1186.8,421.9 1186.9,393.6 1187.0,405.7 1187.1,404.7 1187.1,428.7 1187.2,413.2 1187.3,426.1 1187.4,418.4 1187.5,420.4 1187.6,413.5 1187.6,428.9 1187.7,409.1 1187.8,408.8 1187.9,412.2 1188.0,422.2 1188.1,421.3 1188.1,424.9 1188.2,424.4 1188.3,404.0 1188.4,424.6 1188.5,417.4 1188.6,408.2 1188.6,415.0 1188.7,406.7 1188.8,397.2 1188.9,408.7 1189.0,395.4 1189.1,388.8 1189.1,401.3 1189.2,395.8 1189.3,407.9 1189.4,409.2 1189.5,402.9 1189.6,412.6 1189.6,412.2 1189.7,406.0 1189.8,404.6 1189.9,425.2 1190.0,409.4 1190.0,420.0 1190.1,422.6 1190.2,409.9 1190.3,426.8 1190.4,423.8 1190.5,422.9 1190.5,409.3 1190.6,406.4 1190.7,423.2 1190.8,406.6 1190.9,420.8 1191.0,408.7 1191.0,392.7 1191.1,401.0 1191.2,410.4 1191.3,371.2 1191.4,399.7 1191.5,422.0 1191.5,404.6 1191.6,387.1 1191.7,393.0 1191.8,410.9 1191.9,402.4 1192.0,406.9 1192.0,411.3 1192.1,410.4 1192.2,394.3 1192.3,408.1 1192.4,411.1 1192.4,437.2 1192.5,430.0 1192.6,424.0 1192.7,424.8 1192.8,424.4 1192.9,426.6 1192.9,411.8 1193.0,411.5 1193.1,424.0 1193.2,388.7 1193.3,411.8 1193.4,426.0 1193.4,422.9 1193.5,415.8 1193.6,414.4 1193.7,417.8 1193.8,411.4 1193.9,394.6 1193.9,412.4 1194.0,390.7 1194.1,389.8 1194.2,402.9 1194.3,408.8 1194.4,348.3 1194.4,395.1 1194.5,400.6 1194.6,405.3 1194.7,416.2 1194.8,404.9 1194.9,419.6 1194.9,405.4 1195.0,403.0 1195.1,404.3 1195.2,399.1 1195.3,407.5 1195.3,406.5 1195.4,416.4 1195.5,406.2 1195.6,423.3 1195.7,407.9 1195.8,423.6 1195.8,425.2 1195.9,410.9 1196.0,410.9 1196.1,414.4 1196.2,417.0 1196.3,403.3 1196.3,406.6 1196.4,400.0 1196.5,408.5 1196.6,399.3 1196.7,408.3 1196.8,402.7 1196.8,387.8 1196.9,385.1 1197.0,393.5 1197.1,386.9 1197.2,406.2 1197.3,390.7 1197.3,406.3 1197.4,408.7 1197.5,418.4 1197.6,398.6 1197.7,418.6 1197.7,398.4 1197.8,398.4 1197.9,429.1 1198.0,417.2 1198.1,429.5 1198.2,427.2 1198.2,426.3 1198.3,425.5 1198.4,414.1 1198.5,412.9 1198.6,428.5 1198.7,420.9 1198.7,421.6 1198.8,422.1 1198.9,405.8 1199.0,408.9 1199.1,403.8 1199.2,419.3 1199.2,401.4 1199.3,414.4 1199.4,392.6 1199.5,400.9 1199.6,394.6 1199.7,397.0 1199.7,397.3 1199.8,409.5 1199.9,407.2 1200.0,419.1 1200.1,391.4 1200.2,409.3 1200.2,419.8 1200.3,410.0 1200.4,403.4 1200.5,421.7 1200.6,407.8 1200.6,422.8 1200.7,411.1 1200.8,424.5 1200.9,434.5 1201.0,423.3 1201.1,412.0 1201.1,436.4 1201.2,426.0 1201.3,412.1 1201.4,422.2 1201.5,426.1 1201.6,410.4 1201.6,414.9 1201.7,413.0 1201.8,410.2 1201.9,400.3 1202.0,406.4 1202.1,408.4 1202.1,393.3 1202.2,397.5 1202.3,400.6 1202.4,402.3 1202.5,412.9 1202.6,424.1 1202.6,406.9 1202.7,398.1 1202.8,406.4 1202.9,409.5 1203.0,405.6 1203.0,415.6 1203.1,426.8 1203.2,433.0 1203.3,417.9 1203.4,430.3 1203.5,430.7 1203.5,417.1 1203.6,410.4 1203.7,404.5 1203.8,429.4 1203.9,414.8 1204.0,417.2 1204.0,410.2 1204.1,411.2 1204.2,406.7 1204.3,412.9 1204.4,419.3 1204.5,425.4 1204.5,390.8 1204.6,409.9 1204.7,397.0 1204.8,400.3 1204.9,393.1 1205.0,401.3 1205.0,392.8 1205.1,413.1 1205.2,401.6 1205.3,403.7 1205.4,416.3 1205.5,419.0 1205.5,417.4 1205.6,400.1 1205.7,414.7 1205.8,403.6 1205.9,414.4 1205.9,409.0 1206.0,405.5 1206.1,411.6 1206.2,419.6 1206.3,422.4 1206.4,404.5 1206.4,410.6 1206.5,415.4 1206.6,422.9 1206.7,412.0 1206.8,397.4 1206.9,416.7 1206.9,408.1 1207.0,402.8 1207.1,408.5 1207.2,404.7 1207.3,394.5 1207.4,402.3 1207.4,399.1 1207.5,397.1 1207.6,412.6 1207.7,402.7 1207.8,396.1 1207.9,397.7 1207.9,425.0 1208.0,412.3 1208.1,395.8 1208.2,419.4 1208.3,422.4 1208.3,416.2 1208.4,428.9 1208.5,433.9 1208.6,429.4 1208.7,417.3 1208.8,412.7 1208.8,407.8 1208.9,423.6 1209.0,425.1 1209.1,404.3 1209.2,411.8 1209.3,410.0 1209.3,407.5 1209.4,396.4 1209.5,397.2 1209.6,409.5 1209.7,396.1 1209.8,396.3 1209.8,386.2 1209.9,393.1 1210.0,383.0 1210.1,385.5 1210.2,404.0 1210.3,416.8 1210.3,406.0 1210.4,417.3 1210.5,413.7 1210.6,407.4 1210.7,424.2 1210.8,438.4 1210.8,429.2 1210.9,435.7 1211.0,438.2 1211.1,416.4 1211.2,414.1 1211.2,413.9 1211.3,403.7 1211.4,412.3 1211.5,392.8 1211.6,408.8 1211.7,400.0 1211.7,411.7 1211.8,398.5 1211.9,402.5 1212.0,406.8 1212.1,392.1 1212.2,404.8 1212.2,391.6 1212.3,416.6 1212.4,422.0 1212.5,396.7 1212.6,405.5 1212.7,413.7 1212.7,430.9 1212.8,423.3 1212.9,419.0 1213.0,407.6 1213.1,433.3 1213.2,409.7 1213.2,436.0 1213.3,403.5 1213.4,408.4 1213.5,416.8 1213.6,399.1 1213.6,410.1 1213.7,417.6 1213.8,413.9 1213.9,403.3 1214.0,415.5 1214.1,417.0 1214.1,412.1 1214.2,408.9 1214.3,414.9 1214.4,388.7 1214.5,381.6 1214.6,401.9 1214.6,399.8 1214.7,409.2 1214.8,419.8 1214.9,407.9 1215.0,419.5 1215.1,423.9 1215.1,415.6 1215.2,407.4 1215.3,414.6 1215.4,403.5 1215.5,404.7 1215.6,402.3 1215.6,401.6 1215.7,421.5 1215.8,413.5 1215.9,417.5 1216.0,422.9 1216.0,427.7 1216.1,415.2 1216.2,415.5 1216.3,407.3 1216.4,411.7 1216.5,415.3 1216.5,423.4 1216.6,411.4 1216.7,395.3 1216.8,408.8 1216.9,407.8 1217.0,411.5 1217.0,399.1 1217.1,398.0 1217.2,394.5 1217.3,395.1 1217.4,405.2 1217.5,406.4 1217.5,407.3 1217.6,413.0 1217.7,417.2 1217.8,408.1 1217.9,410.8 1218.0,414.9 1218.0,412.2 1218.1,401.1 1218.2,421.2 1218.3,405.0 1218.4,431.8 1218.5,403.5 1218.5,416.4 1218.6,405.1 1218.7,411.6 1218.8,422.3 1218.9,415.1 1218.9,413.2 1219.0,431.0 1219.1,402.4 1219.2,404.1 1219.3,403.4 1219.4,408.5 1219.4,420.6 1219.5,416.6 1219.6,442.8 1219.7,408.9 1219.8,417.1 1219.9,411.8 1219.9,393.2 1220.0,398.7 1220.1,418.7 1220.2,381.9 1220.3,406.8 1220.4,409.2 1220.4,411.4 1220.5,396.3 1220.6,422.1 1220.7,408.1 1220.8,405.6 1220.9,429.4 1220.9,398.8 1221.0,420.4 1221.1,403.1 1221.2,424.5 1221.3,411.2 1221.3,409.4 1221.4,442.7 1221.5,431.2 1221.6,422.5 1221.7,406.1 1221.8,396.4 1221.8,409.9 1221.9,406.7 1222.0,404.3 1222.1,419.0 1222.2,416.4 1222.3,409.7 1222.3,399.4 1222.4,414.7 1222.5,400.8 1222.6,410.5 1222.7,412.0 1222.8,398.2 1222.8,400.3 1222.9,403.1 1223.0,413.1 1223.1,413.2 1223.2,403.1 1223.3,423.2 1223.3,416.5 1223.4,420.8 1223.5,410.4 1223.6,399.7 1223.7,414.3 1223.8,416.7 1223.8,414.2 1223.9,414.3 1224.0,423.3 1224.1,431.2 1224.2,424.5 1224.2,418.1 1224.3,425.4 1224.4,428.9 1224.5,407.8 1224.6,414.5 1224.7,407.5 1224.7,412.1 1224.8,407.2 1224.9,419.8 1225.0,406.9 1225.1,405.6 1225.2,404.1 1225.2,398.3 1225.3,378.0 1225.4,412.6 1225.5,409.2 1225.6,420.0 1225.7,410.3 1225.7,415.5 1225.8,402.6 1225.9,411.8 1226.0,412.2 1226.1,410.4 1226.2,393.9 1226.2,401.5 1226.3,407.6 1226.4,401.5 1226.5,417.4 1226.6,433.2 1226.6,436.1 1226.7,423.4 1226.8,429.4 1226.9,433.1 1227.0,432.2 1227.1,412.1 1227.1,419.2 1227.2,421.4 1227.3,404.7 1227.4,409.7 1227.5,421.7 1227.6,397.6 1227.6,416.1 1227.7,412.8 1227.8,412.1 1227.9,405.7 1228.0,387.1 1228.1,399.9 1228.1,388.3 1228.2,397.6 1228.3,384.2 1228.4,386.2 1228.5,392.9 1228.6,387.5 1228.6,403.6 1228.7,425.3 1228.8,422.1 1228.9,416.4 1229.0,404.2 1229.1,409.8 1229.1,412.4 1229.2,416.2 1229.3,424.9 1229.4,426.2 1229.5,426.9 1229.5,418.1 1229.6,408.8 1229.7,396.7 1229.8,398.9 1229.9,412.0 1230.0,415.0 1230.0,414.5 1230.1,423.5 1230.2,395.7 1230.3,392.9 1230.4,393.2 1230.5,393.0 1230.5,390.7 1230.6,392.2 1230.7,392.6 1230.8,420.6 1230.9,389.8 1231.0,416.9 1231.0,398.9 1231.1,420.7 1231.2,399.9 1231.3,388.1 1231.4,407.6 1231.5,422.1 1231.5,413.8 1231.6,434.2 1231.7,437.7 1231.8,437.8 1231.9,429.0 1231.9,421.1 1232.0,422.5 1232.1,400.9 1232.2,407.7 1232.3,421.5 1232.4,413.1 1232.4,403.3 1232.5,401.2 1232.6,381.5 1232.7,398.9 1232.8,394.3 1232.9,399.4 1232.9,404.1 1233.0,401.2 1233.1,406.0 1233.2,415.6 1233.3,415.7 1233.4,407.5 1233.4,411.5 1233.5,415.3 1233.6,425.0 1233.7,412.4 1233.8,423.9 1233.9,419.8 1233.9,434.5 1234.0,433.9 1234.1,431.2 1234.2,440.0 1234.3,419.7 1234.4,412.7 1234.4,411.9 1234.5,410.1 1234.6,398.6 1234.7,428.2 1234.8,419.7 1234.8,413.7 1234.9,411.9 1235.0,406.3 1235.1,410.5 1235.2,399.0 1235.3,388.9 1235.3,395.9 1235.4,387.4 1235.5,388.6 1235.6,392.0 1235.7,399.8 1235.8,421.8 1235.8,409.1 1235.9,432.5 1236.0,424.3 1236.1,405.6 1236.2,435.2 1236.3,405.4 1236.3,419.4 1236.4,411.8 1236.5,408.7 1236.6,424.5 1236.7,435.9 1236.8,425.1 1236.8,438.3 1236.9,423.7 1237.0,421.1 1237.1,408.1 1237.2,429.1 1237.2,409.3 1237.3,394.7 1237.4,412.4 1237.5,394.4 1237.6,402.9 1237.7,425.0 1237.7,402.6 1237.8,400.4 1237.9,406.0 1238.0,398.1 1238.1,408.4 1238.2,374.0 1238.2,388.2 1238.3,398.9 1238.4,392.6 1238.5,390.7 1238.6,408.3 1238.7,411.5 1238.7,405.7 1238.8,412.3 1238.9,395.7 1239.0,401.9 1239.1,409.2 1239.2,414.5 1239.2,431.7 1239.3,425.5 1239.4,399.8 1239.5,421.5 1239.6,412.8 1239.7,438.0 1239.7,429.4 1239.8,408.0 1239.9,403.7 1240.0,423.5 1240.1,424.4 1240.1,420.4 1240.2,410.1 1240.3,430.4 1240.4,396.5 1240.5,420.6 1240.6,407.9 1240.6,401.2 1240.7,406.5 1240.8,403.1 1240.9,404.1 1241.0,380.9 1241.1,385.4 1241.1,394.2 1241.2,399.4 1241.3,398.3 1241.4,419.9 1241.5,407.7 1241.6,410.3 1241.6,396.7 1241.7,407.2 1241.8,419.6 1241.9,423.3 1242.0,405.4 1242.1,409.4 1242.1,407.7 1242.2,416.1 1242.3,415.2 1242.4,419.5 1242.5,405.8 1242.5,423.9 1242.6,430.7 1242.7,412.4 1242.8,411.6 1242.9,419.2 1243.0,402.9 1243.0,407.8 1243.1,370.2 1243.2,418.5 1243.3,396.8 1243.4,402.8 1243.5,421.3 1243.5,421.0 1243.6,392.1 1243.7,383.3 1243.8,394.8 1243.9,403.2 1244.0,403.6 1244.0,391.1 1244.1,387.2 1244.2,399.1 1244.3,406.3 1244.4,419.2 1244.5,420.4 1244.5,420.8 1244.6,428.0 1244.7,407.2 1244.8,414.7 1244.9,395.4 1245.0,403.9 1245.0,414.8 1245.1,399.8 1245.2,411.2 1245.3,423.7 1245.4,422.9 1245.4,431.5 1245.5,427.9 1245.6,421.8 1245.7,422.7 1245.8,420.7 1245.9,416.9 1245.9,412.2 1246.0,399.3 1246.1,412.6 1246.2,410.6 1246.3,398.5 1246.4,398.0 1246.4,406.2 1246.5,402.4 1246.6,404.7 1246.7,413.7 1246.8,403.8 1246.9,407.9 1246.9,415.9 1247.0,400.9 1247.1,407.8 1247.2,410.5 1247.3,408.7 1247.4,403.4 1247.4,408.2 1247.5,423.7 1247.6,418.1 1247.7,425.1 1247.8,430.3 1247.8,427.1 1247.9,411.4 1248.0,416.9 1248.1,392.0 1248.2,416.0 1248.3,400.8 1248.3,396.7 1248.4,407.6 1248.5,401.2 1248.6,390.3 1248.7,381.7 1248.8,396.5 1248.8,399.1 1248.9,396.9 1249.0,395.8 1249.1,407.7 1249.2,398.8 1249.3,404.5 1249.3,410.3 1249.4,419.2 1249.5,404.4 1249.6,430.1 1249.7,419.3 1249.8,426.6 1249.8,414.1 1249.9,412.9 1250.0,413.9 1250.1,421.6 1250.2,413.9 1250.2,442.2 1250.3,443.0 1250.4,422.3 1250.5,409.8 1250.6,412.3 1250.7,421.3 1250.7,427.2 1250.8,405.9 1250.9,408.6 1251.0,410.2 1251.1,422.8 1251.2,432.7 1251.2,403.9 1251.3,395.4 1251.4,400.3 1251.5,399.7 1251.6,397.1 1251.7,399.6 1251.7,397.1 1251.8,397.3 1251.9,408.6 1252.0,401.2 1252.1,418.9 1252.2,411.6 1252.2,395.8 1252.3,397.8 1252.4,418.4 1252.5,403.3 1252.6,405.9 1252.7,402.5 1252.7,407.2 1252.8,413.1 1252.9,400.7 1253.0,406.4 1253.1,431.3 1253.1,425.0 1253.2,433.5 1253.3,434.6 1253.4,420.0 1253.5,418.7 1253.6,428.7 1253.6,394.0 1253.7,410.2 1253.8,412.1 1253.9,409.1 1254.0,418.8 1254.1,418.2 1254.1,396.0 1254.2,414.8 1254.3,425.6 1254.4,373.9 1254.5,403.0 1254.6,415.1 1254.6,411.2 1254.7,392.2 1254.8,393.1 1254.9,409.5 1255.0,404.8 1255.1,407.0 1255.1,444.6 1255.2,420.0 1255.3,412.6 1255.4,420.4 1255.5,404.6 1255.5,409.4 1255.6,417.8 1255.7,419.0 1255.8,423.0 1255.9,413.8 1256.0,420.0 1256.0,416.2 1256.1,437.0 1256.2,410.4 1256.3,414.4 1256.4,414.9 1256.5,423.1 1256.5,401.2 1256.6,397.6 1256.7,411.0 1256.8,412.3 1256.9,417.4 1257.0,403.7 1257.0,410.4 1257.1,417.0 1257.2,399.8 1257.3,403.6 1257.4,403.0 1257.5,403.0 1257.5,402.2 1257.6,409.4 1257.7,410.0 1257.8,412.7 1257.9,403.5 1258.0,419.2 1258.0,398.2 1258.1,401.4 1258.2,416.7 1258.3,417.6 1258.4,426.1 1258.4,403.5 1258.5,407.1 1258.6,401.2 1258.7,415.2 1258.8,416.2 1258.9,424.9 1258.9,434.8 1259.0,416.4 1259.1,422.6 1259.2,418.2 1259.3,421.9 1259.4,409.0 1259.4,425.5 1259.5,421.9 1259.6,401.6 1259.7,403.6 1259.8,414.5 1259.9,401.9 1259.9,398.2 1260.0,390.4 1260.1,392.1 1260.2,395.2 1260.3,411.1 1260.4,391.9 1260.4,410.8 1260.5,405.1 1260.6,405.7 1260.7,398.2 1260.8,404.3 1260.8,430.7 1260.9,430.9 1261.0,422.5 1261.1,430.5 1261.2,418.1 1261.3,410.7 1261.3,410.0 1261.4,427.5 1261.5,411.7 1261.6,405.4 1261.7,404.8 1261.8,402.8 1261.8,387.8 1261.9,373.9 1262.0,405.3 1262.1,401.7 1262.2,401.9 1262.3,405.7 1262.3,400.4 1262.4,405.9 1262.5,409.0 1262.6,401.7 1262.7,412.4 1262.8,411.9 1262.8,414.7 1262.9,420.7 1263.0,434.4 1263.1,405.4 1263.2,399.3 1263.3,409.1 1263.3,417.2 1263.4,406.3 1263.5,418.0 1263.6,438.0 1263.7,432.1 1263.7,425.7 1263.8,428.8 1263.9,411.4 1264.0,423.7 1264.1,410.8 1264.2,404.8 1264.2,427.2 1264.3,406.0 1264.4,403.5 1264.5,418.5 1264.6,420.9 1264.7,412.8 1264.7,408.4 1264.8,407.6 1264.9,405.9 1265.0,410.5 1265.1,413.5 1265.2,407.1 1265.2,395.2 1265.3,399.4 1265.4,402.3 1265.5,412.9 1265.6,416.1 1265.7,415.6 1265.7,409.6 1265.8,423.2 1265.9,408.0 1266.0,407.4 1266.1,421.0 1266.1,412.7 1266.2,419.0 1266.3,449.3 1266.4,428.6 1266.5,421.6 1266.6,435.6 1266.6,405.8 1266.7,402.8 1266.8,406.6 1266.9,412.3 1267.0,398.7 1267.1,410.4 1267.1,408.5 1267.2,406.9 1267.3,401.4 1267.4,425.5 1267.5,403.2 1267.6,408.1 1267.6,394.0 1267.7,399.5 1267.8,397.2 1267.9,397.3 1268.0,396.0 1268.1,406.2 1268.1,401.8 1268.2,410.7 1268.3,417.6 1268.4,408.3 1268.5,417.8 1268.6,423.6 1268.6,411.6 1268.7,422.7 1268.8,425.8 1268.9,439.0 1269.0,418.6 1269.0,421.5 1269.1,433.7 1269.2,422.8 1269.3,406.4 1269.4,405.9 1269.5,411.9 1269.5,406.0 1269.6,403.1 1269.7,421.5 1269.8,392.2 1269.9,382.8 1270.0,396.7 1270.0,387.8 1270.1,383.7 1270.2,393.0 1270.3,389.3 1270.4,401.2 1270.5,406.8 1270.5,413.7 1270.6,411.8 1270.7,422.1 1270.8,421.3 1270.9,410.2 1271.0,418.9 1271.0,409.8 1271.1,411.9 1271.2,412.4 1271.3,409.8 1271.4,421.8 1271.4,430.3 1271.5,427.0 1271.6,423.0 1271.7,406.5 1271.8,405.8 1271.9,422.5 1271.9,426.5 1272.0,421.6 1272.1,406.3 1272.2,426.8 1272.3,403.4 1272.4,413.8 1272.4,398.5 1272.5,403.2 1272.6,410.3 1272.7,402.9 1272.8,394.9 1272.9,389.5 1272.9,404.7 1273.0,410.2 1273.1,407.1 1273.2,417.7 1273.3,406.7 1273.4,407.8 1273.4,403.5 1273.5,418.5 1273.6,401.3 1273.7,386.9 1273.8,399.0 1273.9,410.3 1273.9,414.5 1274.0,429.4 1274.1,414.5 1274.2,403.5 1274.3,418.9 1274.3,417.8 1274.4,419.1 1274.5,426.0 1274.6,393.3 1274.7,414.0 1274.8,397.3 1274.8,410.8 1274.9,407.4 1275.0,409.9 1275.1,397.0 1275.2,392.1 1275.3,392.5 1275.3,394.6 1275.4,399.7 1275.5,410.0 1275.6,412.7 1275.7,388.4 1275.8,422.1 1275.8,405.2 1275.9,425.2 1276.0,423.8 1276.1,409.8 1276.2,432.6 1276.3,415.9 1276.3,412.2 1276.4,424.2 1276.5,413.5 1276.6,409.1 1276.7,433.4 1276.7,416.9 1276.8,414.7 1276.9,403.2 1277.0,413.3 1277.1,418.6 1277.2,417.6 1277.2,403.8 1277.3,402.1 1277.4,397.3 1277.5,409.0 1277.6,396.8 1277.7,403.7 1277.7,412.8 1277.8,417.0 1277.9,389.1 1278.0,404.4 1278.1,414.2 1278.2,406.2 1278.2,420.1 1278.3,402.3 1278.4,414.9 1278.5,442.2 1278.6,428.9 1278.7,430.7 1278.7,424.6 1278.8,432.9 1278.9,411.4 1279.0,415.5 1279.1,401.4 1279.1,409.3 1279.2,398.4 1279.3,397.6 1279.4,407.0 1279.5,402.6 1279.6,393.9 1279.6,395.0 1279.7,396.8 1279.8,378.9 1279.9,391.7 1280.0,400.8 1280.1,418.2 1280.1,420.4 1280.2,412.5 1280.3,420.8 1280.4,423.4 1280.5,405.7 1280.6,404.9 1280.6,416.0 1280.7,411.1 1280.8,401.4 1280.9,407.8 1281.0,404.5 1281.1,426.2 1281.1,432.4 1281.2,426.7 1281.3,413.4 1281.4,425.9 1281.5,423.0 1281.6,417.5 1281.6,401.3 1281.7,400.6 1281.8,419.5 1281.9,401.7 1282.0,404.3 1282.0,397.7 1282.1,410.9 1282.2,405.0 1282.3,398.1 1282.4,395.7 1282.5,406.7 1282.5,389.6 1282.6,393.1 1282.7,402.3 1282.8,398.9 1282.9,394.8 1283.0,406.6 1283.0,408.0 1283.1,419.8 1283.2,411.3 1283.3,416.9 1283.4,419.3 1283.5,402.7 1283.5,411.8 1283.6,418.1 1283.7,424.0 1283.8,419.0 1283.9,440.4 1284.0,407.5 1284.0,419.7 1284.1,418.7 1284.2,417.6 1284.3,418.4 1284.4,412.1 1284.4,404.3 1284.5,417.9 1284.6,404.1 1284.7,413.1 1284.8,406.7 1284.9,392.4 1284.9,405.3 1285.0,409.8 1285.1,397.5 1285.2,396.8 1285.3,405.6 1285.4,408.0 1285.4,401.3 1285.5,416.7 1285.6,412.1 1285.7,417.7 1285.8,405.7 1285.9,414.5 1285.9,407.9 1286.0,411.2 1286.1,411.6 1286.2,418.2 1286.3,400.2 1286.4,415.4 1286.4,416.5 1286.5,430.5 1286.6,423.5 1286.7,435.5 1286.8,433.3 1286.9,411.0 1286.9,408.8 1287.0,408.4 1287.1,409.3 1287.2,406.0 1287.3,411.0 1287.3,409.1 1287.4,419.4 1287.5,412.3 1287.6,408.7 1287.7,427.3 1287.8,414.1 1287.8,409.2 1287.9,382.8 1288.0,411.8 1288.1,416.2 1288.2,396.0 1288.3,412.3 1288.3,401.3 1288.4,407.8 1288.5,395.1 1288.6,411.1 1288.7,403.5 1288.8,412.5 1288.8,410.5 1288.9,410.8 1289.0,411.3 1289.1,398.8 1289.2,397.4 1289.3,413.2 1289.3,417.7 1289.4,416.7 1289.5,412.1 1289.6,417.0 1289.7,420.0 1289.7,431.9 1289.8,396.0 1289.9,400.9 1290.0,406.7 1290.1,408.1 1290.2,399.3 1290.2,394.8 1290.3,406.1 1290.4,402.5 1290.5,404.7 1290.6,384.6 1290.7,402.3 1290.7,404.9 1290.8,394.1 1290.9,399.8 1291.0,407.0 1291.1,401.7 1291.2,408.2 1291.2,411.0 1291.3,407.8 1291.4,405.9 1291.5,408.9 1291.6,406.7 1291.7,409.3 1291.7,410.6 1291.8,427.2 1291.9,409.2 1292.0,419.1 1292.1,421.0 1292.2,414.2 1292.2,399.6 1292.3,406.6 1292.4,421.7 1292.5,407.3 1292.6,427.7 1292.6,412.2 1292.7,398.4 1292.8,419.9 1292.9,424.0 1293.0,410.2 1293.1,400.5 1293.1,383.9 1293.2,399.1 1293.3,394.0 1293.4,407.2 1293.5,382.5 1293.6,405.2 1293.6,403.4 1293.7,402.0 1293.8,411.8 1293.9,418.3 1294.0,414.6 1294.1,411.5 1294.1,406.7 1294.2,408.3 1294.3,424.6 1294.4,426.6 1294.5,438.5 1294.6,423.3 1294.6,402.0 1294.7,413.3 1294.8,416.5 1294.9,397.9 1295.0,406.9 1295.0,400.9 1295.1,397.0 1295.2,421.3 1295.3,410.2 1295.4,409.8 1295.5,394.4 1295.5,402.8 1295.6,397.8 1295.7,419.2 1295.8,408.9 1295.9,412.9 1296.0,419.3 1296.0,409.4 1296.1,413.2 1296.2,409.1 1296.3,405.0 1296.4,411.2 1296.5,416.3 1296.5,415.8 1296.6,429.9 1296.7,425.8 1296.8,425.2 1296.9,402.5 1297.0,427.2 1297.0,417.9 1297.1,408.1 1297.2,412.6 1297.3,400.6 1297.4,413.7 1297.5,393.0 1297.5,397.5 1297.6,415.3 1297.7,406.7 1297.8,407.6 1297.9,401.5 1297.9,404.5 1298.0,401.1 1298.1,400.8 1298.2,403.5 1298.3,410.2 1298.4,424.6 1298.4,433.4 1298.5,434.6 1298.6,424.4 1298.7,439.3 1298.8,437.8 1298.9,431.7 1298.9,417.5 1299.0,428.9 1299.1,415.9 1299.2,404.8 1299.3,403.8 1299.4,425.5 1299.4,408.4 1299.5,410.2 1299.6,381.6 1299.7,402.0 1299.8,414.5 1299.9,410.7 1299.9,408.3 1300.0,415.0 1300.1,404.8 1300.2,414.3 1300.3,410.5 1300.3,381.8 1300.4,407.1 1300.5,403.8 1300.6,410.6 1300.7,434.5 1300.8,401.9 1300.8,422.9 1300.9,415.7 1301.0,436.3 1301.1,420.5 1301.2,409.7 1301.3,425.6 1301.3,397.3 1301.4,402.5 1301.5,407.6 1301.6,408.9 1301.7,394.3 1301.8,415.2 1301.8,383.0 1301.9,406.1 1302.0,398.0 1302.1,386.6 1302.2,399.5 1302.3,422.6 1302.3,425.2 1302.4,421.8 1302.5,415.5 1302.6,420.2 1302.7,406.8 1302.8,420.1 1302.8,404.2 1302.9,409.7 1303.0,433.8 1303.1,410.2 1303.2,407.9 1303.2,426.9 1303.3,417.9 1303.4,420.1 1303.5,419.6 1303.6,445.6 1303.7,404.7 1303.7,410.8 1303.8,414.0 1303.9,391.2 1304.0,381.6 1304.1,379.6 1304.2,405.2 1304.2,400.9 1304.3,402.9 1304.4,409.6 1304.5,398.3 1304.6,418.7 1304.7,413.5 1304.7,407.8 1304.8,413.9 1304.9,415.8 1305.0,422.6 1305.1,420.4 1305.2,418.7 1305.2,417.4 1305.3,409.7 1305.4,407.4 1305.5,404.9 1305.6,406.9 1305.6,407.1 1305.7,407.9 1305.8,418.3 1305.9,410.7 1306.0,404.8 1306.1,403.7 1306.1,397.7 1306.2,403.6 1306.3,408.2 1306.4,403.8 1306.5,385.4 1306.6,394.5 1306.6,411.0 1306.7,410.4 1306.8,416.0 1306.9,418.5 1307.0,414.4 1307.1,418.4 1307.1,422.4 1307.2,414.2 1307.3,423.1 1307.4,410.2 1307.5,412.3 1307.6,419.3 1307.6,400.2 1307.7,418.8 1307.8,404.2 1307.9,417.1 1308.0,416.9 1308.0,401.4 1308.1,407.5 1308.2,411.0 1308.3,417.7 1308.4,420.8 1308.5,405.7 1308.5,398.2 1308.6,384.4 1308.7,387.3 1308.8,383.4 1308.9,401.3 1309.0,393.7 1309.0,399.1 1309.1,413.1 1309.2,403.9 1309.3,396.7 1309.4,422.6 1309.5,422.1 1309.5,416.7 1309.6,415.8 1309.7,419.0 1309.8,413.8 1309.9,430.8 1310.0,407.8 1310.0,428.1 1310.1,429.6 1310.2,437.0 1310.3,436.2 1310.4,426.3 1310.5,424.4 1310.5,416.0 1310.6,408.7 1310.7,417.9 1310.8,426.0 1310.9,416.6 1310.9,408.9 1311.0,428.1 1311.1,407.1 1311.2,410.1 1311.3,422.2 1311.4,409.2 1311.4,403.1 1311.5,408.6 1311.6,400.4 1311.7,396.5 1311.8,388.2 1311.9,391.3 1311.9,410.8 1312.0,409.6 1312.1,410.7 1312.2,419.4 1312.3,409.9 1312.4,407.9 1312.4,408.2 1312.5,426.9 1312.6,419.4 1312.7,438.2 1312.8,419.3 1312.9,423.5 1312.9,413.5 1313.0,409.6 1313.1,422.0 1313.2,411.8 1313.3,409.6 1313.3,404.4 1313.4,401.1 1313.5,412.5 1313.6,423.4 1313.7,401.2 1313.8,406.6 1313.8,417.1 1313.9,397.2 1314.0,402.9 1314.1,398.4 1314.2,391.7 1314.3,405.3 1314.3,414.7 1314.4,407.4 1314.5,413.4 1314.6,412.3 1314.7,407.0 1314.8,415.7 1314.8,415.8 1314.9,422.5 1315.0,423.3 1315.1,435.3 1315.2,430.8 1315.3,413.4 1315.3,408.9 1315.4,426.9 1315.5,409.8 1315.6,405.7 1315.7,417.7 1315.8,405.0 1315.8,406.1 1315.9,400.8 1316.0,396.3 1316.1,404.6 1316.2,395.5 1316.2,400.0 1316.3,384.1 1316.4,380.0 1316.5,388.2 1316.6,391.3 1316.7,391.4 1316.7,396.9 1316.8,404.5 1316.9,395.7 1317.0,422.9 1317.1,412.1 1317.2,411.7 1317.2,414.2 1317.3,414.7 1317.4,422.6 1317.5,413.7 1317.6,400.5 1317.7,414.7 1317.7,413.9 1317.8,412.9 1317.9,419.2 1318.0,430.2 1318.1,423.5 1318.2,406.7 1318.2,419.3 1318.3,421.3 1318.4,394.7 1318.5,409.8 1318.6,420.1 1318.6,425.7 1318.7,417.1 1318.8,421.9 1318.9,412.0 1319.0,399.9 1319.1,397.6 1319.1,404.1 1319.2,392.1 1319.3,398.0 1319.4,412.5 1319.5,381.9 1319.6,397.8 1319.6,402.5 1319.7,389.2 1319.8,400.6 1319.9,396.9 1320.0,403.2 1320.1,411.7 1320.1,422.9 1320.2,408.0 1320.3,437.6 1320.4,424.5 1320.5,420.8 1320.6,434.1 1320.6,434.3 1320.7,418.3 1320.8,412.7 1320.9,413.3 1321.0,419.9 1321.1,405.1 1321.1,414.4 1321.2,388.6 1321.3,383.9 1321.4,390.5 1321.5,379.7 1321.5,391.4 1321.6,392.9 1321.7,396.3 1321.8,403.9 1321.9,381.6 1322.0,413.5 1322.0,402.1 1322.1,418.3 1322.2,413.0 1322.3,420.4 1322.4,431.5 1322.5,422.3 1322.5,427.1 1322.6,418.2 1322.7,420.9 1322.8,428.7 1322.9,408.4 1323.0,408.4 1323.0,395.1 1323.1,430.7 1323.2,412.1 1323.3,407.6 1323.4,397.0 1323.5,413.5 1323.5,391.5 1323.6,396.2 1323.7,418.3 1323.8,383.9 1323.9,423.9 1323.9,417.1 1324.0,417.9 1324.1,409.0 1324.2,418.4 1324.3,417.4 1324.4,424.7 1324.4,416.3 1324.5,415.1 1324.6,409.6 1324.7,434.6 1324.8,426.6 1324.9,423.4 1324.9,420.4 1325.0,415.8 1325.1,407.5 1325.2,416.1 1325.3,416.3 1325.4,400.1 1325.4,399.4 1325.5,395.0 1325.6,393.9 1325.7,415.0 1325.8,395.6 1325.9,398.5 1325.9,403.5 1326.0,395.3 1326.1,404.1 1326.2,406.0 1326.3,400.9 1326.4,413.4 1326.4,406.2 1326.5,404.0 1326.6,415.3 1326.7,415.0 1326.8,427.4 1326.8,420.6 1326.9,411.6 1327.0,418.3 1327.1,413.7 1327.2,422.2 1327.3,423.1 1327.3,434.7 1327.4,408.7 1327.5,422.8 1327.6,411.4 1327.7,423.3 1327.8,424.7 1327.8,410.4 1327.9,414.6 1328.0,411.4 1328.1,405.7 1328.2,405.6 1328.3,404.3 1328.3,409.1 1328.4,420.7 1328.5,393.9 1328.6,379.2 1328.7,382.0 1328.8,383.2 1328.8,393.9 1328.9,400.1 1329.0,405.6 1329.1,423.5 1329.2,428.9 1329.2,410.4 1329.3,405.5 1329.4,410.7 1329.5,421.7 1329.6,428.0 1329.7,436.9 1329.7,429.7 1329.8,425.2 1329.9,417.8 1330.0,420.4 1330.1,404.6 1330.2,416.9 1330.2,401.6 1330.3,417.5 1330.4,392.4 1330.5,389.3 1330.6,399.5 1330.7,379.8 1330.7,399.5 1330.8,382.1 1330.9,395.2 1331.0,409.9 1331.1,407.8 1331.2,411.1 1331.2,414.8 1331.3,420.0 1331.4,411.6 1331.5,402.1 1331.6,411.6 1331.7,408.2 1331.7,413.2 1331.8,420.6 1331.9,436.6 1332.0,433.5 1332.1,425.0 1332.1,436.7 1332.2,427.7 1332.3,410.0 1332.4,399.5 1332.5,392.0 1332.6,409.4 1332.6,402.5 1332.7,407.9 1332.8,414.1 1332.9,394.7 1333.0,398.6 1333.1,389.1 1333.1,405.9 1333.2,397.2 1333.3,389.9 1333.4,404.5 1333.5,406.6 1333.6,403.5 1333.6,398.1 1333.7,399.2 1333.8,409.5 1333.9,415.4 1334.0,405.3 1334.1,421.9 1334.1,429.5 1334.2,428.9 1334.3,425.1 1334.4,428.2 1334.5,426.1 1334.5,408.1 1334.6,423.2 1334.7,421.0 1334.8,410.1 1334.9,405.4 1335.0,413.1 1335.0,415.0 1335.1,383.7 1335.2,406.2 1335.3,377.6 1335.4,404.8 1335.5,389.4 1335.5,413.0 1335.6,390.4 1335.7,402.0 1335.8,406.2 1335.9,415.4 1336.0,396.8 1336.0,399.1 1336.1,413.1 1336.2,415.2 1336.3,425.9 1336.4,418.0 1336.5,429.4 1336.5,419.1 1336.6,436.8 1336.7,413.2 1336.8,404.8 1336.9,408.9 1337.0,396.5 1337.0,416.8 1337.1,400.1 1337.2,409.1 1337.3,409.3 1337.4,402.5 1337.4,390.6 1337.5,413.6 1337.6,394.0 1337.7,391.6 1337.8,380.0 1337.9,383.1 1337.9,390.6 1338.0,388.7 1338.1,387.3 1338.2,404.3 1338.3,400.6 1338.4,407.4 1338.4,414.9 1338.5,414.2 1338.6,401.1 1338.7,426.3 1338.8,421.2 1338.9,425.9 1338.9,415.8 1339.0,425.1 1339.1,428.6 1339.2,408.1 1339.3,427.3 1339.4,408.0 1339.4,401.6 1339.5,405.0 1339.6,409.2 1339.7,412.1 1339.8,414.3 1339.8,402.7 1339.9,424.2 1340.0,420.4 1340.1,409.8 1340.2,402.5 1340.3,391.5 1340.3,393.6 1340.4,385.9 1340.5,396.0 1340.6,386.8 1340.7,393.8 1340.8,419.7 1340.8,401.2 1340.9,407.2 1341.0,409.5 1341.1,402.9 1341.2,406.4 1341.3,408.5 1341.3,409.4 1341.4,430.9 1341.5,415.2 1341.6,420.1 1341.7,433.5 1341.8,431.7 1341.8,425.3 1341.9,430.9 1342.0,432.8 1342.1,423.4 1342.2,423.5 1342.2,414.8 1342.3,403.2 1342.4,392.7 1342.5,410.4 1342.6,406.0 1342.7,418.7 1342.7,401.1 1342.8,399.8 1342.9,406.1 1343.0,391.8 1343.1,399.6 1343.2,396.6 1343.2,398.4 1343.3,403.4 1343.4,404.3 1343.5,406.6 1343.6,415.2 1343.7,410.7 1343.7,408.4 1343.8,408.5 1343.9,425.9 1344.0,424.5 1344.1,426.8 1344.2,436.1 1344.2,419.3 1344.3,405.2 1344.4,423.8 1344.5,368.8 1344.6,417.9 1344.7,413.1 1344.7,417.4 1344.8,394.3 1344.9,418.8 1345.0,401.0 1345.1,394.5 1345.1,398.0 1345.2,383.1 1345.3,406.0 1345.4,420.3 1345.5,393.7 1345.6,399.5 1345.6,407.9 1345.7,408.2 1345.8,416.8 1345.9,418.7 1346.0,416.9 1346.1,410.0 1346.1,405.4 1346.2,393.8 1346.3,415.8 1346.4,431.0 1346.5,412.5 1346.6,450.4 1346.6,428.7 1346.7,410.9 1346.8,429.3 1346.9,421.2 1347.0,394.9 1347.1,414.7 1347.1,406.3 1347.2,399.2 1347.3,420.8 1347.4,409.1 1347.5,398.9 1347.5,399.3 1347.6,393.3 1347.7,381.8 1347.8,384.2 1347.9,393.4 1348.0,406.5 1348.0,395.8 1348.1,410.5 1348.2,422.0 1348.3,420.8 1348.4,410.0 1348.5,410.9 1348.5,415.1 1348.6,401.2 1348.7,411.5 1348.8,418.4 1348.9,413.9 1349.0,415.9 1349.0,412.0 1349.1,419.4 1349.2,412.8 1349.3,426.0 1349.4,421.7 1349.5,414.1 1349.5,423.8 1349.6,413.8 1349.7,412.2 1349.8,403.5 1349.9,431.2 1350.0,399.7 1350.0,413.2 1350.1,409.8 1350.2,391.8 1350.3,392.9 1350.4,402.5 1350.4,386.6 1350.5,384.3 1350.6,399.7 1350.7,400.6 1350.8,403.0 1350.9,393.6 1350.9,416.1 1351.0,424.0 1351.1,416.7 1351.2,414.3 1351.3,404.3 1351.4,412.5 1351.4,406.2 1351.5,417.3 1351.6,432.5 1351.7,420.0 1351.8,426.7 1351.9,416.3 1351.9,430.5 1352.0,408.1 1352.1,421.3 1352.2,413.9 1352.3,403.1 1352.4,412.4 1352.4,418.0 1352.5,393.8 1352.6,405.1 1352.7,389.9 1352.8,394.9 1352.8,413.5 1352.9,404.0 1353.0,403.1 1353.1,411.7 1353.2,396.3 1353.3,424.6 1353.3,416.6 1353.4,405.1 1353.5,400.8 1353.6,403.2 1353.7,418.5 1353.8,407.6 1353.8,406.0 1353.9,395.3 1354.0,395.3 1354.1,412.9 1354.2,414.8 1354.3,417.2 1354.3,427.7 1354.4,421.1 1354.5,417.0 1354.6,415.8 1354.7,407.9 1354.8,410.3 1354.8,415.2 1354.9,400.9 1355.0,402.4 1355.1,414.7 1355.2,401.3 1355.3,411.8 1355.3,399.8 1355.4,406.5 1355.5,403.7 1355.6,397.0 1355.7,410.3 1355.7,398.1 1355.8,392.8 1355.9,410.5 1356.0,416.8 1356.1,409.3 1356.2,416.7 1356.2,429.6 1356.3,400.6 1356.4,425.3 1356.5,407.7 1356.6,413.8 1356.7,413.3 1356.7,413.5 1356.8,417.5 1356.9,407.3 1357.0,415.4 1357.1,407.1 1357.2,417.8 1357.2,410.1 1357.3,434.8 1357.4,415.0 1357.5,407.2 1357.6,409.7 1357.7,405.1 1357.7,400.7 1357.8,387.7 1357.9,404.1 1358.0,427.8 1358.1,395.4 1358.1,400.6 1358.2,405.0 1358.3,401.6 1358.4,397.1 1358.5,407.8 1358.6,418.1 1358.6,404.1 1358.7,416.3 1358.8,423.3 1358.9,426.4 1359.0,424.4 1359.1,443.0 1359.1,441.7 1359.2,427.6 1359.3,443.8 1359.4,407.1 1359.5,393.5 1359.6,411.8 1359.6,411.2 1359.7,412.5 1359.8,435.7 1359.9,370.2 1360.0,423.3 1360.1,411.8 1360.1,415.9 1360.2,410.4 1360.3,405.5 1360.4,404.3 1360.5,410.5 1360.6,378.2 1360.6,393.7 1360.7,380.5 1360.8,385.5 1360.9,398.2 1361.0,398.9 1361.0,402.6 1361.1,402.5 1361.2,407.1 1361.3,412.9 1361.4,413.1 1361.5,406.3 1361.5,424.0 1361.6,433.6 1361.7,439.2 1361.8,426.9 1361.9,418.0 1362.0,406.2 1362.0,426.5 1362.1,418.0 1362.2,424.4 1362.3,414.1 1362.4,414.2 1362.5,402.9 1362.5,403.9 1362.6,406.9 1362.7,409.9 1362.8,399.0 1362.9,403.8 1363.0,387.1 1363.0,381.4 1363.1,382.5 1363.2,379.5 1363.3,403.3 1363.4,398.0 1363.4,404.1 1363.5,416.6 1363.6,407.7 1363.7,411.8 1363.8,406.6 1363.9,409.3 1363.9,404.6 1364.0,413.1 1364.1,410.5 1364.2,402.8 1364.3,402.2 1364.4,414.2 1364.4,433.0 1364.5,413.1 1364.6,418.0 1364.7,429.7 1364.8,435.0 1364.9,428.9 1364.9,426.6 1365.0,395.6 1365.1,414.3 1365.2,411.8 1365.3,404.3 1365.4,398.1 1365.4,409.2 1365.5,411.1 1365.6,401.8 1365.7,395.9 1365.8,401.4 1365.9,404.7 1365.9,405.7 1366.0,385.9 1366.1,404.8 1366.2,404.8 1366.3,421.9 1366.3,417.3 1366.4,405.4 1366.5,415.3 1366.6,404.0 1366.7,414.3 1366.8,420.1 1366.8,410.1 1366.9,419.3 1367.0,425.5 1367.1,412.4 1367.2,430.9 1367.3,430.0 1367.3,417.6 1367.4,415.7 1367.5,428.7 1367.6,413.1 1367.7,412.6 1367.8,418.0 1367.8,403.6 1367.9,418.3 1368.0,391.4 1368.1,381.2 1368.2,367.5 1368.3,390.6 1368.3,376.6 1368.4,396.8 1368.5,408.6" fill="none" stroke="#0000ff" stroke-width="1" stroke-linejoin="round"/><clipPath id="c2"><rect x="539.5" y="532.5" width="830.0" height="138.0"/></clipPath><polyline clip-path="url(#c2)" points="540.5,669.0 541.9,585.1 543.6,568.0 545.3,547.9 547.2,543.3 549.3,545.1 551.5,546.2 553.6,548.7 556.5,549.1 558.7,550.8 560.8,553.0 562.2,558.0 563.7,564.4 565.8,570.2 568.3,573.7 570.1,569.4 572.6,565.1 575.1,562.6 578.0,565.4 580.2,563.4 583.0,562.0 585.2,557.3 588.0,555.4 590.9,548.7 594.5,543.6 597.4,548.7 600.2,553.0 602.7,556.8 606.7,555.4 608.8,548.7 611.0,546.5 613.1,547.2 615.0,555.1 617.0,562.6 619.6,563.4 621.7,560.1 623.9,553.4 628.2,551.1 631.0,553.4 633.9,550.1 637.9,545.1 641.1,549.4 643.7,555.8 645.7,561.1 648.2,558.7 652.5,556.5 654.7,557.3 656.8,554.4 660.4,553.4 664.0,554.4 666.9,550.5 671.9,549.4 674.8,554.4 678.8,560.5 681.2,557.7 684.1,553.0 686.9,547.2 691.2,547.6 694.8,551.5 697.7,558.7 700.6,559.4 703.0,557.3 705.6,551.5 709.9,547.6 712.7,550.5 717.0,550.8 720.2,545.1 723.5,550.1 726.8,556.8 729.2,555.8 731.7,558.3 734.2,556.8 737.1,559.4 741.1,562.6 741.4,562.0 743.6,557.7 747.2,555.4 750.8,554.8 753.6,550.8 755.8,553.0 758.3,553.7 760.8,557.3 762.9,556.5 765.5,557.3 768.0,553.4 772.3,551.1 775.1,551.9 777.6,551.9 780.1,559.1 784.4,561.6 787.3,555.8 792.3,549.4 795.9,553.0 799.1,558.7 803.1,555.1 806.7,549.7 811.0,544.8 813.4,550.5 818.1,553.0 821.0,550.8 823.1,552.2 825.7,553.0 828.9,560.1 833.2,567.3 837.5,566.3 840.1,562.6 842.5,561.1 844.6,554.4 848.9,550.1 852.5,556.2 856.4,552.2 859.3,542.2 863.6,532.5 866.1,539.3 869.0,544.4 871.6,550.1 873.6,552.2 876.2,560.1 881.2,566.6 885.9,564.0 888.4,557.7 891.9,562.6 894.8,570.9 897.0,573.7 899.4,571.6 902.7,557.3 907.7,546.8 911.3,550.5 914.6,559.4 918.5,555.8 921.3,552.2 924.2,557.3 928.5,558.7 931.4,555.1 936.1,554.8 939.0,558.3 943.5,556.2 946.1,554.0 946.7,554.4 949.0,556.5 952.2,552.2 955.3,546.5 958.6,551.5 962.9,560.1 966.5,555.8 970.1,548.7 974.8,545.1 979.1,551.5 982.0,563.7 985.1,568.0 989.2,563.0 993.0,564.8 996.6,567.7 1000.9,563.0 1004.5,550.8 1008.4,538.2 1012.4,542.9 1015.2,553.0 1019.5,563.4 1025.3,568.7 1027.9,566.9 1030.3,568.0 1033.9,559.4 1037.5,551.1 1041.8,551.1 1044.6,555.4 1046.8,555.8 1049.6,559.1 1053.2,558.7 1056.5,555.8 1059.7,562.3 1063.7,573.7 1067.6,568.0 1070.9,556.2 1074.7,555.8 1076.9,563.7 1079.0,569.7 1081.9,570.2 1084.8,564.0 1089.8,556.8 1091.9,558.7 1094.8,558.7 1097.7,564.0 1102.0,565.4 1104.1,563.4 1107.0,563.4 1109.1,560.1 1111.3,560.5 1115.6,558.3 1119.2,549.7 1123.5,546.8 1126.3,553.7 1131.1,569.4 1134.9,568.0 1138.2,562.6 1140.7,564.0 1145.0,563.4 1147.8,556.8 1150.3,554.8 1152.9,550.1 1156.5,550.5 1159.3,553.7 1162.2,554.4 1165.1,562.0 1169.4,567.7 1171.8,564.0 1174.4,564.4 1176.5,563.0 1179.4,565.9 1183.7,567.3 1187.6,553.7 1191.6,541.9 1194.7,546.5 1198.0,556.8 1203.0,559.4 1205.2,557.7 1208.1,559.7 1210.9,558.7 1213.8,560.8 1217.1,563.0 1220.2,553.7 1224.5,546.5 1228.6,547.2 1231.7,550.1 1234.9,545.1 1239.2,541.5 1243.9,547.9 1246.8,559.4 1250.3,564.4 1253.5,562.6 1255.8,564.0 1258.9,558.7 1262.5,554.8 1265.0,556.5 1268.3,554.4 1272.6,552.5 1276.9,556.8 1280.2,564.4 1283.3,560.8 1286.9,554.4 1291.2,557.3 1294.1,556.8 1296.9,553.7 1299.1,554.4 1301.9,551.9 1305.5,555.8 1308.4,558.3 1311.7,553.0 1316.0,551.9 1319.1,558.0 1324.9,563.0 1328.5,568.3 1332.3,563.4 1335.6,551.9 1340.4,544.4 1344.2,545.1 1347.1,551.5 1350.0,550.5 1353.5,554.4 1357.1,564.0 1361.4,558.8 1364.2,549.2 1368.5,546.6" fill="none" stroke="#ff0000" stroke-width="1.1" stroke-linejoin="round"/><text x="540.5" y="498.5" text-anchor="middle">0</text><text x="622.5" y="498.5" text-anchor="middle">1000</text><text x="705.5" y="498.5" text-anchor="middle">2000</text><text x="788.5" y="498.5" text-anchor="middle">3000</text><text x="871.5" y="498.5" text-anchor="middle">4000</text><text x="954.5" y="498.5" text-anchor="middle">5000</text><text x="1037.5" y="498.5" text-anchor="middle">6000</text><text x="1120.5" y="498.5" text-anchor="middle">7000</text><text x="1203.5" y="498.5" text-anchor="middle">8000</text><text x="1286.5" y="498.5" text-anchor="middle">9000</text><text x="1368.5" y="498.5" text-anchor="middle">10000</text><text x="535.0" y="349.5" text-anchor="end">50</text><text x="535.0" y="417.5" text-anchor="end">0</text><text x="535.0" y="485.5" text-anchor="end">-50</text><text x="540.5" y="688.5" text-anchor="middle">0</text><text x="622.5" y="688.5" text-anchor="middle">1000</text><text x="705.5" y="688.5" text-anchor="middle">2000</text><text x="788.5" y="688.5" text-anchor="middle">3000</text><text x="871.5" y="688.5" text-anchor="middle">4000</text><text x="954.5" y="688.5" text-anchor="middle">5000</text><text x="1037.5" y="688.5" text-anchor="middle">6000</text><text x="1120.5" y="688.5" text-anchor="middle">7000</text><text x="1203.5" y="688.5" text-anchor="middle">8000</text><text x="1286.5" y="688.5" text-anchor="middle">9000</text><text x="1368.5" y="688.5" text-anchor="middle">10000</text><text x="535.0" y="562.5" text-anchor="end">0</text><text x="535.0" y="598.5" text-anchor="end">-2</text><text x="535.0" y="633.5" text-anchor="end">-4</text><text x="535.0" y="669.5" text-anchor="end">-6</text></svg>
<div class="tb"></div>
<div class="ttl">Figure 1</div>
<span class="mi" style="left:8px">文件(<u>F</u>)</span>
<span class="mi" style="left:73px">编辑(<u>E</u>)</span>
<span class="mi" style="left:138px">查看(<u>V</u>)</span>
<span class="mi" style="left:205px">插入(<u>I</u>)</span>
<span class="mi" style="left:266px">工具(<u>T</u>)</span>
<span class="mi" style="left:331px">桌面(<u>D</u>)</span>
<span class="mi" style="left:398px">窗口(<u>W</u>)</span>
<span class="mi" style="left:469px">帮助(<u>H</u>)</span>
<div class="l1"></div><div class="tool">
<i class="sep" style="left:115px"></i><i class="sep" style="left:151px"></i><i class="sep" style="left:215px"></i>
</div><div class="l2"></div><div class="l3"></div>
<svg id="chrome" width="1065" height="110" viewBox="400 211 1065 110">
<!-- matlab icon -->
<defs>
<linearGradient id="mi1" x1="0" y1="0" x2="0" y2="1"><stop offset="0" stop-color="#fdfdfd"/><stop offset="1" stop-color="#dcdcdc"/></linearGradient>
<linearGradient id="mi2" x1="0" y1="0" x2="1" y2="0"><stop offset="0" stop-color="#d8501c"/><stop offset=".35" stop-color="#f7b52c"/><stop offset=".65" stop-color="#ee7a1c"/><stop offset="1" stop-color="#b3241f"/></linearGradient><linearGradient id="mi3" x1="0" y1="0" x2="1" y2="0"><stop offset="0" stop-color="#6db2ea"/><stop offset="1" stop-color="#2f6fb8"/></linearGradient>
<linearGradient id="pg" x1="0" y1="0" x2="1" y2="1"><stop offset="0" stop-color="#ffffff"/><stop offset="1" stop-color="#cfe0f7"/></linearGradient>
<linearGradient id="fo" x1="0" y1="0" x2="0" y2="1"><stop offset="0" stop-color="#fff3a8"/><stop offset="1" stop-color="#e9b424"/></linearGradient>
<linearGradient id="cb" x1="0" y1="0" x2="0" y2="1"><stop offset="0" stop-color="#8d8df0"/><stop offset=".4" stop-color="#8fe3e8"/><stop offset=".7" stop-color="#f0ea8c"/><stop offset="1" stop-color="#f29a7c"/></linearGradient>
<linearGradient id="pp" x1="0" y1="0" x2="1" y2="0"><stop offset="0" stop-color="#ffffff"/><stop offset="1" stop-color="#e3e3e3"/></linearGradient>
<linearGradient id="sv" x1="0" y1="0" x2="1" y2="1"><stop offset="0" stop-color="#8f8ff0"/><stop offset="1" stop-color="#2a2a9a"/></linearGradient>
</defs>
<g>
<rect x="410.5" y="220.5" width="19" height="19" rx="1.5" fill="url(#mi1)" stroke="#bdbdbd"/>
<rect x="411" y="221" width="18" height="2.2" fill="#4f83b6"/><rect x="411" y="220.6" width="18" height=".8" fill="#7fa8d0"/>
<path d="M412.7 231.3 L419.6 227.3 L420.4 228.6 L417.4 234.8 L415.6 233.6Z" fill="url(#mi3)"/>
<path d="M417 234.4 L420.4 227.6 L421.4 225.2 L421.6 232 L418.8 236.4Z" fill="#9c2a1a"/>
<path d="M418.4 235.8 C420 233 420.8 227 421.7 225.1 C422.9 226 424.1 231 426.3 234.9 C425 234 424 233.2 423 233.6 C421.6 234.4 420.2 237.2 418.9 237.5 C418.5 237 418.4 236.4 418.4 235.8Z" fill="url(#mi2)"/>
</g>
<!-- window buttons -->
<path d="M1318 229.5h12" stroke="#000" stroke-width="1.1"/>
<rect x="1376.5" y="224.5" width="11" height="11" fill="none" stroke="#000" stroke-width="1.1"/>
<path d="M1435.3 224.3l11.6 11.6M1446.9 224.3l-11.6 11.6" stroke="#000" stroke-width="1.15"/>
<!-- dock arrow -->
<path d="M1456.2 262.8 C1457.4 261 1458.6 260.2 1459.6 260.2 L1462.4 261.8 L1465 264.2 L1465 266.8 L1458.9 266.8 L1458.9 265.5 L1461.6 265.5 C1460.2 263.6 1458.6 262.7 1456.2 262.8Z" fill="#000"/>
<!-- new -->
<g>
<path d="M408.5 284.5h11l5 5v14h-16z" fill="url(#pg)" stroke="#6f86b8"/>
<path d="M409.5 303.5h15.5M424.5 289.5v14" stroke="#5a6a9a" stroke-width="1.6"/>
<path d="M419.5 284.5v5h5z" fill="#7f93c8" stroke="#6f86b8" stroke-width=".6"/>
<circle cx="408.6" cy="288" r="2.9" fill="#f08a3c"/><circle cx="408.6" cy="288" r="1.2" fill="#ffe04a"/>
<path d="M408.6 283.8v1.3M408.6 290.9v1.3M404.4 288h1.3M411.5 288h1.3M405.6 285l.9.9M411.6 285l-.9.9M405.6 291l.9-.9M411.6 291l-.9-.9" stroke="#e8702a" stroke-width="1"/>
</g>
<!-- open -->
<g>
<path d="M433.5 289.5h6l1.5 2h8.5v11h-16z" fill="#e6b530" stroke="#b98a14"/>
<path d="M433.6 302.6 L436.5 293.5 H452 L449.4 302.6Z" fill="url(#fo)" stroke="#c9981c"/>
<path d="M443 288.6c2-3 5.5-3 7.2-.4" fill="none" stroke="#5f86b4" stroke-width="1.4"/><path d="M451.8 285.4l-.2 4.4-3.8-1.6z" fill="#5f86b4"/>
</g>
<!-- save -->
<g>
<path d="M462.5 285.5h17l1 1v16.5h-18z" fill="url(#sv)" stroke="#3a3a9c"/>
<rect x="466" y="286" width="10" height="8" fill="#f4f6ff"/><path d="M466 294l10-8v8z" fill="#dfe4f6"/>
<rect x="467.5" y="297" width="8.5" height="6" fill="#d8dcf0"/><rect x="469" y="298" width="3" height="4" fill="#1c1c50"/>
</g>
<!-- print -->
<g>
<path d="M493 285h7l3.5 8h-8.5z" fill="#bfdcf7" stroke="#9fb6d0" stroke-width=".6"/>
<path d="M490.5 294.5 L495 291 H503.5 L507.5 294.5 V299.5 L499 303.5 L490.5 299.5Z" fill="#b9b9b9" stroke="#8a8a8a"/>
<path d="M490.5 294.5 L499 298.5 L507.5 294.5 L503.5 291 H495Z" fill="#dedede"/>
<path d="M491 297l8 3.8 8-3.8" fill="none" stroke="#6e6e6e" stroke-width="1.2"/>
<circle cx="504.5" cy="297.5" r=".9" fill="#4c4"/>
</g>
<!-- link -->
<g>
<rect x="529.5" y="284.5" width="12" height="11" fill="#e9eef7" stroke="#2f4f93"/><rect x="529" y="284" width="13" height="3" fill="#2f4f93"/>
<rect x="525.5" y="288.5" width="12" height="11" fill="#f2f5fb" stroke="#2f4f93"/><rect x="525" y="288" width="13" height="3" fill="#2f4f93"/>
<ellipse cx="531.5" cy="300" rx="4.6" ry="3" fill="none" stroke="#7892b4" stroke-width="2"/>
<ellipse cx="539.5" cy="300" rx="4.6" ry="3" fill="none" stroke="#7892b4" stroke-width="2"/>
<path d="M532.5 300h6" stroke="#cfd9e8" stroke-width="1.4"/>
</g>
<!-- colorbar -->
<rect x="565.7" y="284.7" width="11.2" height="18" rx="1" fill="url(#cb)" stroke="#3c4f8e" stroke-width="1.4"/>
<!-- legend -->
<g>
<rect x="589.7" y="284.7" width="18" height="18" rx="1" fill="#fff" stroke="#3c4f8e" stroke-width="1.4"/>
<rect x="590.5" y="285.5" width="16.5" height="7" fill="#e4e9f4"/>
<rect x="592" y="288" width="5.5" height="4.5" fill="#e85e5e"/><rect x="592" y="295.5" width="5.5" height="4.5" fill="#6565e8"/>
<path d="M600 290h5M600 297.8h5" stroke="#333" stroke-width="1.3"/>
</g>
<!-- cursor -->
<path d="M631.6 285.6 V300.6 L635.2 297.4 L638 303.6 L640.4 302.4 L637.6 296.6 L642.4 296.4Z" fill="#fff" stroke="#000" stroke-width="1.2" stroke-linejoin="miter"/>
<!-- property panel -->
<g>
<rect x="653.5" y="284.5" width="19" height="19" fill="url(#pp)" stroke="#8c8c8c"/>
<rect x="653" y="284" width="20" height="3" fill="#5b8fc4"/><rect x="653" y="284" width="20" height="1" fill="#8fb6dc"/>
<rect x="664" y="287" width="8.5" height="16" fill="#c9c9c9"/>
<path d="M665.5 292h6M665.5 296h6M665.5 300h6" stroke="#333" stroke-width="1.2"/>
</g>
</svg>

</div>
</body></html>
